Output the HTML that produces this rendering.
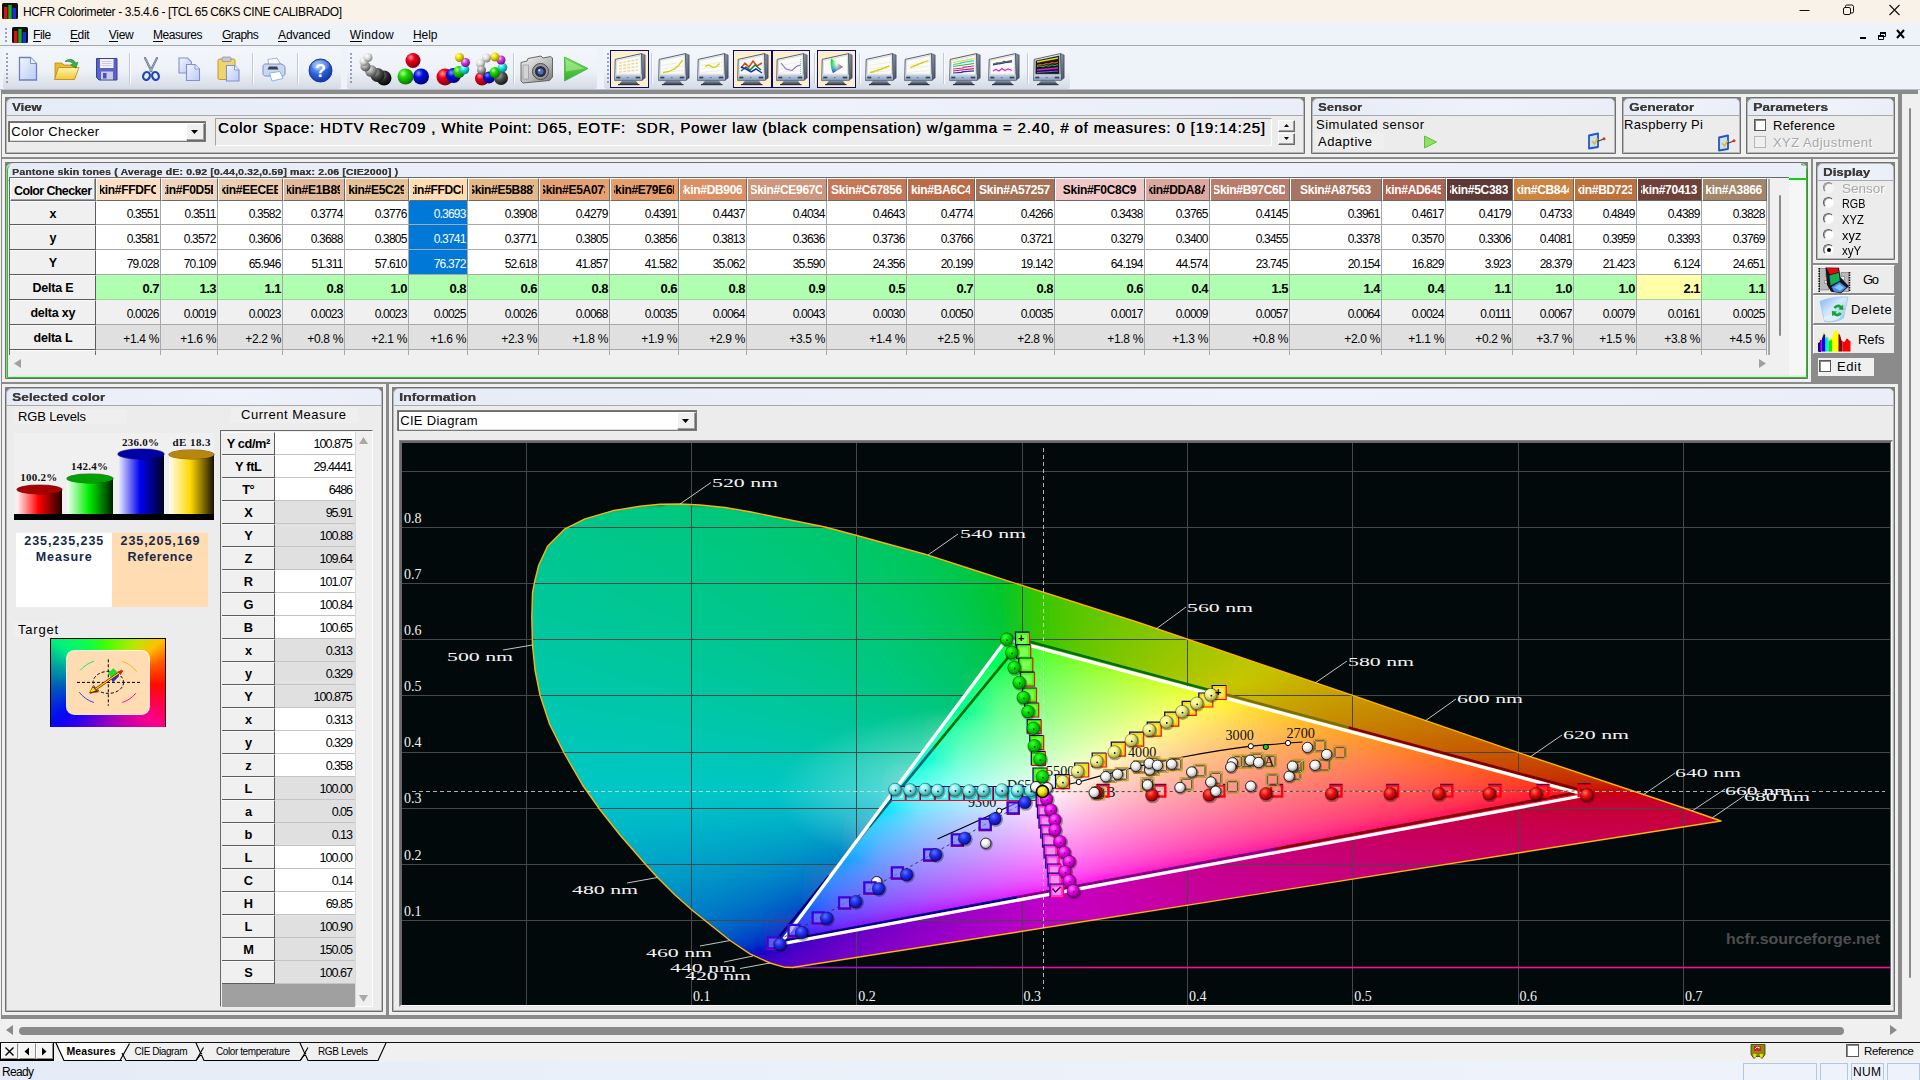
<!DOCTYPE html>
<html><head><meta charset="utf-8"><title>HCFR Colorimeter</title>
<style>
html,body{margin:0;padding:0;background:#f0f0f0;}
body{width:1920px;height:1080px;overflow:hidden;position:relative;font-family:"Liberation Sans",sans-serif;}
#app{position:absolute;left:0;top:0;width:1920px;height:1080px;overflow:hidden;}
#app div,#app span,#app svg{position:absolute}
</style></head><body><div id="app">
<div style="position:absolute;left:0px;top:0px;width:1920px;height:23px;background:#f9f2e8;"></div>
<svg style="position:absolute;left:2px;top:3px" width="16.0" height="16.0" viewBox="0 0 16 16"><rect x="0" y="0" width="16" height="16" rx="1.5" fill="#111"/><rect x="2" y="4" width="3.4" height="12" fill="#e01010"/><rect x="6.3" y="2" width="3.4" height="14" fill="#10b020"/><rect x="10.6" y="5" width="3.4" height="11" fill="#1030e0"/></svg>
<span style="position:absolute;left:23.00px;top:3.64px;font:400 12px/16px 'Liberation Sans',sans-serif;color:#000;white-space:pre;letter-spacing:-0.404px;">HCFR Colorimeter - 3.5.4.6 - [TCL 65 C6KS CINE CALIBRADO]</span>
<svg style="position:absolute;left:1780px;top:0" width="140" height="23" viewBox="0 0 140 23"><path d="M19.5 10.5h10" stroke="#111" stroke-width="1" fill="none"/><rect x="63.5" y="7.5" width="7" height="7" rx="1.5" fill="none" stroke="#111" stroke-width="1"/><path d="M65.5 7.5v-1.2a1.3 1.3 0 0 1 1.3-1.3h5a1.7 1.7 0 0 1 1.7 1.7v5a1.3 1.3 0 0 1-1.3 1.3h-1.2" fill="none" stroke="#111" stroke-width="1"/><path d="M109.5 5l10 10M119.5 5l-10 10" stroke="#111" stroke-width="1.1" fill="none"/></svg>
<div style="position:absolute;left:0px;top:23px;width:1920px;height:23px;background:#eef3fa;"></div>
<div style="position:absolute;left:5px;top:28px;width:2px;height:14px;background:repeating-linear-gradient(#7d8ea8 0 2px,transparent 2px 4px);opacity:.8"></div>
<svg style="position:absolute;left:12px;top:27px" width="16.0" height="16.0" viewBox="0 0 16 16"><rect x="0" y="0" width="16" height="16" rx="1.5" fill="#111"/><rect x="2" y="4" width="3.4" height="12" fill="#e01010"/><rect x="6.3" y="2" width="3.4" height="14" fill="#10b020"/><rect x="10.6" y="5" width="3.4" height="11" fill="#1030e0"/></svg>
<span style="position:absolute;left:33.00px;top:27.14px;font:400 12px/16px 'Liberation Sans',sans-serif;color:#000;white-space:pre;letter-spacing:-0.362px;">File</span>
<div style="position:absolute;left:33px;top:41px;width:8px;height:1px;background:#000;"></div>
<span style="position:absolute;left:70.00px;top:27.14px;font:400 12px/16px 'Liberation Sans',sans-serif;color:#000;white-space:pre;letter-spacing:-0.393px;">Edit</span>
<div style="position:absolute;left:70px;top:41px;width:9px;height:1px;background:#000;"></div>
<span style="position:absolute;left:108.75px;top:27.14px;font:400 12px/16px 'Liberation Sans',sans-serif;color:#000;white-space:pre;letter-spacing:-0.264px;">View</span>
<div style="position:absolute;left:109px;top:41px;width:9px;height:1px;background:#000;"></div>
<span style="position:absolute;left:153.00px;top:27.14px;font:400 12px/16px 'Liberation Sans',sans-serif;color:#000;white-space:pre;letter-spacing:-0.455px;">Measures</span>
<div style="position:absolute;left:153px;top:41px;width:10px;height:1px;background:#000;"></div>
<span style="position:absolute;left:222.00px;top:27.14px;font:400 12px/16px 'Liberation Sans',sans-serif;color:#000;white-space:pre;letter-spacing:-0.520px;">Graphs</span>
<div style="position:absolute;left:222px;top:41px;width:10px;height:1px;background:#000;"></div>
<span style="position:absolute;left:278.00px;top:27.14px;font:400 12px/16px 'Liberation Sans',sans-serif;color:#000;white-space:pre;letter-spacing:-0.125px;">Advanced</span>
<div style="position:absolute;left:278px;top:41px;width:9px;height:1px;background:#000;"></div>
<span style="position:absolute;left:349.75px;top:27.14px;font:400 12px/16px 'Liberation Sans',sans-serif;color:#000;white-space:pre;letter-spacing:0.264px;">Window</span>
<div style="position:absolute;left:350px;top:41px;width:12px;height:1px;background:#000;"></div>
<span style="position:absolute;left:413.00px;top:27.14px;font:400 12px/16px 'Liberation Sans',sans-serif;color:#000;white-space:pre;letter-spacing:-0.060px;">Help</span>
<div style="position:absolute;left:413px;top:41px;width:9px;height:1px;background:#000;"></div>
<svg style="position:absolute;left:1850px;top:26px" width="60" height="18" viewBox="0 0 60 18"><rect x="10" y="11" width="6" height="2" fill="#000"/><path d="M30.5 6.5h5v4h-5z M28.5 9.5h5v4h-5z" fill="#eef3fa" stroke="#000" stroke-width="1"/><path d="M30 6h6v2h-6z M28 9h6v2h-6z" fill="#000"/><path d="M47 4l7 8M54 4l-7 8" stroke="#000" stroke-width="2" fill="none"/></svg>
<div style="position:absolute;left:0px;top:46px;width:1920px;height:44px;background:#eef3fa;"></div>
<div style="position:absolute;left:0px;top:45px;width:1920px;height:1px;background:#a9a9a9;"></div>
<div style="position:absolute;left:3px;top:48px;width:338px;height:41px;background:linear-gradient(#f3f6fb 0%,#eef2f8 55%,#d5dbe6 100%);border-radius:3px;"></div>
<div style="position:absolute;left:6px;top:53px;width:2px;height:30px;background:repeating-linear-gradient(#7d8ea8 0 2px,transparent 2px 4px);opacity:.8"></div>
<div style="position:absolute;left:347px;top:48px;width:250px;height:41px;background:linear-gradient(#f3f6fb 0%,#eef2f8 55%,#d5dbe6 100%);border-radius:3px;"></div>
<div style="position:absolute;left:350px;top:53px;width:2px;height:30px;background:repeating-linear-gradient(#7d8ea8 0 2px,transparent 2px 4px);opacity:.8"></div>
<div style="position:absolute;left:604px;top:48px;width:466px;height:41px;background:linear-gradient(#f3f6fb 0%,#eef2f8 55%,#d5dbe6 100%);border-radius:3px;"></div>
<div style="position:absolute;left:607px;top:53px;width:2px;height:30px;background:repeating-linear-gradient(#7d8ea8 0 2px,transparent 2px 4px);opacity:.8"></div>
<div style="position:absolute;left:0px;top:89px;width:1920px;height:1px;background:#b9bec8;"></div>

<svg width="0" height="0" style="position:absolute">
<defs>
<linearGradient id="gBez" x1="0" y1="0" x2="1" y2="1"><stop offset="0" stop-color="#dfe6ee"/><stop offset=".5" stop-color="#a9b6c6"/><stop offset="1" stop-color="#5d6b80"/></linearGradient>
<linearGradient id="gStand" x1="0" y1="0" x2="0" y2="1"><stop offset="0" stop-color="#9aa8ba"/><stop offset="1" stop-color="#3a4352"/></linearGradient><linearGradient id="gSide" x1="0" y1="0" x2="1" y2="1"><stop offset="0" stop-color="#9aa5b6"/><stop offset="1" stop-color="#3a4454"/></linearGradient><linearGradient id="gStrip" x1="0" y1="0" x2="0" y2="1"><stop offset="0" stop-color="#c9d6e6"/><stop offset="1" stop-color="#7f95b6"/></linearGradient>
<radialGradient id="sR" cx=".35" cy=".3" r=".75"><stop offset="0" stop-color="#ff9a9a"/><stop offset=".35" stop-color="#e8001a"/><stop offset="1" stop-color="#7a0010"/></radialGradient>
<radialGradient id="sG" cx=".35" cy=".3" r=".75"><stop offset="0" stop-color="#b8ff9a"/><stop offset=".35" stop-color="#20d800"/><stop offset="1" stop-color="#0a6a00"/></radialGradient>
<radialGradient id="sB" cx=".35" cy=".3" r=".75"><stop offset="0" stop-color="#8a9aff"/><stop offset=".35" stop-color="#0010e0"/><stop offset="1" stop-color="#000070"/></radialGradient>
<radialGradient id="sY" cx=".35" cy=".3" r=".75"><stop offset="0" stop-color="#fffbc0"/><stop offset=".4" stop-color="#f0e000"/><stop offset="1" stop-color="#8a7a00"/></radialGradient>
<radialGradient id="sC" cx=".35" cy=".3" r=".75"><stop offset="0" stop-color="#d8ffff"/><stop offset=".4" stop-color="#20e0e0"/><stop offset="1" stop-color="#007a80"/></radialGradient>
<radialGradient id="sM" cx=".35" cy=".3" r=".75"><stop offset="0" stop-color="#ffd0ff"/><stop offset=".4" stop-color="#d040e0"/><stop offset="1" stop-color="#700080"/></radialGradient>
<radialGradient id="sW" cx=".35" cy=".3" r=".75"><stop offset="0" stop-color="#ffffff"/><stop offset=".5" stop-color="#d8d8d8"/><stop offset="1" stop-color="#777"/></radialGradient>
<radialGradient id="sL" cx=".35" cy=".3" r=".75"><stop offset="0" stop-color="#eeeeee"/><stop offset=".5" stop-color="#9a9a9a"/><stop offset="1" stop-color="#444"/></radialGradient>
<radialGradient id="sD" cx=".35" cy=".3" r=".75"><stop offset="0" stop-color="#aaaaaa"/><stop offset=".5" stop-color="#4a4a4a"/><stop offset="1" stop-color="#111"/></radialGradient>
<radialGradient id="sK" cx=".35" cy=".3" r=".75"><stop offset="0" stop-color="#888"/><stop offset=".5" stop-color="#2a2a2a"/><stop offset="1" stop-color="#000"/></radialGradient>
<radialGradient id="sHelp" cx=".4" cy=".3" r=".8"><stop offset="0" stop-color="#9dc0ff"/><stop offset=".5" stop-color="#2a5fd8"/><stop offset="1" stop-color="#0a2a90"/></radialGradient>
<g id="mon">
  <path d="M8.500 27.300 L21.500 27.300 L24.500 31.200 L5 31.200z" fill="url(#gStand)"/>
  <path d="M4 31h21.500v1.200H4z" fill="#2e3440"/>
  <path d="M27.500 .6 L31.200 2 L31.200 25 L28 27.300z" fill="url(#gSide)" stroke="#3d4656" stroke-width=".5"/>
  <path d="M1.200 6.400 L27.500 .6 L28 27.300 L.7 27.600z" fill="#f3f5f8" stroke="#465062" stroke-width=".9" stroke-linejoin="round"/>
  <path d="M1.300 21.800 L27.800 21.800 L28 27.300 L.7 27.600z" fill="url(#gStrip)"/>
  <rect x="2.300" y="23.700" width="4" height="1.700" fill="#39424f"/><rect x="21.700" y="23.700" width="4.500" height="1.700" fill="#39424f"/><rect x="12.800" y="24.100" width="1.800" height="1" fill="#65748a"/>
</g>
</defs></svg>

<svg style="position:absolute;left:17px;top:55px" width="24" height="28" viewBox="0 0 24 28"><defs><linearGradient id="gDoc" x1="0" y1="0" x2="1" y2="1"><stop offset="0" stop-color="#f6f8ff"/><stop offset=".5" stop-color="#d6dffa"/><stop offset="1" stop-color="#bccaf6"/></linearGradient></defs><path d="M2.5 2.5h11l6 6v16.5h-17z" fill="url(#gDoc)" stroke="#6f7fc4" stroke-width="1.3"/><path d="M13.5 2.5v6h6" fill="#e8eefc" stroke="#7f93c8" stroke-width="1"/></svg>
<svg style="position:absolute;left:53px;top:55px" width="28" height="28" viewBox="0 0 28 28"><defs><linearGradient id="gFo" x1="0" y1="0" x2="0" y2="1"><stop offset="0" stop-color="#fff6b0"/><stop offset="1" stop-color="#f6c634"/></linearGradient></defs><path d="M2 8h7l2 2h11v13H2z" fill="#eeb828" stroke="#b88a18" stroke-width=".8"/><path d="M5.5 12.5h20.5l-4.5 12H1.5z" fill="url(#gFo)" stroke="#b08818" stroke-width=".8"/><path d="M12 6.5c4-3.5 9-2.5 10.500 1.500l2.300-.8-1.800 6-5.200-3.300 2.400-.9c-1.500-2.500-4.800-2.800-8.200-2.500z" fill="#3cb043" stroke="#1f7a28" stroke-width=".6"/></svg>
<svg style="position:absolute;left:95px;top:57px" width="24" height="25" viewBox="0 0 24 25"><path d="M1.5 1.500h20.500v21.500h-18l-2.500-2.500z" fill="#5a63c8" stroke="#3a3f98" stroke-width="1"/><rect x="5" y="2" width="13.500" height="9" fill="#f2f2f8"/><path d="M6.500 4.500h10M6.500 6.500h10M6.500 8.500h10" stroke="#b9bdd0" stroke-width=".7"/><rect x="6" y="14.500" width="12" height="8" fill="#c8cbe8"/><rect x="8" y="16" width="3.500" height="5.500" fill="#4a51b0"/></svg>
<div style="position:absolute;left:129px;top:53px;width:1px;height:31px;background:#c3cad6;"></div>
<div style="position:absolute;left:130px;top:53px;width:1px;height:31px;background:#fafcff;"></div>
<svg style="position:absolute;left:141px;top:57px" width="20" height="25" viewBox="0 0 20 25"><path d="M4 1l6.500 13M16 1l-6.500 13" stroke="#69738a" stroke-width="2.200" stroke-linecap="round" fill="none"/><path d="M4 1l6.500 13M16 1l-6.500 13" stroke="#c9d0de" stroke-width=".6" stroke-linecap="round" fill="none"/><ellipse cx="5.500" cy="19" rx="3.300" ry="4" fill="none" stroke="#1f47b8" stroke-width="2.200" transform="rotate(20 5.500 19)"/><ellipse cx="14.500" cy="19" rx="3.300" ry="4" fill="none" stroke="#1f47b8" stroke-width="2.200" transform="rotate(-20 14.500 19)"/></svg>
<svg style="position:absolute;left:177px;top:56px" width="26" height="27" viewBox="0 0 26 27"><path d="M2 2h8.500l4 4v11H2z" fill="url(#gDoc)" stroke="#7f93c8" stroke-width="1.100"/><path d="M9.500 8.500h8.500l4.500 4.500v11.500h-13z" fill="url(#gDoc)" stroke="#7f93c8" stroke-width="1.100"/><path d="M18 8.500v4.500h4.500" fill="#e8eefc" stroke="#7f93c8" stroke-width=".9"/></svg>
<svg style="position:absolute;left:216px;top:55px" width="26" height="28" viewBox="0 0 26 28"><rect x="2" y="4" width="17" height="20.500" rx="1.500" fill="#f0d46c" stroke="#b89a38" stroke-width="1"/><rect x="6" y="2" width="9" height="4.500" rx="1" fill="#c4c8d0" stroke="#8a8f98" stroke-width=".7"/><path d="M10.500 10.500h8l4.500 4.500v11h-12.500z" fill="url(#gDoc)" stroke="#7f93c8" stroke-width="1.100"/><path d="M18.500 10.500v4.500h4.500" fill="#e8eefc" stroke="#7f93c8" stroke-width=".9"/></svg>
<div style="position:absolute;left:252px;top:53px;width:1px;height:31px;background:#c3cad6;"></div>
<div style="position:absolute;left:253px;top:53px;width:1px;height:31px;background:#fafcff;"></div>
<svg style="position:absolute;left:261px;top:57px" width="26" height="26" viewBox="0 0 26 26"><path d="M7 2.500l9-1.500 3.500 6-12 1.500z" fill="#fff" stroke="#8ea0c0" stroke-width=".8"/><path d="M2 9.500c0-1.500 1-2.500 2.500-2.500h15c2.500 0 4.500 1.500 4.500 4v5.500c0 1.500-1 2.500-2.500 2.500h-17c-1.500 0-2.500-1-2.500-2.500z" fill="#c8d8f0" stroke="#6f88b4" stroke-width=".9"/><path d="M8 9.500h8l1.500 3h-11z" fill="#3a3f50"/><path d="M8.500 16l10.500-1.500 3 7-11 2.500z" fill="#fff" stroke="#7fb0e8" stroke-width=".9"/></svg>
<div style="position:absolute;left:297px;top:53px;width:1px;height:31px;background:#c3cad6;"></div>
<div style="position:absolute;left:298px;top:53px;width:1px;height:31px;background:#fafcff;"></div>
<svg style="position:absolute;left:308px;top:58px" width="25" height="25" viewBox="0 0 25 25"><circle cx="12.500" cy="12.500" r="11.500" fill="url(#sHelp)" stroke="#1a3a9a" stroke-width="1"/><ellipse cx="12.500" cy="7.500" rx="8.500" ry="5" fill="#fff" opacity=".22"/><text x="12.500" y="19" text-anchor="middle" font-family="Liberation Sans,sans-serif" font-weight="700" font-size="18" fill="#fff">?</text></svg>
<svg style="position:absolute;left:356px;top:52px" width="36" height="36" viewBox="0 0 36 36"><circle cx="28" cy="26" r="7.5" fill="url(#sK)"/><circle cx="21.5" cy="23" r="7" fill="url(#sD)"/><circle cx="15" cy="19" r="6" fill="url(#sL)"/><circle cx="9.5" cy="14.5" r="5" fill="url(#sL)"/><circle cx="8" cy="9.5" r="4.5" fill="url(#sW)"/><circle cx="12" cy="5.5" r="4.5" fill="url(#sW)"/></svg>
<svg style="position:absolute;left:396px;top:52px" width="36" height="36" viewBox="0 0 36 36"><circle cx="17" cy="8.5" r="7.5" fill="url(#sR)"/><circle cx="9.5" cy="24.5" r="8" fill="url(#sG)"/><circle cx="25" cy="24.5" r="8" fill="url(#sB)"/></svg>
<svg style="position:absolute;left:435px;top:52px" width="36" height="36" viewBox="0 0 36 36"><circle cx="10" cy="25" r="8.5" fill="url(#sR)"/><circle cx="18.5" cy="23.5" r="7.5" fill="url(#sB)"/><circle cx="24" cy="20" r="6" fill="url(#sG)"/><circle cx="29.5" cy="17.5" r="4.8" fill="url(#sC)"/><circle cx="30.5" cy="10.5" r="4.5" fill="url(#sM)"/><circle cx="24.5" cy="5.5" r="4.5" fill="url(#sY)"/></svg>
<svg style="position:absolute;left:474px;top:52px" width="36" height="36" viewBox="0 0 36 36"><circle cx="8" cy="26.5" r="7" fill="url(#sR)"/><circle cx="15" cy="25.5" r="6" fill="url(#sB)"/><circle cx="27" cy="26" r="7" fill="url(#sD)"/><circle cx="21" cy="20.5" r="5.5" fill="url(#sG)"/><circle cx="28.5" cy="15.5" r="4.8" fill="url(#sC)"/><circle cx="27" cy="8" r="4.5" fill="url(#sM)"/><circle cx="21" cy="5" r="4.5" fill="url(#sY)"/><circle cx="12.5" cy="6" r="4.5" fill="url(#sW)"/><circle cx="6.5" cy="11.5" r="4.5" fill="url(#sW)"/><circle cx="7.5" cy="18" r="4.5" fill="url(#sL)"/></svg>
<div style="position:absolute;left:513px;top:53px;width:1px;height:31px;background:#c3cad6;"></div>
<div style="position:absolute;left:514px;top:53px;width:1px;height:31px;background:#fafcff;"></div>
<svg style="position:absolute;left:519px;top:54px" width="35" height="32" viewBox="0 0 35 32"><defs><linearGradient id="gCam" x1="0" y1="0" x2="1" y2="1"><stop offset="0" stop-color="#f4f4f4"/><stop offset=".6" stop-color="#b8b8b8"/><stop offset="1" stop-color="#6e6e6e"/></linearGradient></defs><path d="M2 8.500l6-1.500 1-2.500 13-2.500 2 2 7.500-1.500 2 1.500v19l-3 3.500-26.500 2.500-2-2z" fill="url(#gCam)" stroke="#5a5a5a" stroke-width=".9"/><rect x="4" y="11" width="5.500" height="14" fill="#d4d4d4" stroke="#8a8a8a" stroke-width=".6"/><circle cx="21.500" cy="17.500" r="8" fill="#9a9a9a" stroke="#4a4a4a" stroke-width="1"/><circle cx="21.500" cy="17.500" r="5.500" fill="#2a2d3c"/><circle cx="21.500" cy="17.500" r="3" fill="#4a6fc0"/><circle cx="20.300" cy="16.300" r="1.100" fill="#cfe0ff"/></svg>
<svg style="position:absolute;left:562px;top:55px" width="28" height="28" viewBox="0 0 28 28"><defs><linearGradient id="gPl" x1="0" y1="0" x2="0" y2="1"><stop offset="0" stop-color="#7ee060"/><stop offset="1" stop-color="#2fae2a"/></linearGradient></defs><path d="M2.500 2l23.500 11.500L2.500 26z" fill="url(#gPl)" stroke="#4cc048" stroke-width="1" stroke-linejoin="round"/><path d="M4 4.500l18 9-18 3z" fill="#b8f0a0" opacity=".55"/></svg>
<svg width="0" height="0" style="position:absolute"><defs><clipPath id="cs"><path d="M2.6 7.6 L26.3 2.4 L26.5 21.2 L2.3 21.2z"/></clipPath></defs></svg>
<div style="position:absolute;left:609.8px;top:49.800000000000004px;width:38.8px;height:38.6px;background:#fdefca;border:1.6px solid #0a0a80;box-sizing:border-box;"></div><svg style="position:absolute;left:613.8px;top:52.6px" width="33" height="34" viewBox="0 0 33 34"><use href="#mon"/><path d="M2.6 7.6 L26.3 2.4 L26.5 21.2 L2.3 21.2z" fill="#fbfbf8" stroke="#aeb6c2" stroke-width=".4"/><g clip-path="url(#cs)"><path d="M5 10l19-3.500M5 13l19-3M5 16l19-2.500M5 19l19-2" stroke="#f2d9a0" stroke-width="1.600" stroke-dasharray="3 1.200" fill="none"/></g></svg>
<svg style="position:absolute;left:658px;top:52.6px" width="33" height="34" viewBox="0 0 33 34"><use href="#mon"/><path d="M2.6 7.6 L26.3 2.4 L26.5 21.2 L2.3 21.2z" fill="#fbfbf8" stroke="#aeb6c2" stroke-width=".4"/><path d="M4 12.500l21-3.500M4 16l21-3M4 19.500l21-2" stroke="#e4e4dc" stroke-width=".6" fill="none"/><path d="M5 19.500c8-.5 15-4 19.500-12.500" stroke="#d8c800" stroke-width="1.300" fill="none"/></svg>
<svg style="position:absolute;left:697.2px;top:52.6px" width="33" height="34" viewBox="0 0 33 34"><use href="#mon"/><path d="M2.6 7.6 L26.3 2.4 L26.5 21.2 L2.3 21.2z" fill="#fbfbf8" stroke="#aeb6c2" stroke-width=".4"/><path d="M4 12.500l21-3.500M4 16l21-3M4 19.500l21-2" stroke="#e4e4dc" stroke-width=".6" fill="none"/><path d="M8 13.500l4-1.500 4 2.500 3.500-1 3-3" stroke="#d8c800" stroke-width="1.300" fill="none"/></svg>
<div style="position:absolute;left:732.9px;top:49.800000000000004px;width:38.8px;height:38.6px;background:#fdefca;border:1.6px solid #0a0a80;box-sizing:border-box;"></div><svg style="position:absolute;left:736.9px;top:52.6px" width="33" height="34" viewBox="0 0 33 34"><use href="#mon"/><path d="M2.6 7.6 L26.3 2.4 L26.5 21.2 L2.3 21.2z" fill="#fbfbf8" stroke="#aeb6c2" stroke-width=".4"/><path d="M4 15l4-5 4 4 4-6 4 5 5-3" stroke="#e04010" stroke-width="1.500" fill="none"/><path d="M4 18l5-4 4 3 5-5 6 5" stroke="#108030" stroke-width="1.500" fill="none"/><path d="M4 14l5 2 5 3 5-3 6 4" stroke="#1030c0" stroke-width="1.500" fill="none"/></svg>
<div style="position:absolute;left:771.6px;top:49.800000000000004px;width:38.8px;height:38.6px;background:#fdefca;border:1.6px solid #0a0a80;box-sizing:border-box;"></div><svg style="position:absolute;left:775.6px;top:52.6px" width="33" height="34" viewBox="0 0 33 34"><use href="#mon"/><path d="M2.6 7.6 L26.3 2.4 L26.5 21.2 L2.3 21.2z" fill="#fbfbf8" stroke="#aeb6c2" stroke-width=".4"/><path d="M4 12.500l21-3.500M4 16l21-3M4 19.500l21-2" stroke="#e4e4dc" stroke-width=".6" fill="none"/><path d="M5 10l5 6 6 1.500 5-4.500 4-1" stroke="#7a70d8" stroke-width="1.100" fill="none"/><path d="M24.500 6v15" stroke="#80c080" stroke-width=".8" stroke-dasharray="1 1"/></svg>
<div style="position:absolute;left:817px;top:49.800000000000004px;width:38.8px;height:38.6px;background:#fdefca;border:1.6px solid #0a0a80;box-sizing:border-box;"></div><svg style="position:absolute;left:821px;top:52.6px" width="33" height="34" viewBox="0 0 33 34"><use href="#mon"/><path d="M2.6 7.6 L26.3 2.4 L26.5 21.2 L2.3 21.2z" fill="#fbfbf8" stroke="#aeb6c2" stroke-width=".4"/><defs><linearGradient id="gc1" x1="0" y1="0" x2="1" y2="0"><stop offset="0" stop-color="#10d030"/><stop offset=".5" stop-color="#f4fff0"/><stop offset="1" stop-color="#f02020"/></linearGradient><linearGradient id="gc2" x1="0" y1="0" x2="0" y2="1"><stop offset=".35" stop-color="#20e0c0" stop-opacity="0"/><stop offset="1" stop-color="#3020ff"/></linearGradient></defs><path d="M10.500 5.500c-1.500 2-1 9 1.500 14.500l10-6z" fill="url(#gc1)"/><path d="M10.500 5.500c-1.500 2-1 9 1.500 14.500l10-6z" fill="url(#gc2)"/><path d="M10.500 5.500l1 3-1.500 1z" fill="#20d020"/></svg>
<svg style="position:absolute;left:865px;top:52.6px" width="33" height="34" viewBox="0 0 33 34"><use href="#mon"/><path d="M2.6 7.6 L26.3 2.4 L26.5 21.2 L2.3 21.2z" fill="#fbfbf8" stroke="#aeb6c2" stroke-width=".4"/><path d="M4 12.500l21-3.500M4 16l21-3M4 19.500l21-2" stroke="#e4e4dc" stroke-width=".6" fill="none"/><path d="M5 19.500l4-.8 0-.5 4-.7 0-.6 4-.8 0-.6 4-.8 0-.6 3.500-.9" stroke="#d8c800" stroke-width="1.300" fill="none"/></svg>
<svg style="position:absolute;left:903.8px;top:52.6px" width="33" height="34" viewBox="0 0 33 34"><use href="#mon"/><path d="M2.6 7.6 L26.3 2.4 L26.5 21.2 L2.3 21.2z" fill="#fbfbf8" stroke="#aeb6c2" stroke-width=".4"/><path d="M4 12.500l21-3.500M4 16l21-3M4 19.500l21-2" stroke="#e4e4dc" stroke-width=".6" fill="none"/><path d="M6 14.500l3.500-1 0-.5 4-1 0-.5 4-1.200 0-.5 4-1.300 3-1" stroke="#d8c800" stroke-width="1.300" fill="none"/></svg>
<svg style="position:absolute;left:948.8px;top:52.6px" width="33" height="34" viewBox="0 0 33 34"><use href="#mon"/><path d="M2.6 7.6 L26.3 2.4 L26.5 21.2 L2.3 21.2z" fill="#fbfbf8" stroke="#aeb6c2" stroke-width=".4"/><g clip-path="url(#cs)"><path d="M4 9.500l21-4" stroke="#e8d800" stroke-width="1.200"/><path d="M4 11.500l8-1.200 0-.6 13-2" stroke="#20d0d0" stroke-width="1.200" fill="none"/><path d="M4 13.500l21-3" stroke="#20c020" stroke-width="1.200"/><path d="M4 16l10-1 0-.6 11-1.400" stroke="#e020d0" stroke-width="1.200" fill="none"/><path d="M4 18l21-2.300" stroke="#e02020" stroke-width="1.200"/><path d="M4 20l9-.6 0-.5 12-1" stroke="#2030e0" stroke-width="1.200" fill="none"/></g></svg>
<svg style="position:absolute;left:987.5px;top:52.6px" width="33" height="34" viewBox="0 0 33 34"><use href="#mon"/><path d="M2.6 7.6 L26.3 2.4 L26.5 21.2 L2.3 21.2z" fill="#fbfbf8" stroke="#aeb6c2" stroke-width=".4"/><g clip-path="url(#cs)"><path d="M5 11.500l4-1.500 3 .5 4-2 4 .5 4-1.500" stroke="#e02020" stroke-width="1.400" fill="none"/><path d="M5 11l4-.5 3-.8 4-.2 4-1.500 4 .3" stroke="#20b020" stroke-width="1" fill="none"/><path d="M5 12l5-1 4-.5 5-1.200 5-.3" stroke="#2030e0" stroke-width="1" fill="none"/><path d="M5 18l3-1.500 3 1.500 3-2.500 3 2 3-1.500 4 1.500" stroke="#e020d0" stroke-width="1.200" fill="none"/></g></svg>
<svg style="position:absolute;left:1032.5px;top:52.6px" width="33" height="34" viewBox="0 0 33 34"><use href="#mon"/><path d="M2.6 7.6 L26.3 2.4 L26.5 21.2 L2.3 21.2z" fill="#16161c" stroke="#aeb6c2" stroke-width=".4"/><g clip-path="url(#cs)"><path d="M4 9l21-4" stroke="#e8d800" stroke-width="1.300"/><path d="M4 12.500l3-1 3 .5 3-1.500 3 .5 3-1.500 3 .5 3-1" stroke="#e06020" stroke-width="1.200" fill="none"/><path d="M4 13.500l3-.5 3 .8 3-1.300 3 .8 3-1.300 3 .6 3-1" stroke="#20c040" stroke-width="1" fill="none"/><path d="M4 17l21-2" stroke="#e020d0" stroke-width="1.300"/><path d="M4 19.500l21-1.500" stroke="#6060ff" stroke-width="1.100"/></g></svg>
<div style="position:absolute;left:651px;top:53px;width:1px;height:31px;background:#c3cad6;"></div>
<div style="position:absolute;left:652px;top:53px;width:1px;height:31px;background:#fafcff;"></div>
<div style="position:absolute;left:813.5px;top:53px;width:1px;height:31px;background:#c3cad6;"></div>
<div style="position:absolute;left:814.5px;top:53px;width:1px;height:31px;background:#fafcff;"></div>
<div style="position:absolute;left:858.5px;top:53px;width:1px;height:31px;background:#c3cad6;"></div>
<div style="position:absolute;left:859.5px;top:53px;width:1px;height:31px;background:#fafcff;"></div>
<div style="position:absolute;left:942.5px;top:53px;width:1px;height:31px;background:#c3cad6;"></div>
<div style="position:absolute;left:943.5px;top:53px;width:1px;height:31px;background:#fafcff;"></div>
<div style="position:absolute;left:1026.5px;top:53px;width:1px;height:31px;background:#c3cad6;"></div>
<div style="position:absolute;left:1027.5px;top:53px;width:1px;height:31px;background:#fafcff;"></div>
<div style="position:absolute;left:0px;top:90px;width:1920px;height:952px;background:#f0f0f0;"></div>
<div style="position:absolute;left:2px;top:90px;width:1900px;height:929px;background:#8b8b8b;"></div>
<div style="position:absolute;left:0px;top:90px;width:1918px;height:4px;background:#8b8b8b;"></div>
<div style="position:absolute;left:1902px;top:94px;width:18px;height:926px;background:#f0f0f0;"></div>
<div style="position:absolute;left:1909px;top:108px;width:2px;height:870px;background:#8a8a8a;border-radius:1px"></div>
<div style="position:absolute;left:0px;top:90px;width:1px;height:930px;background:#f0f0f0;"></div>
<div style="position:absolute;left:1px;top:90px;width:1px;height:930px;background:#8a8a8a;"></div>
<div style="position:absolute;left:2px;top:94px;width:1306px;height:63px;background:#f0f0f0;"></div><div style="position:absolute;left:5px;top:97px;width:7px;height:7px;background:#808080;"></div><div style="position:absolute;left:1298px;top:97px;width:7px;height:7px;background:#808080;"></div><div style="position:absolute;left:5px;top:97px;width:1300px;height:57px;background:#ececec;border:1px solid #6f6f6f;box-sizing:border-box;border-radius:7px 7px 0 0;box-shadow:inset 1px 1px 0 #b8b8b8, inset -1px -1px 0 #b8b8b8;"></div><div style="position:absolute;left:7px;top:99px;width:1296px;height:16px;background:linear-gradient(90deg,#e6ecf7 0%,#eef2fa 60%,#e9eef8 100%);border-radius:5px 5px 0 0;"></div><div style="position:absolute;left:7px;top:115px;width:1296px;height:1px;background:#a9a9a9;"></div><span style="position:absolute;left:12.00px;top:100.49px;font:700 11px/14px 'Liberation Sans',sans-serif;color:#3f3a3a;white-space:pre;transform:scaleX(1.186);transform-origin:0 0;text-shadow:.3px 0 0 #3f3a3a;">View</span>
<div style="position:absolute;left:8px;top:121px;width:198px;height:21px;background:#fff;box-sizing:border-box;border:1px solid #7a7a7a;box-shadow:inset 1px 1px 0 #6a6a6a, inset -1px -1px 0 #dcdcdc;"></div><div style="position:absolute;left:186px;top:123px;width:18px;height:17px;background:#f0f0f0;box-sizing:border-box;border:1px solid #a0a0a0;border-top-color:#fff;border-left-color:#fff;box-shadow:1px 1px 0 #696969;"></div><svg style="position:absolute;left:191px;top:129.5px" width="8" height="5"><path d="M0 0h7l-3.500 4z" fill="#000"/></svg><span style="position:absolute;left:11.20px;top:123.30px;font:400 13px/17px 'Liberation Sans',sans-serif;color:#000;white-space:pre;letter-spacing:0.409px;">Color Checker</span>
<div style="position:absolute;left:215px;top:118px;width:1057px;height:28px;background:#ececec;box-sizing:border-box;border:1px solid #fff;border-top-color:#a2a2a2;border-left-color:#a2a2a2;"></div>
<span style="position:absolute;left:218.00px;top:118.30px;font:400 15px/20px 'Liberation Sans',sans-serif;color:#000;white-space:pre;letter-spacing:0.855px;text-shadow:.3px 0 0 #000;">Color Space: HDTV Rec709 , White Point: D65, EOTF:  SDR, Power law (black compensation) w/gamma = 2.40, # of measures: 0 [19:14:25]</span>
<div style="position:absolute;left:1278px;top:120px;width:17px;height:12px;background:#f0f0f0;box-sizing:border-box;border:1px solid #fff;border-right-color:#696969;border-bottom-color:#696969;box-shadow:inset -1px -1px 0 #a0a0a0;"></div>
<svg style="position:absolute;left:1284px;top:124px" width="6" height="4"><path d="M0 3l2.500-3 2.500 3z" fill="#000"/></svg>
<div style="position:absolute;left:1278px;top:133px;width:17px;height:12px;background:#f0f0f0;box-sizing:border-box;border:1px solid #fff;border-right-color:#696969;border-bottom-color:#696969;box-shadow:inset -1px -1px 0 #a0a0a0;"></div>
<svg style="position:absolute;left:1284px;top:137px" width="6" height="4"><path d="M0 0h5l-2.500 3z" fill="#000"/></svg>
<div style="position:absolute;left:1308px;top:94px;width:311px;height:63px;background:#f0f0f0;"></div><div style="position:absolute;left:1311px;top:97px;width:7px;height:7px;background:#808080;"></div><div style="position:absolute;left:1609px;top:97px;width:7px;height:7px;background:#808080;"></div><div style="position:absolute;left:1311px;top:97px;width:305px;height:57px;background:#ececec;border:1px solid #6f6f6f;box-sizing:border-box;border-radius:7px 7px 0 0;box-shadow:inset 1px 1px 0 #b8b8b8, inset -1px -1px 0 #b8b8b8;"></div><div style="position:absolute;left:1313px;top:99px;width:301px;height:16px;background:linear-gradient(90deg,#e6ecf7 0%,#eef2fa 60%,#e9eef8 100%);border-radius:5px 5px 0 0;"></div><div style="position:absolute;left:1313px;top:115px;width:301px;height:1px;background:#a9a9a9;"></div><span style="position:absolute;left:1318.00px;top:100.49px;font:700 11px/14px 'Liberation Sans',sans-serif;color:#3f3a3a;white-space:pre;transform:scaleX(1.18);transform-origin:0 0;text-shadow:.3px 0 0 #3f3a3a;">Sensor</span>
<span style="position:absolute;left:1316.00px;top:116.20px;font:400 13px/17px 'Liberation Sans',sans-serif;color:#000;white-space:pre;letter-spacing:0.504px;">Simulated sensor</span>
<div style="position:absolute;left:1316px;top:133px;width:68px;height:16px;background:#efefef;"></div>
<span style="position:absolute;left:1318.00px;top:133.20px;font:400 13px/17px 'Liberation Sans',sans-serif;color:#000;white-space:pre;letter-spacing:0.487px;">Adaptive</span>
<svg style="position:absolute;left:1424px;top:135px" width="14" height="14"><path d="M.5 1l12 6-12 6z" fill="#8fe060" stroke="#5cc040" stroke-width="1"/></svg>
<svg style="position:absolute;left:1587px;top:132px" width="20" height="18" viewBox="0 0 20 18"><path d="M2 3.500l9-2v13.500l-9 1.500z" fill="#cfe0ff" stroke="#1f57c8" stroke-width="1.800" stroke-linejoin="round"/><path d="M5 9l2.500 3 3-5.500" stroke="#e8b820" stroke-width="1.600" fill="none"/><path d="M10.500 9.500l6-2.500" stroke="#444" stroke-width="1.300"/><circle cx="17" cy="6.800" r="1.500" fill="#e03020"/></svg>
<div style="position:absolute;left:1619px;top:94px;width:125px;height:63px;background:#f0f0f0;"></div><div style="position:absolute;left:1622px;top:97px;width:7px;height:7px;background:#808080;"></div><div style="position:absolute;left:1734px;top:97px;width:7px;height:7px;background:#808080;"></div><div style="position:absolute;left:1622px;top:97px;width:119px;height:57px;background:#ececec;border:1px solid #6f6f6f;box-sizing:border-box;border-radius:7px 7px 0 0;box-shadow:inset 1px 1px 0 #b8b8b8, inset -1px -1px 0 #b8b8b8;"></div><div style="position:absolute;left:1624px;top:99px;width:115px;height:16px;background:linear-gradient(90deg,#e6ecf7 0%,#eef2fa 60%,#e9eef8 100%);border-radius:5px 5px 0 0;"></div><div style="position:absolute;left:1624px;top:115px;width:115px;height:1px;background:#a9a9a9;"></div><span style="position:absolute;left:1629.00px;top:100.49px;font:700 11px/14px 'Liberation Sans',sans-serif;color:#3f3a3a;white-space:pre;transform:scaleX(1.236);transform-origin:0 0;text-shadow:.3px 0 0 #3f3a3a;">Generator</span>
<span style="position:absolute;left:1624.00px;top:116.20px;font:400 13px/17px 'Liberation Sans',sans-serif;color:#000;white-space:pre;letter-spacing:0.351px;">Raspberry Pi</span>
<svg style="position:absolute;left:1717px;top:134px" width="20" height="18" viewBox="0 0 20 18"><path d="M2 3.500l9-2v13.500l-9 1.500z" fill="#cfe0ff" stroke="#1f57c8" stroke-width="1.800" stroke-linejoin="round"/><path d="M5 9l2.500 3 3-5.500" stroke="#e8b820" stroke-width="1.600" fill="none"/><path d="M10.500 9.500l6-2.500" stroke="#444" stroke-width="1.300"/><circle cx="17" cy="6.800" r="1.500" fill="#e03020"/></svg>
<div style="position:absolute;left:1743px;top:94px;width:155px;height:63px;background:#f0f0f0;"></div><div style="position:absolute;left:1746px;top:97px;width:7px;height:7px;background:#808080;"></div><div style="position:absolute;left:1888px;top:97px;width:7px;height:7px;background:#808080;"></div><div style="position:absolute;left:1746px;top:97px;width:149px;height:57px;background:#ececec;border:1px solid #6f6f6f;box-sizing:border-box;border-radius:7px 7px 0 0;box-shadow:inset 1px 1px 0 #b8b8b8, inset -1px -1px 0 #b8b8b8;"></div><div style="position:absolute;left:1748px;top:99px;width:145px;height:16px;background:linear-gradient(90deg,#e6ecf7 0%,#eef2fa 60%,#e9eef8 100%);border-radius:5px 5px 0 0;"></div><div style="position:absolute;left:1748px;top:115px;width:145px;height:1px;background:#a9a9a9;"></div><span style="position:absolute;left:1753.00px;top:100.49px;font:700 11px/14px 'Liberation Sans',sans-serif;color:#3f3a3a;white-space:pre;transform:scaleX(1.251);transform-origin:0 0;text-shadow:.3px 0 0 #3f3a3a;">Parameters</span>
<div style="position:absolute;left:1754px;top:119px;width:12px;height:12px;background:#fff;box-sizing:border-box;border:1px solid #5a5a5a;box-shadow:inset 1px 1px 0 #8a8a8a;"></div>
<span style="position:absolute;left:1773.00px;top:117.00px;font:400 13px/17px 'Liberation Sans',sans-serif;color:#000;white-space:pre;letter-spacing:0.252px;">Reference</span>
<div style="position:absolute;left:1754px;top:136px;width:12px;height:12px;background:#f0f0f0;box-sizing:border-box;border:1px solid #b5b5b5;"></div>
<span style="position:absolute;left:1773.00px;top:134.00px;font:400 13px/17px 'Liberation Sans',sans-serif;color:#a8a8a8;white-space:pre;letter-spacing:0.445px;text-shadow:1px 1px 0 #fff;">XYZ Adjustment</span>
<div style="position:absolute;left:1813px;top:159px;width:85px;height:104px;background:#f0f0f0;"></div><div style="position:absolute;left:1816px;top:162px;width:7px;height:7px;background:#808080;"></div><div style="position:absolute;left:1888px;top:162px;width:7px;height:7px;background:#808080;"></div><div style="position:absolute;left:1816px;top:162px;width:79px;height:98px;background:#ececec;border:1px solid #6f6f6f;box-sizing:border-box;border-radius:7px 7px 0 0;box-shadow:inset 1px 1px 0 #b8b8b8, inset -1px -1px 0 #b8b8b8;"></div><div style="position:absolute;left:1818px;top:164px;width:75px;height:16px;background:linear-gradient(90deg,#e6ecf7 0%,#eef2fa 60%,#e9eef8 100%);border-radius:5px 5px 0 0;"></div><div style="position:absolute;left:1818px;top:180px;width:75px;height:1px;background:#a9a9a9;"></div><span style="position:absolute;left:1823.00px;top:165.49px;font:700 11px/14px 'Liberation Sans',sans-serif;color:#3f3a3a;white-space:pre;transform:scaleX(1.201);transform-origin:0 0;text-shadow:.3px 0 0 #3f3a3a;">Display</span>
<div style="position:absolute;left:1823px;top:181.5px;width:11px;height:11px;background:#f4f4f4;box-sizing:border-box;border-radius:50%;border:1.3px solid #8a8a8a;border-right-color:#f6f6f6;border-bottom-color:#f6f6f6;box-shadow:inset .8px .8px 0 #9a9a9a;"></div>
<span style="position:absolute;left:1841.50px;top:180.50px;font:400 12.4px/16px 'Liberation Sans',sans-serif;color:#a8a8a8;white-space:pre;transform:scaleX(1.092);transform-origin:0 0;text-shadow:1px 1px 0 #fff;">Sensor</span>
<div style="position:absolute;left:1823px;top:197.2px;width:11px;height:11px;background:#fff;box-sizing:border-box;border-radius:50%;border:1.3px solid #5a5a5a;border-right-color:#f6f6f6;border-bottom-color:#f6f6f6;box-shadow:inset .8px .8px 0 #9a9a9a;"></div>
<span style="position:absolute;left:1841.50px;top:196.20px;font:400 12.4px/16px 'Liberation Sans',sans-serif;color:#000;white-space:pre;transform:scaleX(0.873);transform-origin:0 0;">RGB</span>
<div style="position:absolute;left:1823px;top:212.9px;width:11px;height:11px;background:#fff;box-sizing:border-box;border-radius:50%;border:1.3px solid #5a5a5a;border-right-color:#f6f6f6;border-bottom-color:#f6f6f6;box-shadow:inset .8px .8px 0 #9a9a9a;"></div>
<span style="position:absolute;left:1841.50px;top:211.90px;font:400 12.4px/16px 'Liberation Sans',sans-serif;color:#000;white-space:pre;transform:scaleX(0.91);transform-origin:0 0;">XYZ</span>
<div style="position:absolute;left:1823px;top:228.6px;width:11px;height:11px;background:#fff;box-sizing:border-box;border-radius:50%;border:1.3px solid #5a5a5a;border-right-color:#f6f6f6;border-bottom-color:#f6f6f6;box-shadow:inset .8px .8px 0 #9a9a9a;"></div>
<span style="position:absolute;left:1841.50px;top:227.60px;font:400 12.4px/16px 'Liberation Sans',sans-serif;color:#000;white-space:pre;transform:scaleX(1.04);transform-origin:0 0;">xyz</span>
<div style="position:absolute;left:1823px;top:244.3px;width:11px;height:11px;background:#fff;box-sizing:border-box;border-radius:50%;border:1.3px solid #5a5a5a;border-right-color:#f6f6f6;border-bottom-color:#f6f6f6;box-shadow:inset .8px .8px 0 #9a9a9a;"><div style="position:absolute;left:2.5px;top:2.5px;width:4px;height:4px;border-radius:50%;background:#000"></div></div>
<span style="position:absolute;left:1841.50px;top:243.30px;font:400 12.4px/16px 'Liberation Sans',sans-serif;color:#000;white-space:pre;transform:scaleX(0.936);transform-origin:0 0;">xyY</span>
<div style="position:absolute;left:1812.5px;top:264.5px;width:82px;height:29px;background:#ececec;box-sizing:border-box;border:1px solid #fff;border-right-color:#8a8a8a;border-bottom-color:#8a8a8a;"></div>
<span style="position:absolute;left:1863.00px;top:271.10px;font:400 13px/17px 'Liberation Sans',sans-serif;color:#000;white-space:pre;letter-spacing:-1.343px;">Go</span>
<div style="position:absolute;left:1812.5px;top:294.5px;width:82px;height:29px;background:#ececec;box-sizing:border-box;border:1px solid #fff;border-right-color:#8a8a8a;border-bottom-color:#8a8a8a;"></div>
<span style="position:absolute;left:1851.00px;top:301.10px;font:400 13px/17px 'Liberation Sans',sans-serif;color:#000;white-space:pre;letter-spacing:0.624px;">Delete</span>
<div style="position:absolute;left:1812.5px;top:324.5px;width:82px;height:29px;background:#ececec;box-sizing:border-box;border:1px solid #fff;border-right-color:#8a8a8a;border-bottom-color:#8a8a8a;"></div>
<span style="position:absolute;left:1858.00px;top:331.10px;font:400 13px/17px 'Liberation Sans',sans-serif;color:#000;white-space:pre;letter-spacing:-0.110px;">Refs</span>
<svg style="position:absolute;left:1818px;top:266.500px" width="33" height="27" viewBox="0 0 33 27"><path d="M1.500 1.500h9v5h-3v3h3v4h-4v3h4v6.500h-9z" fill="#b9b9b9" stroke="#6e6e6e" stroke-width=".6"/><path d="M23 5.500h8v19h-8v-5h3v-3.500h-3v-3h3.500v-3.500h-3.500z" fill="#b9b9b9" stroke="#6e6e6e" stroke-width=".6"/><path d="M1.200 1v24M31.500 5v20" stroke="#111" stroke-width="1.600" stroke-dasharray="1.500 1"/><path d="M7.500 .5l13.500 .3 1.500 9.500 8.500 9-8 7-10-1.500-4-7z" fill="#1a1020"/><path d="M8.500 1l11.500.2 .8 3.800-8.800 2.500z" fill="#e60a0a"/><path d="M11.500 8.500l9.300-2.800 1 8-9.300 4.700z" fill="#12b050"/><path d="M13.500 20l8-5 7 5.500-6 5-6.500-1z" fill="#3f8cf4"/><path d="M16 20.500l5.500-3.200 4.300 3.500-3.800 3z" fill="#8cc4ff"/></svg>
<svg style="position:absolute;left:1818.500px;top:295.500px" width="30" height="27" viewBox="0 0 30 27"><defs><linearGradient id="gBin" x1="0" y1="0" x2="1" y2="1"><stop offset="0" stop-color="#7ab4ee"/><stop offset=".45" stop-color="#d4e9fd"/><stop offset="1" stop-color="#8ec4f6"/></linearGradient></defs><path d="M1 5.500c8-3.500 19-5 28-4.500l-4.500 21c-5 3.500-14 4.500-19 3.500z" fill="url(#gBin)" stroke="#8cbcec" stroke-width=".6"/><ellipse cx="13" cy="21.500" rx="8.500" ry="3.300" fill="#eaf5ff" opacity=".75" transform="rotate(-8 13 21.500)"/><path d="M14.500 11.500a5 5 0 0 1 8-1.500l1.600-1.300 .3 5.300-5-.6 1.500-1.400a2.800 2.800 0 0 0-4 .7zM22.800 17.500a5 5 0 0 1-8 1.500l-1.600 1.300-.3-5.300 5 .6-1.500 1.400a2.800 2.800 0 0 0 4-.7z" fill="#12a52c"/></svg>
<svg style="position:absolute;left:1817.500px;top:328.500px" width="33" height="23" viewBox="0 0 33 23"><path d="M0 22.500v-9l1.500-.5v-2l1.500-.5v13z" fill="#000080"/><path d="M2.500 22.500v-11l1.500-1v12z" fill="#e000e0"/><path d="M4 22.500v-14l1-2.500 1-2.500 1.500 3v16z" fill="#0000ff"/><path d="M7.500 22.500v-14l1.500-1.500 1.500 2.500v13z" fill="#00f0f0"/><path d="M10.500 22.500v-12l1.500.5 2-1.500v13z" fill="#00f000"/><path d="M14 22.500v-13l1.500-5 2-3.500 2 1.500 1 2.500v17.500z" fill="#ffff00"/><path d="M20.500 22.500v-18l1.500 1.500 1.500 5.500 1 1v10z" fill="#800000"/><path d="M24.500 22.500v-10.500l1 1 1.500-.5 1.500-3 1.500.5 1 1.500 1.500.5v10.500z" fill="#ff0000"/><path d="M0 13.500l1.500-.5v-2l1.500-.5 1-2 1-2.500 1-2.500 1.500 3v2l1.500-1.500 1.500 2.500v1.500l1.500.5 2-1.500 1.500-5 2-3.500 2 1.500" stroke="#ffff00" stroke-width=".8" fill="none"/></svg>
<div style="position:absolute;left:1818px;top:358px;width:56px;height:18px;background:#f0f0f0;"></div>
<div style="position:absolute;left:1819px;top:360px;width:12px;height:12px;background:#fff;box-sizing:border-box;border:1px solid #5a5a5a;box-shadow:inset 1px 1px 0 #8a8a8a;"></div>
<span style="position:absolute;left:1837.00px;top:357.60px;font:400 13px/17px 'Liberation Sans',sans-serif;color:#000;white-space:pre;letter-spacing:0.533px;">Edit</span>
<div style="position:absolute;left:2px;top:159px;width:1809px;height:223px;background:#f0f0f0;"></div><div style="position:absolute;left:5px;top:162px;width:7px;height:7px;background:#808080;"></div><div style="position:absolute;left:1801px;top:162px;width:7px;height:7px;background:#808080;"></div><div style="position:absolute;left:5px;top:162px;width:1803px;height:217px;background:#ececec;border:1px solid #6f6f6f;box-sizing:border-box;border-radius:7px 7px 0 0;box-shadow:inset 1px 1px 0 #b8b8b8, inset -1px -1px 0 #b8b8b8;"></div><div style="position:absolute;left:7px;top:164px;width:1799px;height:16px;background:linear-gradient(90deg,#e6ecf7 0%,#eef2fa 60%,#e9eef8 100%);border-radius:5px 5px 0 0;"></div><div style="position:absolute;left:7px;top:180px;width:1799px;height:1px;background:#a9a9a9;"></div>
<div style="position:absolute;left:7px;top:163.5px;width:1800px;height:214px;box-sizing:border-box;border:1.4px solid #0cd40c;border-radius:6px 6px 0 0;"></div>
<div style="position:absolute;left:9px;top:163px;width:1781px;height:16px;background:linear-gradient(90deg,#e6ecf7 0%,#eef2fa 60%,#e9eef8 100%);border-radius:5px 0 0 0;"></div>
<div style="position:absolute;left:1790px;top:163px;width:11px;height:16px;background:#eaeff9;"></div>
<div style="position:absolute;left:1790px;top:165.5px;width:16px;height:12.5px;background:#eaeff9;"></div>
<div style="position:absolute;left:1789px;top:178px;width:18px;height:1.6px;background:#0cd40c;"></div>
<div style="position:absolute;left:1789px;top:179.6px;width:17px;height:195.5px;background:#f6f6f6;"></div>
<div style="position:absolute;left:9px;top:178.5px;width:8px;height:197px;background:#f0f0f0;"></div>
<span style="position:absolute;left:11.50px;top:165.91px;font:700 9.5px/12px 'Liberation Sans',sans-serif;color:#3f3a3a;white-space:pre;letter-spacing:0.161px;transform:scaleX(1.1);transform-origin:0 0;text-shadow:.3px 0 0 #3f3a3a;">Pantone skin tones ( Average dE: 0.92 [0.44,0.32,0.59] max: 2.06 [CIE2000] )</span>
<div style="position:absolute;left:10px;top:178px;width:1769px;height:177px;background:#f0f0f0;overflow:hidden;"></div>
<div style="position:absolute;left:1768px;top:179px;width:11px;height:176px;background:#f0f0f0;"></div>
<div style="position:absolute;left:10px;top:178px;width:86px;height:23px;background:#f0f0f0;box-sizing:border-box;border:1px solid #fff;border-right:1px solid #696969;border-bottom:1px solid #696969;box-shadow:inset -1px -1px 0 #a0a0a0;"></div>
<span style="position:absolute;left:14.00px;top:182.67px;font:700 12.5px/16px 'Liberation Sans',sans-serif;color:#000;white-space:pre;letter-spacing:-0.620px;">Color Checker</span>
<div style="position:absolute;left:96px;top:178px;width:65px;height:23px;background:#FFDFC4;box-sizing:border-box;border:1px solid #fff;border-right-color:#696969;border-bottom-color:#696969;overflow:hidden;"><div style="position:absolute;left:3px;top:0;width:56px;height:22px;overflow:hidden"><span style="position:absolute;left:50%;top:0;transform:translateX(-50%);font:700 12px/22px 'Liberation Sans',sans-serif;color:#000;white-space:pre;letter-spacing:-0.312px">Skin#FFDFC4</span></div></div>
<div style="position:absolute;left:161px;top:178px;width:57px;height:23px;background:#F0D5BE;box-sizing:border-box;border:1px solid #fff;border-right-color:#696969;border-bottom-color:#696969;overflow:hidden;"><div style="position:absolute;left:3px;top:0;width:48px;height:22px;overflow:hidden"><span style="position:absolute;left:50%;top:0;transform:translateX(-50%);font:700 12px/22px 'Liberation Sans',sans-serif;color:#000;white-space:pre;letter-spacing:-0.312px">Skin#F0D5BE</span></div></div>
<div style="position:absolute;left:218px;top:178px;width:65px;height:23px;background:#EECEB3;box-sizing:border-box;border:1px solid #fff;border-right-color:#696969;border-bottom-color:#696969;overflow:hidden;"><div style="position:absolute;left:3px;top:0;width:56px;height:22px;overflow:hidden"><span style="position:absolute;left:50%;top:0;transform:translateX(-50%);font:700 12px/22px 'Liberation Sans',sans-serif;color:#000;white-space:pre;letter-spacing:-0.320px">Skin#EECEB3</span></div></div>
<div style="position:absolute;left:283px;top:178px;width:62px;height:23px;background:#E1B899;box-sizing:border-box;border:1px solid #fff;border-right-color:#696969;border-bottom-color:#696969;overflow:hidden;"><div style="position:absolute;left:3px;top:0;width:53px;height:22px;overflow:hidden"><span style="position:absolute;left:50%;top:0;transform:translateX(-50%);font:700 12px/22px 'Liberation Sans',sans-serif;color:#000;white-space:pre;letter-spacing:-0.302px">Skin#E1B899</span></div></div>
<div style="position:absolute;left:345px;top:178px;width:64px;height:23px;background:#E5C298;box-sizing:border-box;border:1px solid #fff;border-right-color:#696969;border-bottom-color:#696969;overflow:hidden;"><div style="position:absolute;left:3px;top:0;width:55px;height:22px;overflow:hidden"><span style="position:absolute;left:50%;top:0;transform:translateX(-50%);font:700 12px/22px 'Liberation Sans',sans-serif;color:#000;white-space:pre;letter-spacing:-0.302px">Skin#E5C298</span></div></div>
<div style="position:absolute;left:409px;top:178px;width:59px;height:23px;background:#FFDCB2;box-sizing:border-box;border:1px solid #fff;border-right-color:#696969;border-bottom-color:#696969;overflow:hidden;"><div style="position:absolute;left:3px;top:0;width:50px;height:22px;overflow:hidden"><span style="position:absolute;left:50%;top:0;transform:translateX(-50%);font:700 12px/22px 'Liberation Sans',sans-serif;color:#000;white-space:pre;letter-spacing:-0.317px">Skin#FFDCB2</span></div></div>
<div style="position:absolute;left:468px;top:178px;width:71px;height:23px;background:#E5B887;box-sizing:border-box;border:1px solid #fff;border-right-color:#696969;border-bottom-color:#696969;overflow:hidden;"><div style="position:absolute;left:3px;top:0;width:62px;height:22px;overflow:hidden"><span style="position:absolute;left:50%;top:0;transform:translateX(-50%);font:700 12px/22px 'Liberation Sans',sans-serif;color:#000;white-space:pre;letter-spacing:-0.302px">Skin#E5B887</span></div></div>
<div style="position:absolute;left:539px;top:178px;width:71px;height:23px;background:#E5A073;box-sizing:border-box;border:1px solid #fff;border-right-color:#696969;border-bottom-color:#696969;overflow:hidden;"><div style="position:absolute;left:3px;top:0;width:62px;height:22px;overflow:hidden"><span style="position:absolute;left:50%;top:0;transform:translateX(-50%);font:700 12px/22px 'Liberation Sans',sans-serif;color:#000;white-space:pre;letter-spacing:-0.302px">Skin#E5A073</span></div></div>
<div style="position:absolute;left:610px;top:178px;width:69px;height:23px;background:#E79E6D;box-sizing:border-box;border:1px solid #fff;border-right-color:#696969;border-bottom-color:#696969;overflow:hidden;"><div style="position:absolute;left:3px;top:0;width:60px;height:22px;overflow:hidden"><span style="position:absolute;left:50%;top:0;transform:translateX(-50%);font:700 12px/22px 'Liberation Sans',sans-serif;color:#000;white-space:pre;letter-spacing:-0.307px">Skin#E79E6D</span></div></div>
<div style="position:absolute;left:679px;top:178px;width:68px;height:23px;background:#DB9065;box-sizing:border-box;border:1px solid #fff;border-right-color:#696969;border-bottom-color:#696969;overflow:hidden;"><div style="position:absolute;left:3px;top:0;width:59px;height:22px;overflow:hidden"><span style="position:absolute;left:50%;top:0;transform:translateX(-50%);font:700 12px/22px 'Liberation Sans',sans-serif;color:#fff;white-space:pre;letter-spacing:-0.304px">Skin#DB9065</span></div></div>
<div style="position:absolute;left:747px;top:178px;width:80px;height:23px;background:#CE967C;box-sizing:border-box;border:1px solid #fff;border-right-color:#696969;border-bottom-color:#696969;overflow:hidden;"><div style="position:absolute;left:3px;top:0;width:71px;height:22px;overflow:hidden"><span style="position:absolute;left:50%;top:0;transform:translateX(-50%);font:700 12px/22px 'Liberation Sans',sans-serif;color:#fff;white-space:pre;letter-spacing:-0.309px">Skin#CE967C</span></div></div>
<div style="position:absolute;left:827px;top:178px;width:80px;height:23px;background:#C67856;box-sizing:border-box;border:1px solid #fff;border-right-color:#696969;border-bottom-color:#696969;overflow:hidden;"><div style="position:absolute;left:3px;top:0;width:71px;height:22px;overflow:hidden"><span style="position:absolute;left:50%;top:0;transform:translateX(-50%);font:700 12px/22px 'Liberation Sans',sans-serif;color:#fff;white-space:pre;letter-spacing:-0.296px">Skin#C67856</span></div></div>
<div style="position:absolute;left:907px;top:178px;width:68px;height:23px;background:#BA6C49;box-sizing:border-box;border:1px solid #fff;border-right-color:#696969;border-bottom-color:#696969;overflow:hidden;"><div style="position:absolute;left:3px;top:0;width:59px;height:22px;overflow:hidden"><span style="position:absolute;left:50%;top:0;transform:translateX(-50%);font:700 12px/22px 'Liberation Sans',sans-serif;color:#fff;white-space:pre;letter-spacing:-0.312px">Skin#BA6C49</span></div></div>
<div style="position:absolute;left:975px;top:178px;width:80px;height:23px;background:#A57257;box-sizing:border-box;border:1px solid #fff;border-right-color:#696969;border-bottom-color:#696969;overflow:hidden;"><div style="position:absolute;left:3px;top:0;width:71px;height:22px;overflow:hidden"><span style="position:absolute;left:50%;top:0;transform:translateX(-50%);font:700 12px/22px 'Liberation Sans',sans-serif;color:#fff;white-space:pre;letter-spacing:-0.296px">Skin#A57257</span></div></div>
<div style="position:absolute;left:1055px;top:178px;width:90px;height:23px;background:#F0C8C9;box-sizing:border-box;border:1px solid #fff;border-right-color:#696969;border-bottom-color:#696969;overflow:hidden;"><div style="position:absolute;left:3px;top:0;width:81px;height:22px;overflow:hidden"><span style="position:absolute;left:50%;top:0;transform:translateX(-50%);font:700 12px/22px 'Liberation Sans',sans-serif;color:#000;white-space:pre;letter-spacing:-0.307px">Skin#F0C8C9</span></div></div>
<div style="position:absolute;left:1145px;top:178px;width:65px;height:23px;background:#DDA8A0;box-sizing:border-box;border:1px solid #fff;border-right-color:#696969;border-bottom-color:#696969;overflow:hidden;"><div style="position:absolute;left:3px;top:0;width:56px;height:22px;overflow:hidden"><span style="position:absolute;left:50%;top:0;transform:translateX(-50%);font:700 12px/22px 'Liberation Sans',sans-serif;color:#000;white-space:pre;letter-spacing:-0.320px">Skin#DDA8A0</span></div></div>
<div style="position:absolute;left:1210px;top:178px;width:80px;height:23px;background:#B97C6D;box-sizing:border-box;border:1px solid #fff;border-right-color:#696969;border-bottom-color:#696969;overflow:hidden;"><div style="position:absolute;left:3px;top:0;width:71px;height:22px;overflow:hidden"><span style="position:absolute;left:50%;top:0;transform:translateX(-50%);font:700 12px/22px 'Liberation Sans',sans-serif;color:#fff;white-space:pre;letter-spacing:-0.312px">Skin#B97C6D</span></div></div>
<div style="position:absolute;left:1290px;top:178px;width:92px;height:23px;background:#A87563;box-sizing:border-box;border:1px solid #fff;border-right-color:#696969;border-bottom-color:#696969;overflow:hidden;"><div style="position:absolute;left:3px;top:0;width:83px;height:22px;overflow:hidden"><span style="position:absolute;left:50%;top:0;transform:translateX(-50%);font:700 12px/22px 'Liberation Sans',sans-serif;color:#fff;white-space:pre;letter-spacing:-0.296px">Skin#A87563</span></div></div>
<div style="position:absolute;left:1382px;top:178px;width:64px;height:23px;background:#AD6452;box-sizing:border-box;border:1px solid #fff;border-right-color:#696969;border-bottom-color:#696969;overflow:hidden;"><div style="position:absolute;left:3px;top:0;width:55px;height:22px;overflow:hidden"><span style="position:absolute;left:50%;top:0;transform:translateX(-50%);font:700 12px/22px 'Liberation Sans',sans-serif;color:#fff;white-space:pre;letter-spacing:-0.304px">Skin#AD6452</span></div></div>
<div style="position:absolute;left:1446px;top:178px;width:67px;height:23px;background:#5C3836;box-sizing:border-box;border:1px solid #fff;border-right-color:#696969;border-bottom-color:#696969;overflow:hidden;"><div style="position:absolute;left:3px;top:0;width:58px;height:22px;overflow:hidden"><span style="position:absolute;left:50%;top:0;transform:translateX(-50%);font:700 12px/22px 'Liberation Sans',sans-serif;color:#fff;white-space:pre;letter-spacing:-0.296px">Skin#5C3836</span></div></div>
<div style="position:absolute;left:1513px;top:178px;width:61px;height:23px;background:#CB8442;box-sizing:border-box;border:1px solid #fff;border-right-color:#696969;border-bottom-color:#696969;overflow:hidden;"><div style="position:absolute;left:3px;top:0;width:52px;height:22px;overflow:hidden"><span style="position:absolute;left:50%;top:0;transform:translateX(-50%);font:700 12px/22px 'Liberation Sans',sans-serif;color:#fff;white-space:pre;letter-spacing:-0.304px">Skin#CB8442</span></div></div>
<div style="position:absolute;left:1574px;top:178px;width:63px;height:23px;background:#BD723C;box-sizing:border-box;border:1px solid #fff;border-right-color:#696969;border-bottom-color:#696969;overflow:hidden;"><div style="position:absolute;left:3px;top:0;width:54px;height:22px;overflow:hidden"><span style="position:absolute;left:50%;top:0;transform:translateX(-50%);font:700 12px/22px 'Liberation Sans',sans-serif;color:#fff;white-space:pre;letter-spacing:-0.312px">Skin#BD723C</span></div></div>
<div style="position:absolute;left:1637px;top:178px;width:65px;height:23px;background:#704139;box-sizing:border-box;border:1px solid #fff;border-right-color:#696969;border-bottom-color:#696969;overflow:hidden;"><div style="position:absolute;left:3px;top:0;width:56px;height:22px;overflow:hidden"><span style="position:absolute;left:50%;top:0;transform:translateX(-50%);font:700 12px/22px 'Liberation Sans',sans-serif;color:#fff;white-space:pre;letter-spacing:-0.288px">Skin#704139</span></div></div>
<div style="position:absolute;left:1702px;top:178px;width:65px;height:23px;background:#A3866A;box-sizing:border-box;border:1px solid #fff;border-right-color:#696969;border-bottom-color:#696969;overflow:hidden;"><div style="position:absolute;left:3px;top:0;width:56px;height:22px;overflow:hidden"><span style="position:absolute;left:50%;top:0;transform:translateX(-50%);font:700 12px/22px 'Liberation Sans',sans-serif;color:#fff;white-space:pre;letter-spacing:-0.304px">Skin#A3866A</span></div></div>
<div style="position:absolute;left:10px;top:201px;width:86px;height:24px;background:#f0f0f0;box-sizing:border-box;border-top:1px solid #fafafa;border-right:1px solid #5c5c5c;border-bottom:1.5px solid #5c5c5c;"></div>
<span style="position:absolute;left:49.52px;top:205.87px;font:700 12.5px/16px 'Liberation Sans',sans-serif;color:#000;white-space:pre;">x</span>
<div style="position:absolute;left:96px;top:201px;width:1671px;height:24px;background:#fff;"></div>
<span style="position:absolute;left:126.73px;top:206.14px;font:400 12px/16px 'Liberation Sans',sans-serif;color:#000;white-space:pre;letter-spacing:-0.807px;">0.3551</span>
<span style="position:absolute;left:184.53px;top:206.14px;font:400 12px/16px 'Liberation Sans',sans-serif;color:#000;white-space:pre;letter-spacing:-0.788px;">0.3511</span>
<span style="position:absolute;left:248.73px;top:206.14px;font:400 12px/16px 'Liberation Sans',sans-serif;color:#000;white-space:pre;letter-spacing:-0.807px;">0.3582</span>
<span style="position:absolute;left:310.73px;top:206.14px;font:400 12px/16px 'Liberation Sans',sans-serif;color:#000;white-space:pre;letter-spacing:-0.807px;">0.3774</span>
<span style="position:absolute;left:374.73px;top:206.14px;font:400 12px/16px 'Liberation Sans',sans-serif;color:#000;white-space:pre;letter-spacing:-0.807px;">0.3776</span>
<div style="position:absolute;left:409px;top:201px;width:58px;height:23px;background:#0078d7;"></div>
<span style="position:absolute;left:433.73px;top:206.14px;font:400 12px/16px 'Liberation Sans',sans-serif;color:#fff;white-space:pre;letter-spacing:-0.807px;">0.3693</span>
<span style="position:absolute;left:504.73px;top:206.14px;font:400 12px/16px 'Liberation Sans',sans-serif;color:#000;white-space:pre;letter-spacing:-0.807px;">0.3908</span>
<span style="position:absolute;left:575.73px;top:206.14px;font:400 12px/16px 'Liberation Sans',sans-serif;color:#000;white-space:pre;letter-spacing:-0.807px;">0.4279</span>
<span style="position:absolute;left:644.73px;top:206.14px;font:400 12px/16px 'Liberation Sans',sans-serif;color:#000;white-space:pre;letter-spacing:-0.807px;">0.4391</span>
<span style="position:absolute;left:712.73px;top:206.14px;font:400 12px/16px 'Liberation Sans',sans-serif;color:#000;white-space:pre;letter-spacing:-0.807px;">0.4437</span>
<span style="position:absolute;left:792.73px;top:206.14px;font:400 12px/16px 'Liberation Sans',sans-serif;color:#000;white-space:pre;letter-spacing:-0.807px;">0.4034</span>
<span style="position:absolute;left:872.73px;top:206.14px;font:400 12px/16px 'Liberation Sans',sans-serif;color:#000;white-space:pre;letter-spacing:-0.807px;">0.4643</span>
<span style="position:absolute;left:940.73px;top:206.14px;font:400 12px/16px 'Liberation Sans',sans-serif;color:#000;white-space:pre;letter-spacing:-0.807px;">0.4774</span>
<span style="position:absolute;left:1020.73px;top:206.14px;font:400 12px/16px 'Liberation Sans',sans-serif;color:#000;white-space:pre;letter-spacing:-0.807px;">0.4266</span>
<span style="position:absolute;left:1110.73px;top:206.14px;font:400 12px/16px 'Liberation Sans',sans-serif;color:#000;white-space:pre;letter-spacing:-0.807px;">0.3438</span>
<span style="position:absolute;left:1175.73px;top:206.14px;font:400 12px/16px 'Liberation Sans',sans-serif;color:#000;white-space:pre;letter-spacing:-0.807px;">0.3765</span>
<span style="position:absolute;left:1255.73px;top:206.14px;font:400 12px/16px 'Liberation Sans',sans-serif;color:#000;white-space:pre;letter-spacing:-0.807px;">0.4145</span>
<span style="position:absolute;left:1347.73px;top:206.14px;font:400 12px/16px 'Liberation Sans',sans-serif;color:#000;white-space:pre;letter-spacing:-0.807px;">0.3961</span>
<span style="position:absolute;left:1411.73px;top:206.14px;font:400 12px/16px 'Liberation Sans',sans-serif;color:#000;white-space:pre;letter-spacing:-0.807px;">0.4617</span>
<span style="position:absolute;left:1478.73px;top:206.14px;font:400 12px/16px 'Liberation Sans',sans-serif;color:#000;white-space:pre;letter-spacing:-0.807px;">0.4179</span>
<span style="position:absolute;left:1539.73px;top:206.14px;font:400 12px/16px 'Liberation Sans',sans-serif;color:#000;white-space:pre;letter-spacing:-0.807px;">0.4733</span>
<span style="position:absolute;left:1602.73px;top:206.14px;font:400 12px/16px 'Liberation Sans',sans-serif;color:#000;white-space:pre;letter-spacing:-0.807px;">0.4849</span>
<span style="position:absolute;left:1667.73px;top:206.14px;font:400 12px/16px 'Liberation Sans',sans-serif;color:#000;white-space:pre;letter-spacing:-0.807px;">0.4389</span>
<span style="position:absolute;left:1732.73px;top:206.14px;font:400 12px/16px 'Liberation Sans',sans-serif;color:#000;white-space:pre;letter-spacing:-0.807px;">0.3828</span>
<div style="position:absolute;left:96px;top:224px;width:1671px;height:1px;background:#a8a8a8;"></div>
<div style="position:absolute;left:10px;top:225px;width:86px;height:25px;background:#f0f0f0;box-sizing:border-box;border-top:1px solid #fafafa;border-right:1px solid #5c5c5c;border-bottom:1.5px solid #5c5c5c;"></div>
<span style="position:absolute;left:49.52px;top:230.37px;font:700 12.5px/16px 'Liberation Sans',sans-serif;color:#000;white-space:pre;">y</span>
<div style="position:absolute;left:96px;top:225px;width:1671px;height:25px;background:#fff;"></div>
<span style="position:absolute;left:126.73px;top:230.64px;font:400 12px/16px 'Liberation Sans',sans-serif;color:#000;white-space:pre;letter-spacing:-0.807px;">0.3581</span>
<span style="position:absolute;left:183.73px;top:230.64px;font:400 12px/16px 'Liberation Sans',sans-serif;color:#000;white-space:pre;letter-spacing:-0.807px;">0.3572</span>
<span style="position:absolute;left:248.73px;top:230.64px;font:400 12px/16px 'Liberation Sans',sans-serif;color:#000;white-space:pre;letter-spacing:-0.807px;">0.3606</span>
<span style="position:absolute;left:310.73px;top:230.64px;font:400 12px/16px 'Liberation Sans',sans-serif;color:#000;white-space:pre;letter-spacing:-0.807px;">0.3688</span>
<span style="position:absolute;left:374.73px;top:230.64px;font:400 12px/16px 'Liberation Sans',sans-serif;color:#000;white-space:pre;letter-spacing:-0.807px;">0.3805</span>
<div style="position:absolute;left:409px;top:225px;width:58px;height:24px;background:#0078d7;"></div>
<span style="position:absolute;left:433.73px;top:230.64px;font:400 12px/16px 'Liberation Sans',sans-serif;color:#fff;white-space:pre;letter-spacing:-0.807px;">0.3741</span>
<span style="position:absolute;left:504.73px;top:230.64px;font:400 12px/16px 'Liberation Sans',sans-serif;color:#000;white-space:pre;letter-spacing:-0.807px;">0.3771</span>
<span style="position:absolute;left:575.73px;top:230.64px;font:400 12px/16px 'Liberation Sans',sans-serif;color:#000;white-space:pre;letter-spacing:-0.807px;">0.3805</span>
<span style="position:absolute;left:644.73px;top:230.64px;font:400 12px/16px 'Liberation Sans',sans-serif;color:#000;white-space:pre;letter-spacing:-0.807px;">0.3856</span>
<span style="position:absolute;left:712.73px;top:230.64px;font:400 12px/16px 'Liberation Sans',sans-serif;color:#000;white-space:pre;letter-spacing:-0.807px;">0.3813</span>
<span style="position:absolute;left:792.73px;top:230.64px;font:400 12px/16px 'Liberation Sans',sans-serif;color:#000;white-space:pre;letter-spacing:-0.807px;">0.3636</span>
<span style="position:absolute;left:872.73px;top:230.64px;font:400 12px/16px 'Liberation Sans',sans-serif;color:#000;white-space:pre;letter-spacing:-0.807px;">0.3736</span>
<span style="position:absolute;left:940.73px;top:230.64px;font:400 12px/16px 'Liberation Sans',sans-serif;color:#000;white-space:pre;letter-spacing:-0.807px;">0.3766</span>
<span style="position:absolute;left:1020.73px;top:230.64px;font:400 12px/16px 'Liberation Sans',sans-serif;color:#000;white-space:pre;letter-spacing:-0.807px;">0.3721</span>
<span style="position:absolute;left:1110.73px;top:230.64px;font:400 12px/16px 'Liberation Sans',sans-serif;color:#000;white-space:pre;letter-spacing:-0.807px;">0.3279</span>
<span style="position:absolute;left:1175.73px;top:230.64px;font:400 12px/16px 'Liberation Sans',sans-serif;color:#000;white-space:pre;letter-spacing:-0.807px;">0.3400</span>
<span style="position:absolute;left:1255.73px;top:230.64px;font:400 12px/16px 'Liberation Sans',sans-serif;color:#000;white-space:pre;letter-spacing:-0.807px;">0.3455</span>
<span style="position:absolute;left:1347.73px;top:230.64px;font:400 12px/16px 'Liberation Sans',sans-serif;color:#000;white-space:pre;letter-spacing:-0.807px;">0.3378</span>
<span style="position:absolute;left:1411.73px;top:230.64px;font:400 12px/16px 'Liberation Sans',sans-serif;color:#000;white-space:pre;letter-spacing:-0.807px;">0.3570</span>
<span style="position:absolute;left:1478.73px;top:230.64px;font:400 12px/16px 'Liberation Sans',sans-serif;color:#000;white-space:pre;letter-spacing:-0.807px;">0.3306</span>
<span style="position:absolute;left:1539.73px;top:230.64px;font:400 12px/16px 'Liberation Sans',sans-serif;color:#000;white-space:pre;letter-spacing:-0.807px;">0.4081</span>
<span style="position:absolute;left:1602.73px;top:230.64px;font:400 12px/16px 'Liberation Sans',sans-serif;color:#000;white-space:pre;letter-spacing:-0.807px;">0.3959</span>
<span style="position:absolute;left:1667.73px;top:230.64px;font:400 12px/16px 'Liberation Sans',sans-serif;color:#000;white-space:pre;letter-spacing:-0.807px;">0.3393</span>
<span style="position:absolute;left:1732.73px;top:230.64px;font:400 12px/16px 'Liberation Sans',sans-serif;color:#000;white-space:pre;letter-spacing:-0.807px;">0.3769</span>
<div style="position:absolute;left:96px;top:249px;width:1671px;height:1px;background:#a8a8a8;"></div>
<div style="position:absolute;left:10px;top:250px;width:86px;height:25px;background:#f0f0f0;box-sizing:border-box;border-top:1px solid #fafafa;border-right:1px solid #5c5c5c;border-bottom:1.5px solid #5c5c5c;"></div>
<span style="position:absolute;left:48.83px;top:255.37px;font:700 12.5px/16px 'Liberation Sans',sans-serif;color:#000;white-space:pre;">Y</span>
<div style="position:absolute;left:96px;top:250px;width:1671px;height:25px;background:#fff;"></div>
<span style="position:absolute;left:126.73px;top:255.64px;font:400 12px/16px 'Liberation Sans',sans-serif;color:#000;white-space:pre;letter-spacing:-0.807px;">79.028</span>
<span style="position:absolute;left:183.73px;top:255.64px;font:400 12px/16px 'Liberation Sans',sans-serif;color:#000;white-space:pre;letter-spacing:-0.807px;">70.109</span>
<span style="position:absolute;left:248.73px;top:255.64px;font:400 12px/16px 'Liberation Sans',sans-serif;color:#000;white-space:pre;letter-spacing:-0.807px;">65.946</span>
<span style="position:absolute;left:311.53px;top:255.64px;font:400 12px/16px 'Liberation Sans',sans-serif;color:#000;white-space:pre;letter-spacing:-0.788px;">51.311</span>
<span style="position:absolute;left:374.73px;top:255.64px;font:400 12px/16px 'Liberation Sans',sans-serif;color:#000;white-space:pre;letter-spacing:-0.807px;">57.610</span>
<div style="position:absolute;left:409px;top:250px;width:58px;height:24px;background:#0078d7;"></div>
<span style="position:absolute;left:433.73px;top:255.64px;font:400 12px/16px 'Liberation Sans',sans-serif;color:#fff;white-space:pre;letter-spacing:-0.807px;">76.372</span>
<span style="position:absolute;left:504.73px;top:255.64px;font:400 12px/16px 'Liberation Sans',sans-serif;color:#000;white-space:pre;letter-spacing:-0.807px;">52.618</span>
<span style="position:absolute;left:575.73px;top:255.64px;font:400 12px/16px 'Liberation Sans',sans-serif;color:#000;white-space:pre;letter-spacing:-0.807px;">41.857</span>
<span style="position:absolute;left:644.73px;top:255.64px;font:400 12px/16px 'Liberation Sans',sans-serif;color:#000;white-space:pre;letter-spacing:-0.807px;">41.582</span>
<span style="position:absolute;left:712.73px;top:255.64px;font:400 12px/16px 'Liberation Sans',sans-serif;color:#000;white-space:pre;letter-spacing:-0.807px;">35.062</span>
<span style="position:absolute;left:792.73px;top:255.64px;font:400 12px/16px 'Liberation Sans',sans-serif;color:#000;white-space:pre;letter-spacing:-0.807px;">35.590</span>
<span style="position:absolute;left:872.73px;top:255.64px;font:400 12px/16px 'Liberation Sans',sans-serif;color:#000;white-space:pre;letter-spacing:-0.807px;">24.356</span>
<span style="position:absolute;left:940.73px;top:255.64px;font:400 12px/16px 'Liberation Sans',sans-serif;color:#000;white-space:pre;letter-spacing:-0.807px;">20.199</span>
<span style="position:absolute;left:1020.73px;top:255.64px;font:400 12px/16px 'Liberation Sans',sans-serif;color:#000;white-space:pre;letter-spacing:-0.807px;">19.142</span>
<span style="position:absolute;left:1110.73px;top:255.64px;font:400 12px/16px 'Liberation Sans',sans-serif;color:#000;white-space:pre;letter-spacing:-0.807px;">64.194</span>
<span style="position:absolute;left:1175.73px;top:255.64px;font:400 12px/16px 'Liberation Sans',sans-serif;color:#000;white-space:pre;letter-spacing:-0.807px;">44.574</span>
<span style="position:absolute;left:1255.73px;top:255.64px;font:400 12px/16px 'Liberation Sans',sans-serif;color:#000;white-space:pre;letter-spacing:-0.807px;">23.745</span>
<span style="position:absolute;left:1347.73px;top:255.64px;font:400 12px/16px 'Liberation Sans',sans-serif;color:#000;white-space:pre;letter-spacing:-0.807px;">20.154</span>
<span style="position:absolute;left:1411.73px;top:255.64px;font:400 12px/16px 'Liberation Sans',sans-serif;color:#000;white-space:pre;letter-spacing:-0.807px;">16.829</span>
<span style="position:absolute;left:1484.67px;top:255.64px;font:400 12px/16px 'Liberation Sans',sans-serif;color:#000;white-space:pre;letter-spacing:-0.826px;">3.923</span>
<span style="position:absolute;left:1539.73px;top:255.64px;font:400 12px/16px 'Liberation Sans',sans-serif;color:#000;white-space:pre;letter-spacing:-0.807px;">28.379</span>
<span style="position:absolute;left:1602.73px;top:255.64px;font:400 12px/16px 'Liberation Sans',sans-serif;color:#000;white-space:pre;letter-spacing:-0.807px;">21.423</span>
<span style="position:absolute;left:1673.67px;top:255.64px;font:400 12px/16px 'Liberation Sans',sans-serif;color:#000;white-space:pre;letter-spacing:-0.826px;">6.124</span>
<span style="position:absolute;left:1732.73px;top:255.64px;font:400 12px/16px 'Liberation Sans',sans-serif;color:#000;white-space:pre;letter-spacing:-0.807px;">24.651</span>
<div style="position:absolute;left:96px;top:274px;width:1671px;height:1px;background:#a8a8a8;"></div>
<div style="position:absolute;left:10px;top:275px;width:86px;height:25px;background:#f0f0f0;box-sizing:border-box;border-top:1px solid #fafafa;border-right:1px solid #5c5c5c;border-bottom:1.5px solid #5c5c5c;"></div>
<span style="position:absolute;left:32.45px;top:280.37px;font:700 12.5px/16px 'Liberation Sans',sans-serif;color:#000;white-space:pre;letter-spacing:-0.212px;">Delta E</span>
<div style="position:absolute;left:96px;top:275px;width:1671px;height:25px;background:#b0ffb0;"></div>
<span style="position:absolute;left:142.59px;top:279.80px;font:700 13px/17px 'Liberation Sans',sans-serif;color:#000;white-space:pre;letter-spacing:-0.633px;">0.7</span>
<span style="position:absolute;left:199.59px;top:279.80px;font:700 13px/17px 'Liberation Sans',sans-serif;color:#000;white-space:pre;letter-spacing:-0.633px;">1.3</span>
<span style="position:absolute;left:264.59px;top:279.80px;font:700 13px/17px 'Liberation Sans',sans-serif;color:#000;white-space:pre;letter-spacing:-0.633px;">1.1</span>
<span style="position:absolute;left:326.59px;top:279.80px;font:700 13px/17px 'Liberation Sans',sans-serif;color:#000;white-space:pre;letter-spacing:-0.633px;">0.8</span>
<span style="position:absolute;left:390.59px;top:279.80px;font:700 13px/17px 'Liberation Sans',sans-serif;color:#000;white-space:pre;letter-spacing:-0.633px;">1.0</span>
<span style="position:absolute;left:449.59px;top:279.80px;font:700 13px/17px 'Liberation Sans',sans-serif;color:#000;white-space:pre;letter-spacing:-0.633px;">0.8</span>
<span style="position:absolute;left:520.59px;top:279.80px;font:700 13px/17px 'Liberation Sans',sans-serif;color:#000;white-space:pre;letter-spacing:-0.633px;">0.6</span>
<span style="position:absolute;left:591.59px;top:279.80px;font:700 13px/17px 'Liberation Sans',sans-serif;color:#000;white-space:pre;letter-spacing:-0.633px;">0.8</span>
<span style="position:absolute;left:660.59px;top:279.80px;font:700 13px/17px 'Liberation Sans',sans-serif;color:#000;white-space:pre;letter-spacing:-0.633px;">0.6</span>
<span style="position:absolute;left:728.59px;top:279.80px;font:700 13px/17px 'Liberation Sans',sans-serif;color:#000;white-space:pre;letter-spacing:-0.633px;">0.8</span>
<span style="position:absolute;left:808.59px;top:279.80px;font:700 13px/17px 'Liberation Sans',sans-serif;color:#000;white-space:pre;letter-spacing:-0.633px;">0.9</span>
<span style="position:absolute;left:888.59px;top:279.80px;font:700 13px/17px 'Liberation Sans',sans-serif;color:#000;white-space:pre;letter-spacing:-0.633px;">0.5</span>
<span style="position:absolute;left:956.59px;top:279.80px;font:700 13px/17px 'Liberation Sans',sans-serif;color:#000;white-space:pre;letter-spacing:-0.633px;">0.7</span>
<span style="position:absolute;left:1036.59px;top:279.80px;font:700 13px/17px 'Liberation Sans',sans-serif;color:#000;white-space:pre;letter-spacing:-0.633px;">0.8</span>
<span style="position:absolute;left:1126.59px;top:279.80px;font:700 13px/17px 'Liberation Sans',sans-serif;color:#000;white-space:pre;letter-spacing:-0.633px;">0.6</span>
<span style="position:absolute;left:1191.59px;top:279.80px;font:700 13px/17px 'Liberation Sans',sans-serif;color:#000;white-space:pre;letter-spacing:-0.633px;">0.4</span>
<span style="position:absolute;left:1271.59px;top:279.80px;font:700 13px/17px 'Liberation Sans',sans-serif;color:#000;white-space:pre;letter-spacing:-0.633px;">1.5</span>
<span style="position:absolute;left:1363.59px;top:279.80px;font:700 13px/17px 'Liberation Sans',sans-serif;color:#000;white-space:pre;letter-spacing:-0.633px;">1.4</span>
<span style="position:absolute;left:1427.59px;top:279.80px;font:700 13px/17px 'Liberation Sans',sans-serif;color:#000;white-space:pre;letter-spacing:-0.633px;">0.4</span>
<span style="position:absolute;left:1494.59px;top:279.80px;font:700 13px/17px 'Liberation Sans',sans-serif;color:#000;white-space:pre;letter-spacing:-0.633px;">1.1</span>
<span style="position:absolute;left:1555.59px;top:279.80px;font:700 13px/17px 'Liberation Sans',sans-serif;color:#000;white-space:pre;letter-spacing:-0.633px;">1.0</span>
<span style="position:absolute;left:1618.59px;top:279.80px;font:700 13px/17px 'Liberation Sans',sans-serif;color:#000;white-space:pre;letter-spacing:-0.633px;">1.0</span>
<div style="position:absolute;left:1637px;top:275px;width:64px;height:24px;background:#ffffaa;"></div>
<span style="position:absolute;left:1683.59px;top:279.80px;font:700 13px/17px 'Liberation Sans',sans-serif;color:#000;white-space:pre;letter-spacing:-0.633px;">2.1</span>
<span style="position:absolute;left:1748.59px;top:279.80px;font:700 13px/17px 'Liberation Sans',sans-serif;color:#000;white-space:pre;letter-spacing:-0.633px;">1.1</span>
<div style="position:absolute;left:96px;top:299px;width:1671px;height:1px;background:#9ad89a;"></div>
<div style="position:absolute;left:10px;top:300px;width:86px;height:25px;background:#f0f0f0;box-sizing:border-box;border-top:1px solid #fafafa;border-right:1px solid #5c5c5c;border-bottom:1.5px solid #5c5c5c;"></div>
<span style="position:absolute;left:30.42px;top:305.37px;font:700 12.5px/16px 'Liberation Sans',sans-serif;color:#000;white-space:pre;letter-spacing:-0.200px;">delta xy</span>
<div style="position:absolute;left:96px;top:300px;width:1671px;height:25px;background:#f0f0f0;"></div>
<span style="position:absolute;left:126.73px;top:305.64px;font:400 12px/16px 'Liberation Sans',sans-serif;color:#000;white-space:pre;letter-spacing:-0.807px;">0.0026</span>
<span style="position:absolute;left:183.73px;top:305.64px;font:400 12px/16px 'Liberation Sans',sans-serif;color:#000;white-space:pre;letter-spacing:-0.807px;">0.0019</span>
<span style="position:absolute;left:248.73px;top:305.64px;font:400 12px/16px 'Liberation Sans',sans-serif;color:#000;white-space:pre;letter-spacing:-0.807px;">0.0023</span>
<span style="position:absolute;left:310.73px;top:305.64px;font:400 12px/16px 'Liberation Sans',sans-serif;color:#000;white-space:pre;letter-spacing:-0.807px;">0.0023</span>
<span style="position:absolute;left:374.73px;top:305.64px;font:400 12px/16px 'Liberation Sans',sans-serif;color:#000;white-space:pre;letter-spacing:-0.807px;">0.0023</span>
<span style="position:absolute;left:433.73px;top:305.64px;font:400 12px/16px 'Liberation Sans',sans-serif;color:#000;white-space:pre;letter-spacing:-0.807px;">0.0025</span>
<span style="position:absolute;left:504.73px;top:305.64px;font:400 12px/16px 'Liberation Sans',sans-serif;color:#000;white-space:pre;letter-spacing:-0.807px;">0.0026</span>
<span style="position:absolute;left:575.73px;top:305.64px;font:400 12px/16px 'Liberation Sans',sans-serif;color:#000;white-space:pre;letter-spacing:-0.807px;">0.0068</span>
<span style="position:absolute;left:644.73px;top:305.64px;font:400 12px/16px 'Liberation Sans',sans-serif;color:#000;white-space:pre;letter-spacing:-0.807px;">0.0035</span>
<span style="position:absolute;left:712.73px;top:305.64px;font:400 12px/16px 'Liberation Sans',sans-serif;color:#000;white-space:pre;letter-spacing:-0.807px;">0.0064</span>
<span style="position:absolute;left:792.73px;top:305.64px;font:400 12px/16px 'Liberation Sans',sans-serif;color:#000;white-space:pre;letter-spacing:-0.807px;">0.0043</span>
<span style="position:absolute;left:872.73px;top:305.64px;font:400 12px/16px 'Liberation Sans',sans-serif;color:#000;white-space:pre;letter-spacing:-0.807px;">0.0030</span>
<span style="position:absolute;left:940.73px;top:305.64px;font:400 12px/16px 'Liberation Sans',sans-serif;color:#000;white-space:pre;letter-spacing:-0.807px;">0.0050</span>
<span style="position:absolute;left:1020.73px;top:305.64px;font:400 12px/16px 'Liberation Sans',sans-serif;color:#000;white-space:pre;letter-spacing:-0.807px;">0.0035</span>
<span style="position:absolute;left:1110.73px;top:305.64px;font:400 12px/16px 'Liberation Sans',sans-serif;color:#000;white-space:pre;letter-spacing:-0.807px;">0.0017</span>
<span style="position:absolute;left:1175.73px;top:305.64px;font:400 12px/16px 'Liberation Sans',sans-serif;color:#000;white-space:pre;letter-spacing:-0.807px;">0.0009</span>
<span style="position:absolute;left:1255.73px;top:305.64px;font:400 12px/16px 'Liberation Sans',sans-serif;color:#000;white-space:pre;letter-spacing:-0.807px;">0.0057</span>
<span style="position:absolute;left:1347.73px;top:305.64px;font:400 12px/16px 'Liberation Sans',sans-serif;color:#000;white-space:pre;letter-spacing:-0.807px;">0.0064</span>
<span style="position:absolute;left:1411.73px;top:305.64px;font:400 12px/16px 'Liberation Sans',sans-serif;color:#000;white-space:pre;letter-spacing:-0.807px;">0.0024</span>
<span style="position:absolute;left:1480.32px;top:305.64px;font:400 12px/16px 'Liberation Sans',sans-serif;color:#000;white-space:pre;letter-spacing:-0.768px;">0.0111</span>
<span style="position:absolute;left:1539.73px;top:305.64px;font:400 12px/16px 'Liberation Sans',sans-serif;color:#000;white-space:pre;letter-spacing:-0.807px;">0.0067</span>
<span style="position:absolute;left:1602.73px;top:305.64px;font:400 12px/16px 'Liberation Sans',sans-serif;color:#000;white-space:pre;letter-spacing:-0.807px;">0.0079</span>
<span style="position:absolute;left:1667.73px;top:305.64px;font:400 12px/16px 'Liberation Sans',sans-serif;color:#000;white-space:pre;letter-spacing:-0.807px;">0.0161</span>
<span style="position:absolute;left:1732.73px;top:305.64px;font:400 12px/16px 'Liberation Sans',sans-serif;color:#000;white-space:pre;letter-spacing:-0.807px;">0.0025</span>
<div style="position:absolute;left:96px;top:324px;width:1671px;height:1px;background:#a8a8a8;"></div>
<div style="position:absolute;left:10px;top:325px;width:86px;height:25px;background:#f0f0f0;box-sizing:border-box;border-top:1px solid #fafafa;border-right:1px solid #5c5c5c;border-bottom:1.5px solid #5c5c5c;"></div>
<span style="position:absolute;left:33.46px;top:330.37px;font:700 12.5px/16px 'Liberation Sans',sans-serif;color:#000;white-space:pre;letter-spacing:-0.201px;">delta L</span>
<div style="position:absolute;left:96px;top:325px;width:1671px;height:25px;background:#e0e0e0;"></div>
<span style="position:absolute;left:123.21px;top:330.64px;font:400 12px/16px 'Liberation Sans',sans-serif;color:#000;white-space:pre;letter-spacing:-0.302px;">+1.4 %</span>
<span style="position:absolute;left:180.21px;top:330.64px;font:400 12px/16px 'Liberation Sans',sans-serif;color:#000;white-space:pre;letter-spacing:-0.302px;">+1.6 %</span>
<span style="position:absolute;left:245.21px;top:330.64px;font:400 12px/16px 'Liberation Sans',sans-serif;color:#000;white-space:pre;letter-spacing:-0.302px;">+2.2 %</span>
<span style="position:absolute;left:307.21px;top:330.64px;font:400 12px/16px 'Liberation Sans',sans-serif;color:#000;white-space:pre;letter-spacing:-0.302px;">+0.8 %</span>
<span style="position:absolute;left:371.21px;top:330.64px;font:400 12px/16px 'Liberation Sans',sans-serif;color:#000;white-space:pre;letter-spacing:-0.302px;">+2.1 %</span>
<span style="position:absolute;left:430.21px;top:330.64px;font:400 12px/16px 'Liberation Sans',sans-serif;color:#000;white-space:pre;letter-spacing:-0.302px;">+1.6 %</span>
<span style="position:absolute;left:501.21px;top:330.64px;font:400 12px/16px 'Liberation Sans',sans-serif;color:#000;white-space:pre;letter-spacing:-0.302px;">+2.3 %</span>
<span style="position:absolute;left:572.21px;top:330.64px;font:400 12px/16px 'Liberation Sans',sans-serif;color:#000;white-space:pre;letter-spacing:-0.302px;">+1.8 %</span>
<span style="position:absolute;left:641.21px;top:330.64px;font:400 12px/16px 'Liberation Sans',sans-serif;color:#000;white-space:pre;letter-spacing:-0.302px;">+1.9 %</span>
<span style="position:absolute;left:709.21px;top:330.64px;font:400 12px/16px 'Liberation Sans',sans-serif;color:#000;white-space:pre;letter-spacing:-0.302px;">+2.9 %</span>
<span style="position:absolute;left:789.21px;top:330.64px;font:400 12px/16px 'Liberation Sans',sans-serif;color:#000;white-space:pre;letter-spacing:-0.302px;">+3.5 %</span>
<span style="position:absolute;left:869.21px;top:330.64px;font:400 12px/16px 'Liberation Sans',sans-serif;color:#000;white-space:pre;letter-spacing:-0.302px;">+1.4 %</span>
<span style="position:absolute;left:937.21px;top:330.64px;font:400 12px/16px 'Liberation Sans',sans-serif;color:#000;white-space:pre;letter-spacing:-0.302px;">+2.5 %</span>
<span style="position:absolute;left:1017.21px;top:330.64px;font:400 12px/16px 'Liberation Sans',sans-serif;color:#000;white-space:pre;letter-spacing:-0.302px;">+2.8 %</span>
<span style="position:absolute;left:1107.21px;top:330.64px;font:400 12px/16px 'Liberation Sans',sans-serif;color:#000;white-space:pre;letter-spacing:-0.302px;">+1.8 %</span>
<span style="position:absolute;left:1172.21px;top:330.64px;font:400 12px/16px 'Liberation Sans',sans-serif;color:#000;white-space:pre;letter-spacing:-0.302px;">+1.3 %</span>
<span style="position:absolute;left:1252.21px;top:330.64px;font:400 12px/16px 'Liberation Sans',sans-serif;color:#000;white-space:pre;letter-spacing:-0.302px;">+0.8 %</span>
<span style="position:absolute;left:1344.21px;top:330.64px;font:400 12px/16px 'Liberation Sans',sans-serif;color:#000;white-space:pre;letter-spacing:-0.302px;">+2.0 %</span>
<span style="position:absolute;left:1408.21px;top:330.64px;font:400 12px/16px 'Liberation Sans',sans-serif;color:#000;white-space:pre;letter-spacing:-0.302px;">+1.1 %</span>
<span style="position:absolute;left:1475.21px;top:330.64px;font:400 12px/16px 'Liberation Sans',sans-serif;color:#000;white-space:pre;letter-spacing:-0.302px;">+0.2 %</span>
<span style="position:absolute;left:1536.21px;top:330.64px;font:400 12px/16px 'Liberation Sans',sans-serif;color:#000;white-space:pre;letter-spacing:-0.302px;">+3.7 %</span>
<span style="position:absolute;left:1599.21px;top:330.64px;font:400 12px/16px 'Liberation Sans',sans-serif;color:#000;white-space:pre;letter-spacing:-0.302px;">+1.5 %</span>
<span style="position:absolute;left:1664.21px;top:330.64px;font:400 12px/16px 'Liberation Sans',sans-serif;color:#000;white-space:pre;letter-spacing:-0.302px;">+3.8 %</span>
<span style="position:absolute;left:1729.21px;top:330.64px;font:400 12px/16px 'Liberation Sans',sans-serif;color:#000;white-space:pre;letter-spacing:-0.302px;">+4.5 %</span>
<div style="position:absolute;left:96px;top:349px;width:1671px;height:1px;background:#a8a8a8;"></div>
<div style="position:absolute;left:10px;top:350px;width:86px;height:5px;background:#f0f0f0;box-sizing:border-box;border-top:1px solid #fff;border-right:1px solid #696969;"></div>
<div style="position:absolute;left:96px;top:350px;width:1671px;height:5px;background:#f0f0f0;"></div>
<div style="position:absolute;left:160px;top:201px;width:1px;height:154px;background:#a8a8a8;"></div>
<div style="position:absolute;left:217px;top:201px;width:1px;height:154px;background:#a8a8a8;"></div>
<div style="position:absolute;left:282px;top:201px;width:1px;height:154px;background:#a8a8a8;"></div>
<div style="position:absolute;left:344px;top:201px;width:1px;height:154px;background:#a8a8a8;"></div>
<div style="position:absolute;left:408px;top:201px;width:1px;height:154px;background:#a8a8a8;"></div>
<div style="position:absolute;left:467px;top:201px;width:1px;height:154px;background:#a8a8a8;"></div>
<div style="position:absolute;left:538px;top:201px;width:1px;height:154px;background:#a8a8a8;"></div>
<div style="position:absolute;left:609px;top:201px;width:1px;height:154px;background:#a8a8a8;"></div>
<div style="position:absolute;left:678px;top:201px;width:1px;height:154px;background:#a8a8a8;"></div>
<div style="position:absolute;left:746px;top:201px;width:1px;height:154px;background:#a8a8a8;"></div>
<div style="position:absolute;left:826px;top:201px;width:1px;height:154px;background:#a8a8a8;"></div>
<div style="position:absolute;left:906px;top:201px;width:1px;height:154px;background:#a8a8a8;"></div>
<div style="position:absolute;left:974px;top:201px;width:1px;height:154px;background:#a8a8a8;"></div>
<div style="position:absolute;left:1054px;top:201px;width:1px;height:154px;background:#a8a8a8;"></div>
<div style="position:absolute;left:1144px;top:201px;width:1px;height:154px;background:#a8a8a8;"></div>
<div style="position:absolute;left:1209px;top:201px;width:1px;height:154px;background:#a8a8a8;"></div>
<div style="position:absolute;left:1289px;top:201px;width:1px;height:154px;background:#a8a8a8;"></div>
<div style="position:absolute;left:1381px;top:201px;width:1px;height:154px;background:#a8a8a8;"></div>
<div style="position:absolute;left:1445px;top:201px;width:1px;height:154px;background:#a8a8a8;"></div>
<div style="position:absolute;left:1512px;top:201px;width:1px;height:154px;background:#a8a8a8;"></div>
<div style="position:absolute;left:1573px;top:201px;width:1px;height:154px;background:#a8a8a8;"></div>
<div style="position:absolute;left:1636px;top:201px;width:1px;height:154px;background:#a8a8a8;"></div>
<div style="position:absolute;left:1701px;top:201px;width:1px;height:154px;background:#a8a8a8;"></div>
<div style="position:absolute;left:1766px;top:201px;width:1px;height:154px;background:#a8a8a8;"></div>
<div style="position:absolute;left:9px;top:177px;width:1780px;height:1px;background:#696969;"></div>
<div style="position:absolute;left:9px;top:177px;width:1px;height:178px;background:#696969;"></div>
<div style="position:absolute;left:10px;top:355px;width:1769px;height:19px;background:#f0f0f0;"></div>
<svg style="position:absolute;left:14px;top:359px" width="8" height="10"><path d="M7 0v9L0 4.500z" fill="#a0a0a0"/></svg>
<svg style="position:absolute;left:1759px;top:359px" width="8" height="10"><path d="M0 0v9l7-4.500z" fill="#a0a0a0"/></svg>
<div style="position:absolute;left:1768px;top:179px;width:2px;height:176px;background:#a8a8a8;"></div>
<div style="position:absolute;left:1770px;top:179px;width:19px;height:195px;background:#f0f0f0;"></div>
<div style="position:absolute;left:1779px;top:195px;width:2px;height:141px;background:#8a8a8a;border-radius:1px"></div>
<div style="position:absolute;left:2px;top:384px;width:384px;height:631px;background:#f0f0f0;"></div><div style="position:absolute;left:5px;top:387px;width:7px;height:7px;background:#808080;"></div><div style="position:absolute;left:376px;top:387px;width:7px;height:7px;background:#808080;"></div><div style="position:absolute;left:5px;top:387px;width:378px;height:625px;background:#ececec;border:1px solid #6f6f6f;box-sizing:border-box;border-radius:7px 7px 0 0;box-shadow:inset 1px 1px 0 #b8b8b8, inset -1px -1px 0 #b8b8b8;"></div><div style="position:absolute;left:7px;top:389px;width:374px;height:16px;background:linear-gradient(90deg,#e6ecf7 0%,#eef2fa 60%,#e9eef8 100%);border-radius:5px 5px 0 0;"></div><div style="position:absolute;left:7px;top:405px;width:374px;height:1px;background:#a9a9a9;"></div><span style="position:absolute;left:12.00px;top:390.49px;font:700 11px/14px 'Liberation Sans',sans-serif;color:#3f3a3a;white-space:pre;transform:scaleX(1.237);transform-origin:0 0;text-shadow:.3px 0 0 #3f3a3a;">Selected color</span>
<div style="position:absolute;left:14px;top:409px;width:113px;height:15px;background:#efefef;"></div>
<span style="position:absolute;left:18.00px;top:408.00px;font:400 13px/17px 'Liberation Sans',sans-serif;color:#000;white-space:pre;letter-spacing:-0.152px;">RGB Levels</span>
<div style="position:absolute;left:231px;top:407px;width:127px;height:16px;background:#efefef;"></div>
<span style="position:absolute;left:241.00px;top:406.40px;font:400 13px/17px 'Liberation Sans',sans-serif;color:#000;white-space:pre;letter-spacing:0.533px;">Current Measure</span>
<div style="position:absolute;left:14px;top:433px;width:200px;height:86px;background:#f0f0f0;"></div>
<div style="position:absolute;left:16.5px;top:489.25px;width:45.5px;height:24.75px;background:linear-gradient(90deg,#fff2f2 0%,#ff0000 48%,#200000 100%);"></div><div style="position:absolute;left:16.5px;top:484.5px;width:45.5px;height:9.5px;background:#a80000;border-radius:50%;box-shadow:0 0 0 .6px rgba(0,0,0,.55);"></div>
<div style="position:absolute;left:67.3px;top:478.45px;width:45.5px;height:35.55000000000001px;background:linear-gradient(90deg,#f2fff2 0%,#00ee00 48%,#002000 100%);"></div><div style="position:absolute;left:67.3px;top:473.7px;width:45.5px;height:9.5px;background:#00a000;border-radius:50%;box-shadow:0 0 0 .6px rgba(0,0,0,.55);"></div>
<div style="position:absolute;left:118.2px;top:454.05px;width:45.5px;height:59.94999999999999px;background:linear-gradient(90deg,#f2f2ff 0%,#0000f0 48%,#000020 100%);"></div><div style="position:absolute;left:118.2px;top:449.3px;width:45.5px;height:9.5px;background:#0000a8;border-radius:50%;box-shadow:0 0 0 .6px rgba(0,0,0,.55);"></div>
<div style="position:absolute;left:169px;top:454.55px;width:45px;height:59.44999999999999px;background:linear-gradient(90deg,#fffdf0 0%,#ffd800 48%,#181000 100%);"></div><div style="position:absolute;left:169px;top:449.8px;width:45px;height:9.5px;background:#b8860b;border-radius:50%;box-shadow:0 0 0 .6px rgba(0,0,0,.55);"></div>
<div style="position:absolute;left:14px;top:514px;width:200px;height:5.5px;background:#000;"></div>
<span style="position:absolute;left:20.20px;top:470.29px;font:700 11px/14px 'Liberation Serif',serif;color:#111;white-space:pre;letter-spacing:0.250px;">100.2%</span>
<span style="position:absolute;left:71.10px;top:459.29px;font:700 11px/14px 'Liberation Serif',serif;color:#111;white-space:pre;letter-spacing:0.250px;">142.4%</span>
<span style="position:absolute;left:122.10px;top:435.09px;font:700 11px/14px 'Liberation Serif',serif;color:#111;white-space:pre;letter-spacing:0.250px;">236.0%</span>
<span style="position:absolute;left:172.50px;top:435.09px;font:700 11px/14px 'Liberation Serif',serif;color:#111;white-space:pre;letter-spacing:0.424px;">dE 18.3</span>
<div style="position:absolute;left:16px;top:533px;width:96px;height:74px;background:#fff;"></div>
<div style="position:absolute;left:112px;top:533px;width:96px;height:74px;background:#ffdcb2;"></div>
<span style="position:absolute;left:24.30px;top:533.47px;font:700 12.5px/16px 'Liberation Sans',sans-serif;color:#15294a;white-space:pre;letter-spacing:0.949px;">235,235,235</span>
<span style="position:absolute;left:35.80px;top:549.47px;font:700 12.5px/16px 'Liberation Sans',sans-serif;color:#15294a;white-space:pre;letter-spacing:0.880px;">Measure</span>
<span style="position:absolute;left:120.50px;top:533.47px;font:700 12.5px/16px 'Liberation Sans',sans-serif;color:#15294a;white-space:pre;letter-spacing:0.949px;">235,205,169</span>
<span style="position:absolute;left:127.50px;top:549.47px;font:700 12.5px/16px 'Liberation Sans',sans-serif;color:#15294a;white-space:pre;letter-spacing:0.569px;">Reference</span>
<div style="position:absolute;left:14px;top:622px;width:46px;height:15px;background:#efefef;"></div>
<span style="position:absolute;left:18.00px;top:620.60px;font:400 13px/17px 'Liberation Sans',sans-serif;color:#000;white-space:pre;letter-spacing:0.773px;">Target</span>
<div style="position:absolute;left:50px;top:638px;width:116px;height:89px;background:conic-gradient(from 0deg at 50% 50%,#48ff00 0deg,#b8e800 35deg,#ffc000 52deg,#ff5a00 68deg,#ff0a00 92deg,#ff0060 118deg,#f8008c 130deg,#b000b4 165deg,#7000d0 195deg,#1400f4 228deg,#0010f0 238deg,#0060b8 268deg,#00a89c 290deg,#00f080 308deg,#10ff40 335deg,#48ff00 360deg);box-sizing:border-box;border-left:1px solid #000;border-top:1px solid #000;border-right:1px solid #200;"></div>
<div style="position:absolute;left:67px;top:651px;width:81.5px;height:63px;background:#ffdcb2;border-radius:7.5px;box-shadow:0 0 0 1px rgba(255,255,255,.9);"></div>
<svg style="position:absolute;left:67px;top:651px" width="82" height="63" viewBox="0 0 82 63"><path d="M10 31.400h63.500M41.300 8.300v46.500" stroke="#000" stroke-width="1" stroke-dasharray="3 2" fill="none"/><ellipse cx="41.300" cy="31.400" rx="15.200" ry="11" fill="none" stroke="#000" stroke-width="1" stroke-dasharray="3 2"/><path d="M13 19.500c4-4.500 8.500-7.500 14-9.300" stroke="#10e878" stroke-width="1" fill="none"/><path d="M55.200 10.300c5.500 1.500 10.500 5 14.500 10.400" stroke="#ffb818" stroke-width="1" fill="none"/><path d="M12.200 41.200c4 5 9 8.500 14.700 10.300" stroke="#2050ff" stroke-width="1" fill="none"/><path d="M55.200 51.500c5.500-1.800 10-4.700 13.600-9.300" stroke="#ff1090" stroke-width="1" fill="none"/><path d="M41 22l5.500-4.800 4.300 4.400-7 4.700z" fill="#20e020"/><path d="M44 27.500l7.300-5 .8 2.700-6.300 6.300z" fill="#1838e8"/><path d="M55.500 19.500L23 42" stroke="#7a1000" stroke-width="2.400"/><path d="M55.500 19.500L24 41.300" stroke="#f8e000" stroke-width="1.100"/><path d="M50.500 20.500l5-1-1.500 4.800z" fill="#e02010"/><path d="M22.300 42.300l3.300-7.300 6 6.300z" fill="#7a1000"/><path d="M23 41.500l2.800-5.300 3 3.200z" fill="#f8f000"/></svg>
<div style="position:absolute;left:220px;top:430px;width:153px;height:577px;background:#f0f0f0;box-sizing:border-box;border:1.5px solid #696969;border-right:1px solid #fff;border-bottom:1px solid #fff;"></div>
<div style="position:absolute;left:222px;top:432px;width:53px;height:23px;background:#f0f0f0;box-sizing:border-box;border-right:1px solid #5c5c5c;border-bottom:1.5px solid #5c5c5c;border-top:1px solid #fafafa;"></div>
<span style="position:absolute;left:226.63px;top:435.36px;font:700 12.8px/17px 'Liberation Sans',sans-serif;color:#000;white-space:pre;letter-spacing:-0.384px;">Y cd/m²</span>
<div style="position:absolute;left:275px;top:432px;width:80px;height:23px;background:#fff;box-sizing:border-box;border-bottom:1px solid #c4c4c4;"></div>
<span style="position:absolute;left:313.52px;top:435.93px;font:400 12.6px/16px 'Liberation Sans',sans-serif;color:#000;white-space:pre;letter-spacing:-1.027px;">100.875</span>
<div style="position:absolute;left:222px;top:455px;width:53px;height:23px;background:#f0f0f0;box-sizing:border-box;border-right:1px solid #5c5c5c;border-bottom:1.5px solid #5c5c5c;border-top:1px solid #fafafa;"></div>
<span style="position:absolute;left:235.09px;top:458.36px;font:700 12.8px/17px 'Liberation Sans',sans-serif;color:#000;white-space:pre;letter-spacing:-0.353px;">Y ftL</span>
<div style="position:absolute;left:275px;top:455px;width:80px;height:23px;background:#fff;box-sizing:border-box;border-bottom:1px solid #c4c4c4;"></div>
<span style="position:absolute;left:313.52px;top:458.93px;font:400 12.6px/16px 'Liberation Sans',sans-serif;color:#000;white-space:pre;letter-spacing:-1.027px;">29.4441</span>
<div style="position:absolute;left:222px;top:478px;width:53px;height:23px;background:#f0f0f0;box-sizing:border-box;border-right:1px solid #5c5c5c;border-bottom:1.5px solid #5c5c5c;border-top:1px solid #fafafa;"></div>
<span style="position:absolute;left:242.35px;top:481.36px;font:700 12.8px/17px 'Liberation Sans',sans-serif;color:#000;white-space:pre;letter-spacing:-0.648px;">T°</span>
<div style="position:absolute;left:275px;top:478px;width:80px;height:23px;background:#fff;box-sizing:border-box;border-bottom:1px solid #c4c4c4;"></div>
<span style="position:absolute;left:328.71px;top:481.93px;font:400 12.6px/16px 'Liberation Sans',sans-serif;color:#000;white-space:pre;letter-spacing:-1.264px;">6486</span>
<div style="position:absolute;left:222px;top:501px;width:53px;height:23px;background:#f0f0f0;box-sizing:border-box;border-right:1px solid #5c5c5c;border-bottom:1.5px solid #5c5c5c;border-top:1px solid #fafafa;"></div>
<span style="position:absolute;left:244.23px;top:504.36px;font:700 12.8px/17px 'Liberation Sans',sans-serif;color:#000;white-space:pre;">X</span>
<div style="position:absolute;left:275px;top:501px;width:80px;height:23px;background:#e0e0e0;box-sizing:border-box;border-bottom:1px solid #c4c4c4;"></div>
<span style="position:absolute;left:325.67px;top:504.93px;font:400 12.6px/16px 'Liberation Sans',sans-serif;color:#000;white-space:pre;letter-spacing:-1.066px;">95.91</span>
<div style="position:absolute;left:222px;top:524px;width:53px;height:23px;background:#f0f0f0;box-sizing:border-box;border-right:1px solid #5c5c5c;border-bottom:1.5px solid #5c5c5c;border-top:1px solid #fafafa;"></div>
<span style="position:absolute;left:244.23px;top:527.36px;font:700 12.8px/17px 'Liberation Sans',sans-serif;color:#000;white-space:pre;">Y</span>
<div style="position:absolute;left:275px;top:524px;width:80px;height:23px;background:#e0e0e0;box-sizing:border-box;border-bottom:1px solid #c4c4c4;"></div>
<span style="position:absolute;left:319.60px;top:527.93px;font:400 12.6px/16px 'Liberation Sans',sans-serif;color:#000;white-space:pre;letter-spacing:-1.043px;">100.88</span>
<div style="position:absolute;left:222px;top:547px;width:53px;height:23px;background:#f0f0f0;box-sizing:border-box;border-right:1px solid #5c5c5c;border-bottom:1.5px solid #5c5c5c;border-top:1px solid #fafafa;"></div>
<span style="position:absolute;left:244.59px;top:550.36px;font:700 12.8px/17px 'Liberation Sans',sans-serif;color:#000;white-space:pre;">Z</span>
<div style="position:absolute;left:275px;top:547px;width:80px;height:23px;background:#e0e0e0;box-sizing:border-box;border-bottom:1px solid #c4c4c4;"></div>
<span style="position:absolute;left:319.60px;top:550.93px;font:400 12.6px/16px 'Liberation Sans',sans-serif;color:#000;white-space:pre;letter-spacing:-1.043px;">109.64</span>
<div style="position:absolute;left:222px;top:570px;width:53px;height:23px;background:#f0f0f0;box-sizing:border-box;border-right:1px solid #5c5c5c;border-bottom:1.5px solid #5c5c5c;border-top:1px solid #fafafa;"></div>
<span style="position:absolute;left:243.87px;top:573.36px;font:700 12.8px/17px 'Liberation Sans',sans-serif;color:#000;white-space:pre;">R</span>
<div style="position:absolute;left:275px;top:570px;width:80px;height:23px;background:#fff;box-sizing:border-box;border-bottom:1px solid #c4c4c4;"></div>
<span style="position:absolute;left:319.60px;top:573.93px;font:400 12.6px/16px 'Liberation Sans',sans-serif;color:#000;white-space:pre;letter-spacing:-1.043px;">101.07</span>
<div style="position:absolute;left:222px;top:593px;width:53px;height:23px;background:#f0f0f0;box-sizing:border-box;border-right:1px solid #5c5c5c;border-bottom:1.5px solid #5c5c5c;border-top:1px solid #fafafa;"></div>
<span style="position:absolute;left:243.52px;top:596.36px;font:700 12.8px/17px 'Liberation Sans',sans-serif;color:#000;white-space:pre;">G</span>
<div style="position:absolute;left:275px;top:593px;width:80px;height:23px;background:#fff;box-sizing:border-box;border-bottom:1px solid #c4c4c4;"></div>
<span style="position:absolute;left:319.60px;top:596.93px;font:400 12.6px/16px 'Liberation Sans',sans-serif;color:#000;white-space:pre;letter-spacing:-1.043px;">100.84</span>
<div style="position:absolute;left:222px;top:616px;width:53px;height:23px;background:#f0f0f0;box-sizing:border-box;border-right:1px solid #5c5c5c;border-bottom:1.5px solid #5c5c5c;border-top:1px solid #fafafa;"></div>
<span style="position:absolute;left:243.87px;top:619.36px;font:700 12.8px/17px 'Liberation Sans',sans-serif;color:#000;white-space:pre;">B</span>
<div style="position:absolute;left:275px;top:616px;width:80px;height:23px;background:#fff;box-sizing:border-box;border-bottom:1px solid #c4c4c4;"></div>
<span style="position:absolute;left:319.60px;top:619.93px;font:400 12.6px/16px 'Liberation Sans',sans-serif;color:#000;white-space:pre;letter-spacing:-1.043px;">100.65</span>
<div style="position:absolute;left:222px;top:639px;width:53px;height:23px;background:#f0f0f0;box-sizing:border-box;border-right:1px solid #5c5c5c;border-bottom:1.5px solid #5c5c5c;border-top:1px solid #fafafa;"></div>
<span style="position:absolute;left:244.94px;top:642.36px;font:700 12.8px/17px 'Liberation Sans',sans-serif;color:#000;white-space:pre;">x</span>
<div style="position:absolute;left:275px;top:639px;width:80px;height:23px;background:#e0e0e0;box-sizing:border-box;border-bottom:1px solid #c4c4c4;"></div>
<span style="position:absolute;left:325.67px;top:642.93px;font:400 12.6px/16px 'Liberation Sans',sans-serif;color:#000;white-space:pre;letter-spacing:-1.066px;">0.313</span>
<div style="position:absolute;left:222px;top:662px;width:53px;height:23px;background:#f0f0f0;box-sizing:border-box;border-right:1px solid #5c5c5c;border-bottom:1.5px solid #5c5c5c;border-top:1px solid #fafafa;"></div>
<span style="position:absolute;left:244.94px;top:665.36px;font:700 12.8px/17px 'Liberation Sans',sans-serif;color:#000;white-space:pre;">y</span>
<div style="position:absolute;left:275px;top:662px;width:80px;height:23px;background:#e0e0e0;box-sizing:border-box;border-bottom:1px solid #c4c4c4;"></div>
<span style="position:absolute;left:325.67px;top:665.93px;font:400 12.6px/16px 'Liberation Sans',sans-serif;color:#000;white-space:pre;letter-spacing:-1.066px;">0.329</span>
<div style="position:absolute;left:222px;top:685px;width:53px;height:23px;background:#f0f0f0;box-sizing:border-box;border-right:1px solid #5c5c5c;border-bottom:1.5px solid #5c5c5c;border-top:1px solid #fafafa;"></div>
<span style="position:absolute;left:244.23px;top:688.36px;font:700 12.8px/17px 'Liberation Sans',sans-serif;color:#000;white-space:pre;">Y</span>
<div style="position:absolute;left:275px;top:685px;width:80px;height:23px;background:#e0e0e0;box-sizing:border-box;border-bottom:1px solid #c4c4c4;"></div>
<span style="position:absolute;left:313.52px;top:688.93px;font:400 12.6px/16px 'Liberation Sans',sans-serif;color:#000;white-space:pre;letter-spacing:-1.027px;">100.875</span>
<div style="position:absolute;left:222px;top:708px;width:53px;height:23px;background:#f0f0f0;box-sizing:border-box;border-right:1px solid #5c5c5c;border-bottom:1.5px solid #5c5c5c;border-top:1px solid #fafafa;"></div>
<span style="position:absolute;left:244.94px;top:711.36px;font:700 12.8px/17px 'Liberation Sans',sans-serif;color:#000;white-space:pre;">x</span>
<div style="position:absolute;left:275px;top:708px;width:80px;height:23px;background:#fff;box-sizing:border-box;border-bottom:1px solid #c4c4c4;"></div>
<span style="position:absolute;left:325.67px;top:711.93px;font:400 12.6px/16px 'Liberation Sans',sans-serif;color:#000;white-space:pre;letter-spacing:-1.066px;">0.313</span>
<div style="position:absolute;left:222px;top:731px;width:53px;height:23px;background:#f0f0f0;box-sizing:border-box;border-right:1px solid #5c5c5c;border-bottom:1.5px solid #5c5c5c;border-top:1px solid #fafafa;"></div>
<span style="position:absolute;left:244.94px;top:734.36px;font:700 12.8px/17px 'Liberation Sans',sans-serif;color:#000;white-space:pre;">y</span>
<div style="position:absolute;left:275px;top:731px;width:80px;height:23px;background:#fff;box-sizing:border-box;border-bottom:1px solid #c4c4c4;"></div>
<span style="position:absolute;left:325.67px;top:734.93px;font:400 12.6px/16px 'Liberation Sans',sans-serif;color:#000;white-space:pre;letter-spacing:-1.066px;">0.329</span>
<div style="position:absolute;left:222px;top:754px;width:53px;height:23px;background:#f0f0f0;box-sizing:border-box;border-right:1px solid #5c5c5c;border-bottom:1.5px solid #5c5c5c;border-top:1px solid #fafafa;"></div>
<span style="position:absolute;left:245.30px;top:757.36px;font:700 12.8px/17px 'Liberation Sans',sans-serif;color:#000;white-space:pre;">z</span>
<div style="position:absolute;left:275px;top:754px;width:80px;height:23px;background:#fff;box-sizing:border-box;border-bottom:1px solid #c4c4c4;"></div>
<span style="position:absolute;left:325.67px;top:757.93px;font:400 12.6px/16px 'Liberation Sans',sans-serif;color:#000;white-space:pre;letter-spacing:-1.066px;">0.358</span>
<div style="position:absolute;left:222px;top:777px;width:53px;height:23px;background:#f0f0f0;box-sizing:border-box;border-right:1px solid #5c5c5c;border-bottom:1.5px solid #5c5c5c;border-top:1px solid #fafafa;"></div>
<span style="position:absolute;left:244.59px;top:780.36px;font:700 12.8px/17px 'Liberation Sans',sans-serif;color:#000;white-space:pre;">L</span>
<div style="position:absolute;left:275px;top:777px;width:80px;height:23px;background:#e0e0e0;box-sizing:border-box;border-bottom:1px solid #c4c4c4;"></div>
<span style="position:absolute;left:319.60px;top:780.93px;font:400 12.6px/16px 'Liberation Sans',sans-serif;color:#000;white-space:pre;letter-spacing:-1.043px;">100.00</span>
<div style="position:absolute;left:222px;top:800px;width:53px;height:23px;background:#f0f0f0;box-sizing:border-box;border-right:1px solid #5c5c5c;border-bottom:1.5px solid #5c5c5c;border-top:1px solid #fafafa;"></div>
<span style="position:absolute;left:244.94px;top:803.36px;font:700 12.8px/17px 'Liberation Sans',sans-serif;color:#000;white-space:pre;">a</span>
<div style="position:absolute;left:275px;top:800px;width:80px;height:23px;background:#e0e0e0;box-sizing:border-box;border-bottom:1px solid #c4c4c4;"></div>
<span style="position:absolute;left:331.74px;top:803.93px;font:400 12.6px/16px 'Liberation Sans',sans-serif;color:#000;white-space:pre;letter-spacing:-1.106px;">0.05</span>
<div style="position:absolute;left:222px;top:823px;width:53px;height:23px;background:#f0f0f0;box-sizing:border-box;border-right:1px solid #5c5c5c;border-bottom:1.5px solid #5c5c5c;border-top:1px solid #fafafa;"></div>
<span style="position:absolute;left:244.59px;top:826.36px;font:700 12.8px/17px 'Liberation Sans',sans-serif;color:#000;white-space:pre;">b</span>
<div style="position:absolute;left:275px;top:823px;width:80px;height:23px;background:#e0e0e0;box-sizing:border-box;border-bottom:1px solid #c4c4c4;"></div>
<span style="position:absolute;left:331.74px;top:826.93px;font:400 12.6px/16px 'Liberation Sans',sans-serif;color:#000;white-space:pre;letter-spacing:-1.106px;">0.13</span>
<div style="position:absolute;left:222px;top:846px;width:53px;height:23px;background:#f0f0f0;box-sizing:border-box;border-right:1px solid #5c5c5c;border-bottom:1.5px solid #5c5c5c;border-top:1px solid #fafafa;"></div>
<span style="position:absolute;left:244.59px;top:849.36px;font:700 12.8px/17px 'Liberation Sans',sans-serif;color:#000;white-space:pre;">L</span>
<div style="position:absolute;left:275px;top:846px;width:80px;height:23px;background:#fff;box-sizing:border-box;border-bottom:1px solid #c4c4c4;"></div>
<span style="position:absolute;left:319.60px;top:849.93px;font:400 12.6px/16px 'Liberation Sans',sans-serif;color:#000;white-space:pre;letter-spacing:-1.043px;">100.00</span>
<div style="position:absolute;left:222px;top:869px;width:53px;height:23px;background:#f0f0f0;box-sizing:border-box;border-right:1px solid #5c5c5c;border-bottom:1.5px solid #5c5c5c;border-top:1px solid #fafafa;"></div>
<span style="position:absolute;left:243.87px;top:872.36px;font:700 12.8px/17px 'Liberation Sans',sans-serif;color:#000;white-space:pre;">C</span>
<div style="position:absolute;left:275px;top:869px;width:80px;height:23px;background:#fff;box-sizing:border-box;border-bottom:1px solid #c4c4c4;"></div>
<span style="position:absolute;left:331.74px;top:872.93px;font:400 12.6px/16px 'Liberation Sans',sans-serif;color:#000;white-space:pre;letter-spacing:-1.106px;">0.14</span>
<div style="position:absolute;left:222px;top:892px;width:53px;height:23px;background:#f0f0f0;box-sizing:border-box;border-right:1px solid #5c5c5c;border-bottom:1.5px solid #5c5c5c;border-top:1px solid #fafafa;"></div>
<span style="position:absolute;left:243.87px;top:895.36px;font:700 12.8px/17px 'Liberation Sans',sans-serif;color:#000;white-space:pre;">H</span>
<div style="position:absolute;left:275px;top:892px;width:80px;height:23px;background:#fff;box-sizing:border-box;border-bottom:1px solid #c4c4c4;"></div>
<span style="position:absolute;left:325.67px;top:895.93px;font:400 12.6px/16px 'Liberation Sans',sans-serif;color:#000;white-space:pre;letter-spacing:-1.066px;">69.85</span>
<div style="position:absolute;left:222px;top:915px;width:53px;height:23px;background:#f0f0f0;box-sizing:border-box;border-right:1px solid #5c5c5c;border-bottom:1.5px solid #5c5c5c;border-top:1px solid #fafafa;"></div>
<span style="position:absolute;left:244.59px;top:918.36px;font:700 12.8px/17px 'Liberation Sans',sans-serif;color:#000;white-space:pre;">L</span>
<div style="position:absolute;left:275px;top:915px;width:80px;height:23px;background:#e0e0e0;box-sizing:border-box;border-bottom:1px solid #c4c4c4;"></div>
<span style="position:absolute;left:319.60px;top:918.93px;font:400 12.6px/16px 'Liberation Sans',sans-serif;color:#000;white-space:pre;letter-spacing:-1.043px;">100.90</span>
<div style="position:absolute;left:222px;top:938px;width:53px;height:23px;background:#f0f0f0;box-sizing:border-box;border-right:1px solid #5c5c5c;border-bottom:1.5px solid #5c5c5c;border-top:1px solid #fafafa;"></div>
<span style="position:absolute;left:243.16px;top:941.36px;font:700 12.8px/17px 'Liberation Sans',sans-serif;color:#000;white-space:pre;">M</span>
<div style="position:absolute;left:275px;top:938px;width:80px;height:23px;background:#e0e0e0;box-sizing:border-box;border-bottom:1px solid #c4c4c4;"></div>
<span style="position:absolute;left:319.60px;top:941.93px;font:400 12.6px/16px 'Liberation Sans',sans-serif;color:#000;white-space:pre;letter-spacing:-1.043px;">150.05</span>
<div style="position:absolute;left:222px;top:961px;width:53px;height:23px;background:#f0f0f0;box-sizing:border-box;border-right:1px solid #5c5c5c;border-bottom:1.5px solid #5c5c5c;border-top:1px solid #fafafa;"></div>
<span style="position:absolute;left:244.23px;top:964.36px;font:700 12.8px/17px 'Liberation Sans',sans-serif;color:#000;white-space:pre;">S</span>
<div style="position:absolute;left:275px;top:961px;width:80px;height:23px;background:#e0e0e0;box-sizing:border-box;border-bottom:1px solid #c4c4c4;"></div>
<span style="position:absolute;left:319.60px;top:964.93px;font:400 12.6px/16px 'Liberation Sans',sans-serif;color:#000;white-space:pre;letter-spacing:-1.043px;">100.67</span>
<div style="position:absolute;left:222px;top:984px;width:133px;height:23px;background:#a0a0a0;"></div>
<div style="position:absolute;left:355px;top:432px;width:17px;height:574px;background:#f0f0f0;box-sizing:border-box;border-left:1px solid #d8d8d8;"></div>
<svg style="position:absolute;left:359px;top:437px" width="10" height="8"><path d="M0 7h9L4.500 0z" fill="#a8a8a8"/></svg>
<svg style="position:absolute;left:359px;top:995px" width="10" height="8"><path d="M0 0h9L4.500 7z" fill="#a8a8a8"/></svg>
<div style="position:absolute;left:389px;top:384px;width:1509px;height:631px;background:#f0f0f0;"></div><div style="position:absolute;left:392px;top:387px;width:7px;height:7px;background:#808080;"></div><div style="position:absolute;left:1888px;top:387px;width:7px;height:7px;background:#808080;"></div><div style="position:absolute;left:392px;top:387px;width:1503px;height:625px;background:#ececec;border:1px solid #6f6f6f;box-sizing:border-box;border-radius:7px 7px 0 0;box-shadow:inset 1px 1px 0 #b8b8b8, inset -1px -1px 0 #b8b8b8;"></div><div style="position:absolute;left:394px;top:389px;width:1499px;height:16px;background:linear-gradient(90deg,#e6ecf7 0%,#eef2fa 60%,#e9eef8 100%);border-radius:5px 5px 0 0;"></div><div style="position:absolute;left:394px;top:405px;width:1499px;height:1px;background:#a9a9a9;"></div><span style="position:absolute;left:399.00px;top:390.49px;font:700 11px/14px 'Liberation Sans',sans-serif;color:#3f3a3a;white-space:pre;transform:scaleX(1.273);transform-origin:0 0;text-shadow:.3px 0 0 #3f3a3a;">Information</span>
<div style="position:absolute;left:397px;top:410px;width:300px;height:21px;background:#fff;box-sizing:border-box;border:1px solid #7a7a7a;box-shadow:inset 1px 1px 0 #6a6a6a, inset -1px -1px 0 #dcdcdc;"></div><div style="position:absolute;left:677px;top:412px;width:18px;height:17px;background:#f0f0f0;box-sizing:border-box;border:1px solid #a0a0a0;border-top-color:#fff;border-left-color:#fff;box-shadow:1px 1px 0 #696969;"></div><svg style="position:absolute;left:682px;top:418.5px" width="8" height="5"><path d="M0 0h7l-3.500 4z" fill="#000"/></svg><span style="position:absolute;left:400.20px;top:412.30px;font:400 13px/17px 'Liberation Sans',sans-serif;color:#000;white-space:pre;letter-spacing:0.309px;">CIE Diagram</span>
<div style="position:absolute;left:399px;top:440px;width:1494px;height:567px;background:#fff;box-sizing:border-box;border:1px solid #828282;border-right-color:#e3e3e3;border-bottom-color:#e3e3e3;"></div>
<div style="position:absolute;left:400px;top:441px;width:1492px;height:565px;background:#696969;box-sizing:border-box;border:1px solid #696969;border-right-color:#fff;border-bottom-color:#fff;"></div>
<svg style="position:absolute;left:402px;top:443px" width="1488" height="562" viewBox="402 443 1488 562"><rect x="402" y="443" width="1488" height="562" fill="#02090b"/><defs><clipPath id="locus"><polygon points="792.5,967.5 785.0,967.3 770.0,963.0 750.0,953.8 730.0,940.5 707.5,922.5 692.5,910.5 675.0,895.0 657.5,877.5 645.0,863.8 620.0,835.0 598.8,808.2 582.5,785.0 563.8,752.5 549.5,724.0 540.0,695.0 535.0,670.0 532.5,645.0 531.8,617.5 532.5,592.5 535.0,580.0 538.8,565.0 547.5,546.2 565.0,528.8 585.0,518.8 612.5,510.8 640.0,506.2 660.0,504.2 680.0,504.0 700.0,505.0 725.0,507.5 750.0,511.8 825.0,527.0 856.8,535.5 925.0,554.2 980.0,572.0 1140.0,623.0 1352.6,695.3 1518.5,752.6 1683.8,808.0 1721.0,821.0"/></clipPath><filter id="bl" x="-2%" y="-2%" width="104%" height="104%"><feGaussianBlur stdDeviation="2.2"/></filter><linearGradient id="s0" gradientUnits="userSpaceOnUse" x1="664" x2="690" y1="0" y2="0"><stop offset="0.000" stop-color="#00ffa4"/><stop offset="0.615" stop-color="#00ffa2"/><stop offset="1.000" stop-color="#00ffa0"/></linearGradient><linearGradient id="s1" gradientUnits="userSpaceOnUse" x1="621" x2="736" y1="0" y2="0"><stop offset="0.000" stop-color="#00ffaa"/><stop offset="0.163" stop-color="#00ffa8"/><stop offset="0.512" stop-color="#00ffa2"/><stop offset="0.861" stop-color="#00ff9c"/><stop offset="1.000" stop-color="#00ff9a"/></linearGradient><linearGradient id="s2" gradientUnits="userSpaceOnUse" x1="600" x2="759" y1="0" y2="0"><stop offset="0.000" stop-color="#00ffad"/><stop offset="0.250" stop-color="#00ffa8"/><stop offset="0.502" stop-color="#00ffa3"/><stop offset="0.753" stop-color="#00ff9d"/><stop offset="1.000" stop-color="#00ff96"/></linearGradient><linearGradient id="s3" gradientUnits="userSpaceOnUse" x1="586" x2="779" y1="0" y2="0"><stop offset="0.000" stop-color="#00ffaf"/><stop offset="0.070" stop-color="#00ffae"/><stop offset="0.278" stop-color="#00ffa9"/><stop offset="0.486" stop-color="#00ffa4"/><stop offset="0.694" stop-color="#00ff9e"/><stop offset="0.902" stop-color="#00ff97"/><stop offset="1.000" stop-color="#00ff93"/></linearGradient><linearGradient id="s4" gradientUnits="userSpaceOnUse" x1="574" x2="799" y1="0" y2="0"><stop offset="0.000" stop-color="#00ffb1"/><stop offset="0.114" stop-color="#00ffaf"/><stop offset="0.292" stop-color="#00ffaa"/><stop offset="0.471" stop-color="#00ffa5"/><stop offset="0.649" stop-color="#00ff9f"/><stop offset="0.828" stop-color="#00ff97"/><stop offset="1.000" stop-color="#00ff8f"/></linearGradient><linearGradient id="s5" gradientUnits="userSpaceOnUse" x1="566" x2="818" y1="0" y2="0"><stop offset="0.000" stop-color="#00ffb3"/><stop offset="0.133" stop-color="#00ffaf"/><stop offset="0.292" stop-color="#00ffab"/><stop offset="0.451" stop-color="#00ffa5"/><stop offset="0.610" stop-color="#00ff9f"/><stop offset="0.769" stop-color="#00ff98"/><stop offset="0.928" stop-color="#00ff90"/><stop offset="1.000" stop-color="#00ff8c"/></linearGradient><linearGradient id="s6" gradientUnits="userSpaceOnUse" x1="558" x2="837" y1="0" y2="0"><stop offset="0.000" stop-color="#00ffb4"/><stop offset="0.149" stop-color="#00ffb0"/><stop offset="0.293" stop-color="#00ffab"/><stop offset="0.437" stop-color="#00ffa6"/><stop offset="0.580" stop-color="#00ffa0"/><stop offset="0.724" stop-color="#00ff99"/><stop offset="0.868" stop-color="#00ff91"/><stop offset="1.000" stop-color="#00ff88"/></linearGradient><linearGradient id="s7" gradientUnits="userSpaceOnUse" x1="554" x2="852" y1="0" y2="0"><stop offset="0.000" stop-color="#00ffb6"/><stop offset="0.021" stop-color="#00ffb5"/><stop offset="0.155" stop-color="#00ffb1"/><stop offset="0.290" stop-color="#00ffac"/><stop offset="0.424" stop-color="#00ffa7"/><stop offset="0.558" stop-color="#00ffa1"/><stop offset="0.692" stop-color="#00ff9a"/><stop offset="0.827" stop-color="#00ff92"/><stop offset="0.961" stop-color="#00ff88"/><stop offset="1.000" stop-color="#00ff84"/></linearGradient><linearGradient id="s8" gradientUnits="userSpaceOnUse" x1="550" x2="867" y1="0" y2="0"><stop offset="0.000" stop-color="#00ffb7"/><stop offset="0.032" stop-color="#00ffb6"/><stop offset="0.159" stop-color="#00ffb2"/><stop offset="0.285" stop-color="#00ffad"/><stop offset="0.411" stop-color="#00ffa8"/><stop offset="0.537" stop-color="#00ffa2"/><stop offset="0.664" stop-color="#00ff9b"/><stop offset="0.790" stop-color="#00ff92"/><stop offset="0.916" stop-color="#00ff89"/><stop offset="1.000" stop-color="#00ff81"/></linearGradient><linearGradient id="s9" gradientUnits="userSpaceOnUse" x1="546" x2="881" y1="0" y2="0"><stop offset="0.000" stop-color="#00ffb8"/><stop offset="0.042" stop-color="#00ffb6"/><stop offset="0.162" stop-color="#00ffb2"/><stop offset="0.281" stop-color="#00ffae"/><stop offset="0.400" stop-color="#00ffa8"/><stop offset="0.520" stop-color="#00ffa3"/><stop offset="0.639" stop-color="#00ff9c"/><stop offset="0.758" stop-color="#00ff93"/><stop offset="0.877" stop-color="#00ff89"/><stop offset="1.000" stop-color="#00ff7d"/></linearGradient><linearGradient id="s10" gradientUnits="userSpaceOnUse" x1="542" x2="896" y1="0" y2="0"><stop offset="0.000" stop-color="#00ffb9"/><stop offset="0.052" stop-color="#00ffb7"/><stop offset="0.165" stop-color="#00ffb3"/><stop offset="0.278" stop-color="#00ffae"/><stop offset="0.391" stop-color="#00ffa9"/><stop offset="0.504" stop-color="#00ffa3"/><stop offset="0.617" stop-color="#00ff9c"/><stop offset="0.730" stop-color="#00ff94"/><stop offset="0.843" stop-color="#00ff8a"/><stop offset="0.956" stop-color="#00ff7e"/><stop offset="1.000" stop-color="#00ff78"/></linearGradient><linearGradient id="s11" gradientUnits="userSpaceOnUse" x1="539" x2="910" y1="0" y2="0"><stop offset="0.000" stop-color="#00ffba"/><stop offset="0.057" stop-color="#00ffb8"/><stop offset="0.165" stop-color="#00ffb4"/><stop offset="0.273" stop-color="#00ffaf"/><stop offset="0.380" stop-color="#00ffaa"/><stop offset="0.488" stop-color="#00ffa4"/><stop offset="0.596" stop-color="#00ff9d"/><stop offset="0.703" stop-color="#00ff95"/><stop offset="0.811" stop-color="#00ff8b"/><stop offset="0.919" stop-color="#00ff7f"/><stop offset="1.000" stop-color="#00ff73"/></linearGradient><linearGradient id="s12" gradientUnits="userSpaceOnUse" x1="537" x2="925" y1="0" y2="0"><stop offset="0.000" stop-color="#00ffbb"/><stop offset="0.060" stop-color="#00ffb9"/><stop offset="0.163" stop-color="#00ffb5"/><stop offset="0.266" stop-color="#00ffb0"/><stop offset="0.369" stop-color="#00ffab"/><stop offset="0.472" stop-color="#00ffa5"/><stop offset="0.575" stop-color="#00ff9e"/><stop offset="0.678" stop-color="#00ff96"/><stop offset="0.781" stop-color="#00ff8c"/><stop offset="0.885" stop-color="#00ff80"/><stop offset="1.000" stop-color="#00ff6e"/></linearGradient><linearGradient id="s13" gradientUnits="userSpaceOnUse" x1="535" x2="938" y1="0" y2="0"><stop offset="0.000" stop-color="#00ffbc"/><stop offset="0.062" stop-color="#00ffb9"/><stop offset="0.161" stop-color="#00ffb5"/><stop offset="0.260" stop-color="#00ffb1"/><stop offset="0.360" stop-color="#00ffac"/><stop offset="0.459" stop-color="#00ffa6"/><stop offset="0.558" stop-color="#00ff9f"/><stop offset="0.657" stop-color="#00ff97"/><stop offset="0.756" stop-color="#00ff8d"/><stop offset="0.855" stop-color="#00ff81"/><stop offset="0.954" stop-color="#00ff71"/><stop offset="1.000" stop-color="#00ff68"/></linearGradient><linearGradient id="s14" gradientUnits="userSpaceOnUse" x1="533" x2="951" y1="0" y2="0"><stop offset="0.000" stop-color="#00ffbd"/><stop offset="0.064" stop-color="#00ffba"/><stop offset="0.160" stop-color="#00ffb6"/><stop offset="0.256" stop-color="#00ffb2"/><stop offset="0.352" stop-color="#00ffad"/><stop offset="0.447" stop-color="#00ffa7"/><stop offset="0.543" stop-color="#00ffa0"/><stop offset="0.639" stop-color="#00ff98"/><stop offset="0.735" stop-color="#00ff8e"/><stop offset="0.830" stop-color="#00ff82"/><stop offset="0.926" stop-color="#00ff72"/><stop offset="1.000" stop-color="#00ff62"/></linearGradient><linearGradient id="s15" gradientUnits="userSpaceOnUse" x1="531" x2="963" y1="0" y2="0"><stop offset="0.000" stop-color="#00ffbd"/><stop offset="0.067" stop-color="#00ffbb"/><stop offset="0.159" stop-color="#00ffb7"/><stop offset="0.252" stop-color="#00ffb3"/><stop offset="0.344" stop-color="#00ffad"/><stop offset="0.437" stop-color="#00ffa8"/><stop offset="0.530" stop-color="#00ffa1"/><stop offset="0.622" stop-color="#00ff99"/><stop offset="0.715" stop-color="#00ff8f"/><stop offset="0.807" stop-color="#00ff83"/><stop offset="0.900" stop-color="#00ff73"/><stop offset="1.000" stop-color="#00ff5b"/></linearGradient><linearGradient id="s16" gradientUnits="userSpaceOnUse" x1="530" x2="976" y1="0" y2="0"><stop offset="0.000" stop-color="#00ffbe"/><stop offset="0.067" stop-color="#00ffbc"/><stop offset="0.157" stop-color="#00ffb8"/><stop offset="0.247" stop-color="#00ffb3"/><stop offset="0.337" stop-color="#00ffae"/><stop offset="0.426" stop-color="#00ffa9"/><stop offset="0.516" stop-color="#00ffa2"/><stop offset="0.606" stop-color="#00ff9a"/><stop offset="0.696" stop-color="#00ff90"/><stop offset="0.785" stop-color="#00ff84"/><stop offset="0.875" stop-color="#00ff74"/><stop offset="0.965" stop-color="#00ff5d"/><stop offset="1.000" stop-color="#00ff52"/></linearGradient><linearGradient id="s17" gradientUnits="userSpaceOnUse" x1="529" x2="988" y1="0" y2="0"><stop offset="0.000" stop-color="#00ffbf"/><stop offset="0.068" stop-color="#00ffbd"/><stop offset="0.155" stop-color="#00ffb9"/><stop offset="0.242" stop-color="#00ffb4"/><stop offset="0.329" stop-color="#00ffaf"/><stop offset="0.416" stop-color="#00ffa9"/><stop offset="0.503" stop-color="#00ffa3"/><stop offset="0.590" stop-color="#00ff9b"/><stop offset="0.678" stop-color="#00ff91"/><stop offset="0.765" stop-color="#00ff85"/><stop offset="0.852" stop-color="#00ff75"/><stop offset="0.939" stop-color="#00ff5e"/><stop offset="1.000" stop-color="#00ff47"/></linearGradient><linearGradient id="s18" gradientUnits="userSpaceOnUse" x1="528" x2="1001" y1="0" y2="0"><stop offset="0.000" stop-color="#00ffc0"/><stop offset="0.068" stop-color="#00ffbd"/><stop offset="0.152" stop-color="#00ffb9"/><stop offset="0.237" stop-color="#00ffb5"/><stop offset="0.322" stop-color="#00ffb0"/><stop offset="0.406" stop-color="#00ffaa"/><stop offset="0.491" stop-color="#00ffa4"/><stop offset="0.576" stop-color="#00ff9c"/><stop offset="0.660" stop-color="#00ff92"/><stop offset="0.745" stop-color="#00ff86"/><stop offset="0.830" stop-color="#00ff76"/><stop offset="0.914" stop-color="#00ff5f"/><stop offset="1.000" stop-color="#00ff38"/></linearGradient><linearGradient id="s19" gradientUnits="userSpaceOnUse" x1="527" x2="1013" y1="0" y2="0"><stop offset="0.000" stop-color="#00ffc1"/><stop offset="0.068" stop-color="#00ffbe"/><stop offset="0.150" stop-color="#00ffba"/><stop offset="0.232" stop-color="#00ffb6"/><stop offset="0.315" stop-color="#00ffb1"/><stop offset="0.397" stop-color="#00ffab"/><stop offset="0.479" stop-color="#00ffa5"/><stop offset="0.562" stop-color="#00ff9d"/><stop offset="0.644" stop-color="#00ff93"/><stop offset="0.726" stop-color="#00ff87"/><stop offset="0.808" stop-color="#00ff77"/><stop offset="0.891" stop-color="#00ff60"/><stop offset="0.973" stop-color="#00ff36"/><stop offset="1.000" stop-color="#00ff1e"/></linearGradient><linearGradient id="s20" gradientUnits="userSpaceOnUse" x1="526" x2="1026" y1="0" y2="0"><stop offset="0.000" stop-color="#00ffc2"/><stop offset="0.068" stop-color="#00ffbf"/><stop offset="0.148" stop-color="#00ffbb"/><stop offset="0.228" stop-color="#00ffb7"/><stop offset="0.308" stop-color="#00ffb2"/><stop offset="0.388" stop-color="#00ffac"/><stop offset="0.468" stop-color="#00ffa6"/><stop offset="0.548" stop-color="#00ff9e"/><stop offset="0.628" stop-color="#00ff94"/><stop offset="0.708" stop-color="#00ff88"/><stop offset="0.788" stop-color="#00ff78"/><stop offset="0.869" stop-color="#00ff61"/><stop offset="0.949" stop-color="#00ff38"/><stop offset="1.000" stop-color="#2bff00"/></linearGradient><linearGradient id="s21" gradientUnits="userSpaceOnUse" x1="525" x2="1038" y1="0" y2="0"><stop offset="0.000" stop-color="#00ffc3"/><stop offset="0.067" stop-color="#00ffc0"/><stop offset="0.145" stop-color="#00ffbc"/><stop offset="0.223" stop-color="#00ffb8"/><stop offset="0.301" stop-color="#00ffb3"/><stop offset="0.379" stop-color="#00ffad"/><stop offset="0.457" stop-color="#00ffa7"/><stop offset="0.535" stop-color="#00ff9f"/><stop offset="0.613" stop-color="#00ff95"/><stop offset="0.692" stop-color="#00ff89"/><stop offset="0.770" stop-color="#00ff79"/><stop offset="0.848" stop-color="#00ff62"/><stop offset="0.926" stop-color="#00ff39"/><stop offset="1.000" stop-color="#41ff00"/></linearGradient><linearGradient id="s22" gradientUnits="userSpaceOnUse" x1="525" x2="1051" y1="0" y2="0"><stop offset="0.000" stop-color="#00ffc3"/><stop offset="0.067" stop-color="#00ffc1"/><stop offset="0.143" stop-color="#00ffbd"/><stop offset="0.219" stop-color="#00ffb9"/><stop offset="0.295" stop-color="#00ffb4"/><stop offset="0.371" stop-color="#00ffae"/><stop offset="0.447" stop-color="#00ffa8"/><stop offset="0.523" stop-color="#00ffa0"/><stop offset="0.599" stop-color="#00ff96"/><stop offset="0.675" stop-color="#00ff8a"/><stop offset="0.752" stop-color="#00ff7a"/><stop offset="0.828" stop-color="#00ff63"/><stop offset="0.904" stop-color="#00ff3a"/><stop offset="0.980" stop-color="#48ff00"/><stop offset="1.000" stop-color="#52ff00"/></linearGradient><linearGradient id="s23" gradientUnits="userSpaceOnUse" x1="524" x2="1063" y1="0" y2="0"><stop offset="0.000" stop-color="#00ffc4"/><stop offset="0.066" stop-color="#00ffc1"/><stop offset="0.140" stop-color="#00ffbe"/><stop offset="0.215" stop-color="#00ffba"/><stop offset="0.289" stop-color="#00ffb5"/><stop offset="0.363" stop-color="#00ffaf"/><stop offset="0.437" stop-color="#00ffa9"/><stop offset="0.511" stop-color="#00ffa1"/><stop offset="0.586" stop-color="#00ff97"/><stop offset="0.660" stop-color="#00ff8b"/><stop offset="0.734" stop-color="#00ff7b"/><stop offset="0.808" stop-color="#00ff64"/><stop offset="0.883" stop-color="#00ff3c"/><stop offset="0.957" stop-color="#48ff00"/><stop offset="1.000" stop-color="#5fff00"/></linearGradient><linearGradient id="s24" gradientUnits="userSpaceOnUse" x1="524" x2="1076" y1="0" y2="0"><stop offset="0.000" stop-color="#00ffc5"/><stop offset="0.065" stop-color="#00ffc2"/><stop offset="0.137" stop-color="#00ffbf"/><stop offset="0.210" stop-color="#00ffba"/><stop offset="0.282" stop-color="#00ffb6"/><stop offset="0.355" stop-color="#00ffb0"/><stop offset="0.427" stop-color="#00ffaa"/><stop offset="0.500" stop-color="#00ffa2"/><stop offset="0.572" stop-color="#00ff98"/><stop offset="0.645" stop-color="#00ff8c"/><stop offset="0.717" stop-color="#00ff7c"/><stop offset="0.790" stop-color="#00ff66"/><stop offset="0.862" stop-color="#00ff3d"/><stop offset="0.935" stop-color="#48ff00"/><stop offset="1.000" stop-color="#6bff00"/></linearGradient><linearGradient id="s25" gradientUnits="userSpaceOnUse" x1="524" x2="1088" y1="0" y2="0"><stop offset="0.000" stop-color="#00ffc6"/><stop offset="0.064" stop-color="#00ffc3"/><stop offset="0.134" stop-color="#00ffc0"/><stop offset="0.205" stop-color="#00ffbb"/><stop offset="0.276" stop-color="#00ffb7"/><stop offset="0.347" stop-color="#00ffb1"/><stop offset="0.418" stop-color="#00ffab"/><stop offset="0.489" stop-color="#00ffa3"/><stop offset="0.560" stop-color="#00ff99"/><stop offset="0.631" stop-color="#00ff8d"/><stop offset="0.702" stop-color="#00ff7e"/><stop offset="0.772" stop-color="#00ff67"/><stop offset="0.843" stop-color="#00ff3f"/><stop offset="0.914" stop-color="#48ff00"/><stop offset="0.985" stop-color="#71ff00"/><stop offset="1.000" stop-color="#76ff00"/></linearGradient><linearGradient id="s26" gradientUnits="userSpaceOnUse" x1="524" x2="1101" y1="0" y2="0"><stop offset="0.000" stop-color="#00ffc7"/><stop offset="0.062" stop-color="#00ffc4"/><stop offset="0.132" stop-color="#00ffc0"/><stop offset="0.201" stop-color="#00ffbc"/><stop offset="0.270" stop-color="#00ffb8"/><stop offset="0.340" stop-color="#00ffb2"/><stop offset="0.409" stop-color="#00ffac"/><stop offset="0.478" stop-color="#00ffa4"/><stop offset="0.548" stop-color="#00ff9b"/><stop offset="0.617" stop-color="#00ff8f"/><stop offset="0.686" stop-color="#00ff7f"/><stop offset="0.756" stop-color="#00ff68"/><stop offset="0.825" stop-color="#00ff40"/><stop offset="0.894" stop-color="#48ff00"/><stop offset="0.964" stop-color="#73ff00"/><stop offset="1.000" stop-color="#81ff00"/></linearGradient><linearGradient id="s27" gradientUnits="userSpaceOnUse" x1="524" x2="1113" y1="0" y2="0"><stop offset="0.000" stop-color="#00ffc8"/><stop offset="0.061" stop-color="#00ffc5"/><stop offset="0.129" stop-color="#00ffc1"/><stop offset="0.197" stop-color="#00ffbd"/><stop offset="0.265" stop-color="#00ffb9"/><stop offset="0.333" stop-color="#00ffb3"/><stop offset="0.400" stop-color="#00ffad"/><stop offset="0.468" stop-color="#00ffa5"/><stop offset="0.536" stop-color="#00ff9c"/><stop offset="0.604" stop-color="#00ff90"/><stop offset="0.672" stop-color="#00ff80"/><stop offset="0.740" stop-color="#00ff69"/><stop offset="0.808" stop-color="#00ff41"/><stop offset="0.875" stop-color="#48ff00"/><stop offset="0.943" stop-color="#74ff00"/><stop offset="1.000" stop-color="#8aff00"/></linearGradient><linearGradient id="s28" gradientUnits="userSpaceOnUse" x1="524" x2="1126" y1="0" y2="0"><stop offset="0.000" stop-color="#00ffc8"/><stop offset="0.060" stop-color="#00ffc6"/><stop offset="0.127" stop-color="#00ffc2"/><stop offset="0.193" stop-color="#00ffbe"/><stop offset="0.259" stop-color="#00ffba"/><stop offset="0.326" stop-color="#00ffb4"/><stop offset="0.392" stop-color="#00ffae"/><stop offset="0.459" stop-color="#00ffa6"/><stop offset="0.525" stop-color="#00ff9d"/><stop offset="0.591" stop-color="#00ff91"/><stop offset="0.658" stop-color="#00ff81"/><stop offset="0.724" stop-color="#00ff6b"/><stop offset="0.791" stop-color="#00ff43"/><stop offset="0.857" stop-color="#48ff00"/><stop offset="0.924" stop-color="#74ff00"/><stop offset="0.990" stop-color="#91ff00"/><stop offset="1.000" stop-color="#94ff00"/></linearGradient><linearGradient id="s29" gradientUnits="userSpaceOnUse" x1="524" x2="1139" y1="0" y2="0"><stop offset="0.000" stop-color="#00ffc9"/><stop offset="0.059" stop-color="#00ffc7"/><stop offset="0.124" stop-color="#00ffc3"/><stop offset="0.189" stop-color="#00ffbf"/><stop offset="0.254" stop-color="#00ffbb"/><stop offset="0.319" stop-color="#00ffb5"/><stop offset="0.384" stop-color="#00ffaf"/><stop offset="0.449" stop-color="#00ffa7"/><stop offset="0.514" stop-color="#00ff9e"/><stop offset="0.579" stop-color="#00ff92"/><stop offset="0.644" stop-color="#00ff83"/><stop offset="0.710" stop-color="#00ff6c"/><stop offset="0.775" stop-color="#00ff44"/><stop offset="0.840" stop-color="#48ff00"/><stop offset="0.905" stop-color="#75ff00"/><stop offset="0.970" stop-color="#94ff00"/><stop offset="1.000" stop-color="#9dff00"/></linearGradient><linearGradient id="s30" gradientUnits="userSpaceOnUse" x1="524" x2="1151" y1="0" y2="0"><stop offset="0.000" stop-color="#00ffca"/><stop offset="0.058" stop-color="#00ffc8"/><stop offset="0.121" stop-color="#00ffc4"/><stop offset="0.185" stop-color="#00ffc0"/><stop offset="0.249" stop-color="#00ffbc"/><stop offset="0.313" stop-color="#00ffb6"/><stop offset="0.377" stop-color="#00ffb0"/><stop offset="0.440" stop-color="#00ffa9"/><stop offset="0.504" stop-color="#00ff9f"/><stop offset="0.568" stop-color="#00ff94"/><stop offset="0.632" stop-color="#00ff84"/><stop offset="0.696" stop-color="#00ff6d"/><stop offset="0.759" stop-color="#00ff46"/><stop offset="0.823" stop-color="#47ff00"/><stop offset="0.887" stop-color="#76ff00"/><stop offset="0.951" stop-color="#95ff00"/><stop offset="1.000" stop-color="#a6ff00"/></linearGradient><linearGradient id="s31" gradientUnits="userSpaceOnUse" x1="524" x2="1163" y1="0" y2="0"><stop offset="0.000" stop-color="#00ffcb"/><stop offset="0.056" stop-color="#00ffc9"/><stop offset="0.119" stop-color="#00ffc5"/><stop offset="0.182" stop-color="#00ffc1"/><stop offset="0.244" stop-color="#00ffbd"/><stop offset="0.307" stop-color="#00ffb8"/><stop offset="0.370" stop-color="#00ffb1"/><stop offset="0.432" stop-color="#00ffaa"/><stop offset="0.495" stop-color="#00ffa1"/><stop offset="0.557" stop-color="#00ff95"/><stop offset="0.620" stop-color="#00ff85"/><stop offset="0.683" stop-color="#00ff6f"/><stop offset="0.745" stop-color="#00ff47"/><stop offset="0.808" stop-color="#47ff00"/><stop offset="0.871" stop-color="#77ff00"/><stop offset="0.933" stop-color="#96ff00"/><stop offset="1.000" stop-color="#aeff00"/></linearGradient><linearGradient id="s32" gradientUnits="userSpaceOnUse" x1="524" x2="1174" y1="0" y2="0"><stop offset="0.000" stop-color="#00ffcc"/><stop offset="0.055" stop-color="#00ffca"/><stop offset="0.117" stop-color="#00ffc6"/><stop offset="0.178" stop-color="#00ffc2"/><stop offset="0.240" stop-color="#00ffbe"/><stop offset="0.301" stop-color="#00ffb9"/><stop offset="0.363" stop-color="#00ffb2"/><stop offset="0.424" stop-color="#00ffab"/><stop offset="0.486" stop-color="#00ffa2"/><stop offset="0.547" stop-color="#00ff96"/><stop offset="0.609" stop-color="#00ff87"/><stop offset="0.670" stop-color="#00ff70"/><stop offset="0.732" stop-color="#00ff49"/><stop offset="0.793" stop-color="#47ff00"/><stop offset="0.855" stop-color="#78ff00"/><stop offset="0.916" stop-color="#97ff00"/><stop offset="0.978" stop-color="#b0ff00"/><stop offset="1.000" stop-color="#b7ff00"/></linearGradient><linearGradient id="s33" gradientUnits="userSpaceOnUse" x1="524" x2="1186" y1="0" y2="0"><stop offset="0.000" stop-color="#00ffcd"/><stop offset="0.054" stop-color="#00ffcb"/><stop offset="0.115" stop-color="#00ffc7"/><stop offset="0.175" stop-color="#00ffc3"/><stop offset="0.235" stop-color="#00ffbf"/><stop offset="0.296" stop-color="#00ffba"/><stop offset="0.356" stop-color="#00ffb4"/><stop offset="0.417" stop-color="#00ffac"/><stop offset="0.477" stop-color="#00ffa3"/><stop offset="0.537" stop-color="#00ff98"/><stop offset="0.598" stop-color="#00ff88"/><stop offset="0.658" stop-color="#00ff72"/><stop offset="0.719" stop-color="#00ff4b"/><stop offset="0.779" stop-color="#47ff00"/><stop offset="0.840" stop-color="#78ff00"/><stop offset="0.900" stop-color="#99ff00"/><stop offset="0.960" stop-color="#b2ff00"/><stop offset="1.000" stop-color="#bfff00"/></linearGradient><linearGradient id="s34" gradientUnits="userSpaceOnUse" x1="524" x2="1198" y1="0" y2="0"><stop offset="0.000" stop-color="#00ffce"/><stop offset="0.053" stop-color="#00ffcc"/><stop offset="0.112" stop-color="#00ffc8"/><stop offset="0.172" stop-color="#00ffc4"/><stop offset="0.231" stop-color="#00ffc0"/><stop offset="0.291" stop-color="#00ffbb"/><stop offset="0.350" stop-color="#00ffb5"/><stop offset="0.409" stop-color="#00ffae"/><stop offset="0.469" stop-color="#00ffa4"/><stop offset="0.528" stop-color="#00ff99"/><stop offset="0.587" stop-color="#00ff8a"/><stop offset="0.647" stop-color="#00ff73"/><stop offset="0.706" stop-color="#00ff4c"/><stop offset="0.766" stop-color="#47ff00"/><stop offset="0.825" stop-color="#79ff00"/><stop offset="0.884" stop-color="#9aff00"/><stop offset="0.944" stop-color="#b4ff00"/><stop offset="1.000" stop-color="#c8ff00"/></linearGradient><linearGradient id="s35" gradientUnits="userSpaceOnUse" x1="524" x2="1210" y1="0" y2="0"><stop offset="0.000" stop-color="#00ffcf"/><stop offset="0.052" stop-color="#00ffcd"/><stop offset="0.110" stop-color="#00ffc9"/><stop offset="0.169" stop-color="#00ffc6"/><stop offset="0.227" stop-color="#00ffc1"/><stop offset="0.285" stop-color="#00ffbc"/><stop offset="0.344" stop-color="#00ffb6"/><stop offset="0.402" stop-color="#00ffaf"/><stop offset="0.461" stop-color="#00ffa6"/><stop offset="0.519" stop-color="#00ff9a"/><stop offset="0.577" stop-color="#00ff8b"/><stop offset="0.636" stop-color="#00ff75"/><stop offset="0.694" stop-color="#00ff4e"/><stop offset="0.752" stop-color="#47ff00"/><stop offset="0.811" stop-color="#7aff00"/><stop offset="0.869" stop-color="#9cff00"/><stop offset="0.927" stop-color="#b6ff00"/><stop offset="0.986" stop-color="#ccff00"/><stop offset="1.000" stop-color="#d0ff00"/></linearGradient><linearGradient id="s36" gradientUnits="userSpaceOnUse" x1="524" x2="1222" y1="0" y2="0"><stop offset="0.000" stop-color="#00ffd0"/><stop offset="0.051" stop-color="#00ffce"/><stop offset="0.108" stop-color="#00ffca"/><stop offset="0.166" stop-color="#00ffc7"/><stop offset="0.223" stop-color="#00ffc2"/><stop offset="0.281" stop-color="#00ffbd"/><stop offset="0.338" stop-color="#00ffb7"/><stop offset="0.395" stop-color="#00ffb0"/><stop offset="0.453" stop-color="#00ffa7"/><stop offset="0.510" stop-color="#00ff9c"/><stop offset="0.567" stop-color="#00ff8c"/><stop offset="0.625" stop-color="#00ff76"/><stop offset="0.682" stop-color="#00ff50"/><stop offset="0.740" stop-color="#49ff16"/><stop offset="0.797" stop-color="#7bff00"/><stop offset="0.854" stop-color="#9dff00"/><stop offset="0.912" stop-color="#b8ff00"/><stop offset="0.969" stop-color="#cfff00"/><stop offset="1.000" stop-color="#d8ff00"/></linearGradient><linearGradient id="s37" gradientUnits="userSpaceOnUse" x1="525" x2="1233" y1="0" y2="0"><stop offset="0.000" stop-color="#00ffd1"/><stop offset="0.050" stop-color="#00ffcf"/><stop offset="0.106" stop-color="#00ffcb"/><stop offset="0.163" stop-color="#00ffc8"/><stop offset="0.219" stop-color="#00ffc3"/><stop offset="0.276" stop-color="#00ffbf"/><stop offset="0.332" stop-color="#00ffb9"/><stop offset="0.388" stop-color="#00ffb1"/><stop offset="0.445" stop-color="#00ffa9"/><stop offset="0.501" stop-color="#00ff9d"/><stop offset="0.558" stop-color="#00ff8e"/><stop offset="0.614" stop-color="#00ff78"/><stop offset="0.671" stop-color="#00ff51"/><stop offset="0.727" stop-color="#4eff27"/><stop offset="0.784" stop-color="#7cff00"/><stop offset="0.840" stop-color="#9fff00"/><stop offset="0.897" stop-color="#baff00"/><stop offset="0.953" stop-color="#d1ff00"/><stop offset="1.000" stop-color="#e1ff00"/></linearGradient><linearGradient id="s38" gradientUnits="userSpaceOnUse" x1="525" x2="1245" y1="0" y2="0"><stop offset="0.000" stop-color="#00ffd2"/><stop offset="0.048" stop-color="#00ffd0"/><stop offset="0.104" stop-color="#00ffcc"/><stop offset="0.159" stop-color="#00ffc9"/><stop offset="0.215" stop-color="#00ffc5"/><stop offset="0.271" stop-color="#00ffc0"/><stop offset="0.326" stop-color="#00ffba"/><stop offset="0.382" stop-color="#00ffb3"/><stop offset="0.437" stop-color="#00ffaa"/><stop offset="0.493" stop-color="#00ff9f"/><stop offset="0.548" stop-color="#00ff90"/><stop offset="0.604" stop-color="#00ff7a"/><stop offset="0.660" stop-color="#00ff53"/><stop offset="0.715" stop-color="#53ff32"/><stop offset="0.771" stop-color="#7dff00"/><stop offset="0.826" stop-color="#a0ff00"/><stop offset="0.882" stop-color="#bcff00"/><stop offset="0.937" stop-color="#d4ff00"/><stop offset="1.000" stop-color="#e9ff00"/></linearGradient><linearGradient id="s39" gradientUnits="userSpaceOnUse" x1="526" x2="1257" y1="0" y2="0"><stop offset="0.000" stop-color="#00ffd3"/><stop offset="0.047" stop-color="#00ffd1"/><stop offset="0.102" stop-color="#00ffce"/><stop offset="0.156" stop-color="#00ffca"/><stop offset="0.211" stop-color="#00ffc6"/><stop offset="0.266" stop-color="#00ffc1"/><stop offset="0.321" stop-color="#00ffbb"/><stop offset="0.375" stop-color="#00ffb4"/><stop offset="0.430" stop-color="#00ffac"/><stop offset="0.485" stop-color="#00ffa0"/><stop offset="0.539" stop-color="#00ff91"/><stop offset="0.594" stop-color="#00ff7b"/><stop offset="0.649" stop-color="#00ff55"/><stop offset="0.704" stop-color="#58ff3b"/><stop offset="0.758" stop-color="#80ff1e"/><stop offset="0.813" stop-color="#a2ff00"/><stop offset="0.868" stop-color="#beff00"/><stop offset="0.922" stop-color="#d6ff00"/><stop offset="0.977" stop-color="#ebff00"/><stop offset="1.000" stop-color="#f2ff00"/></linearGradient><linearGradient id="s40" gradientUnits="userSpaceOnUse" x1="526" x2="1269" y1="0" y2="0"><stop offset="0.000" stop-color="#00ffd4"/><stop offset="0.046" stop-color="#00ffd2"/><stop offset="0.100" stop-color="#00ffcf"/><stop offset="0.154" stop-color="#00ffcb"/><stop offset="0.207" stop-color="#00ffc7"/><stop offset="0.261" stop-color="#00ffc2"/><stop offset="0.315" stop-color="#00ffbd"/><stop offset="0.369" stop-color="#00ffb6"/><stop offset="0.423" stop-color="#00ffad"/><stop offset="0.477" stop-color="#00ffa2"/><stop offset="0.531" stop-color="#00ff93"/><stop offset="0.584" stop-color="#00ff7d"/><stop offset="0.638" stop-color="#00ff57"/><stop offset="0.692" stop-color="#5cff43"/><stop offset="0.746" stop-color="#84ff2c"/><stop offset="0.800" stop-color="#a4ff00"/><stop offset="0.854" stop-color="#c0ff00"/><stop offset="0.908" stop-color="#d9ff00"/><stop offset="0.962" stop-color="#eeff00"/><stop offset="1.000" stop-color="#fbff00"/></linearGradient><linearGradient id="s41" gradientUnits="userSpaceOnUse" x1="526" x2="1280" y1="0" y2="0"><stop offset="0.000" stop-color="#00ffd5"/><stop offset="0.045" stop-color="#00ffd3"/><stop offset="0.098" stop-color="#00ffd0"/><stop offset="0.151" stop-color="#00ffcc"/><stop offset="0.204" stop-color="#00ffc8"/><stop offset="0.257" stop-color="#00ffc4"/><stop offset="0.310" stop-color="#00ffbe"/><stop offset="0.363" stop-color="#00ffb7"/><stop offset="0.416" stop-color="#00ffaf"/><stop offset="0.469" stop-color="#00ffa4"/><stop offset="0.522" stop-color="#00ff95"/><stop offset="0.575" stop-color="#00ff7f"/><stop offset="0.628" stop-color="#00ff59"/><stop offset="0.681" stop-color="#61ff4a"/><stop offset="0.734" stop-color="#88ff37"/><stop offset="0.787" stop-color="#a6ff07"/><stop offset="0.840" stop-color="#c3ff00"/><stop offset="0.893" stop-color="#dcff00"/><stop offset="0.947" stop-color="#f1ff00"/><stop offset="1.000" stop-color="#fffa00"/></linearGradient><linearGradient id="s42" gradientUnits="userSpaceOnUse" x1="527" x2="1292" y1="0" y2="0"><stop offset="0.000" stop-color="#00ffd6"/><stop offset="0.043" stop-color="#00ffd4"/><stop offset="0.096" stop-color="#00ffd1"/><stop offset="0.148" stop-color="#00ffce"/><stop offset="0.200" stop-color="#00ffca"/><stop offset="0.252" stop-color="#00ffc5"/><stop offset="0.305" stop-color="#00ffbf"/><stop offset="0.357" stop-color="#00ffb9"/><stop offset="0.409" stop-color="#00ffb0"/><stop offset="0.462" stop-color="#00ffa5"/><stop offset="0.514" stop-color="#00ff96"/><stop offset="0.566" stop-color="#00ff81"/><stop offset="0.618" stop-color="#1aff5d"/><stop offset="0.671" stop-color="#65ff50"/><stop offset="0.723" stop-color="#8bff40"/><stop offset="0.775" stop-color="#a9ff24"/><stop offset="0.827" stop-color="#c5ff00"/><stop offset="0.880" stop-color="#deff00"/><stop offset="0.932" stop-color="#f5ff00"/><stop offset="0.984" stop-color="#fff600"/><stop offset="1.000" stop-color="#fff100"/></linearGradient><linearGradient id="s43" gradientUnits="userSpaceOnUse" x1="527" x2="1304" y1="0" y2="0"><stop offset="0.000" stop-color="#00ffd7"/><stop offset="0.042" stop-color="#00ffd5"/><stop offset="0.094" stop-color="#00ffd2"/><stop offset="0.145" stop-color="#00ffcf"/><stop offset="0.197" stop-color="#00ffcb"/><stop offset="0.248" stop-color="#00ffc6"/><stop offset="0.300" stop-color="#00ffc1"/><stop offset="0.351" stop-color="#00ffba"/><stop offset="0.403" stop-color="#00ffb2"/><stop offset="0.454" stop-color="#00ffa7"/><stop offset="0.506" stop-color="#00ff98"/><stop offset="0.557" stop-color="#00ff83"/><stop offset="0.609" stop-color="#28ff62"/><stop offset="0.660" stop-color="#6aff57"/><stop offset="0.712" stop-color="#8fff48"/><stop offset="0.763" stop-color="#adff32"/><stop offset="0.815" stop-color="#c8ff00"/><stop offset="0.866" stop-color="#e2ff00"/><stop offset="0.918" stop-color="#f8ff00"/><stop offset="0.969" stop-color="#fff200"/><stop offset="1.000" stop-color="#ffe900"/></linearGradient><linearGradient id="s44" gradientUnits="userSpaceOnUse" x1="528" x2="1316" y1="0" y2="0"><stop offset="0.000" stop-color="#00ffd8"/><stop offset="0.040" stop-color="#00ffd6"/><stop offset="0.091" stop-color="#00ffd3"/><stop offset="0.142" stop-color="#00ffd0"/><stop offset="0.193" stop-color="#00ffcc"/><stop offset="0.244" stop-color="#00ffc8"/><stop offset="0.294" stop-color="#00ffc2"/><stop offset="0.345" stop-color="#00ffbc"/><stop offset="0.396" stop-color="#00ffb3"/><stop offset="0.447" stop-color="#00ffa9"/><stop offset="0.498" stop-color="#00ff9a"/><stop offset="0.548" stop-color="#00ff84"/><stop offset="0.599" stop-color="#32ff67"/><stop offset="0.650" stop-color="#6eff5d"/><stop offset="0.701" stop-color="#93ff4f"/><stop offset="0.752" stop-color="#b1ff3c"/><stop offset="0.802" stop-color="#cbff16"/><stop offset="0.853" stop-color="#e5ff00"/><stop offset="0.904" stop-color="#fcff00"/><stop offset="0.955" stop-color="#ffef00"/><stop offset="1.000" stop-color="#ffe100"/></linearGradient><linearGradient id="s45" gradientUnits="userSpaceOnUse" x1="529" x2="1327" y1="0" y2="0"><stop offset="0.000" stop-color="#00ffd9"/><stop offset="0.039" stop-color="#00ffd7"/><stop offset="0.089" stop-color="#00ffd4"/><stop offset="0.139" stop-color="#00ffd1"/><stop offset="0.189" stop-color="#00ffcd"/><stop offset="0.239" stop-color="#00ffc9"/><stop offset="0.289" stop-color="#00ffc4"/><stop offset="0.339" stop-color="#00ffbd"/><stop offset="0.390" stop-color="#00ffb5"/><stop offset="0.440" stop-color="#00ffab"/><stop offset="0.490" stop-color="#00ff9c"/><stop offset="0.540" stop-color="#00ff86"/><stop offset="0.590" stop-color="#3aff6c"/><stop offset="0.640" stop-color="#72ff62"/><stop offset="0.690" stop-color="#96ff56"/><stop offset="0.740" stop-color="#b4ff45"/><stop offset="0.790" stop-color="#cfff2b"/><stop offset="0.840" stop-color="#e8ff00"/><stop offset="0.891" stop-color="#ffff00"/><stop offset="0.941" stop-color="#ffeb00"/><stop offset="0.991" stop-color="#ffdc00"/><stop offset="1.000" stop-color="#ffda00"/></linearGradient><linearGradient id="s46" gradientUnits="userSpaceOnUse" x1="530" x2="1339" y1="0" y2="0"><stop offset="0.000" stop-color="#00ffda"/><stop offset="0.037" stop-color="#00ffd8"/><stop offset="0.087" stop-color="#00ffd6"/><stop offset="0.136" stop-color="#00ffd3"/><stop offset="0.186" stop-color="#00ffcf"/><stop offset="0.235" stop-color="#00ffcb"/><stop offset="0.284" stop-color="#00ffc5"/><stop offset="0.334" stop-color="#00ffbf"/><stop offset="0.383" stop-color="#00ffb7"/><stop offset="0.433" stop-color="#00ffac"/><stop offset="0.482" stop-color="#00ff9e"/><stop offset="0.532" stop-color="#00ff89"/><stop offset="0.581" stop-color="#41ff71"/><stop offset="0.630" stop-color="#76ff68"/><stop offset="0.680" stop-color="#9aff5c"/><stop offset="0.729" stop-color="#b8ff4d"/><stop offset="0.779" stop-color="#d3ff37"/><stop offset="0.828" stop-color="#ecff00"/><stop offset="0.878" stop-color="#fffb00"/><stop offset="0.927" stop-color="#ffe800"/><stop offset="0.976" stop-color="#ffd800"/><stop offset="1.000" stop-color="#ffd200"/></linearGradient><linearGradient id="s47" gradientUnits="userSpaceOnUse" x1="531" x2="1351" y1="0" y2="0"><stop offset="0.000" stop-color="#00ffdb"/><stop offset="0.036" stop-color="#00ffda"/><stop offset="0.085" stop-color="#00ffd7"/><stop offset="0.133" stop-color="#00ffd4"/><stop offset="0.182" stop-color="#00ffd0"/><stop offset="0.231" stop-color="#00ffcc"/><stop offset="0.280" stop-color="#00ffc7"/><stop offset="0.328" stop-color="#00ffc1"/><stop offset="0.377" stop-color="#00ffb9"/><stop offset="0.426" stop-color="#00ffae"/><stop offset="0.475" stop-color="#00ffa0"/><stop offset="0.523" stop-color="#00ff8b"/><stop offset="0.572" stop-color="#48ff76"/><stop offset="0.621" stop-color="#7bff6d"/><stop offset="0.670" stop-color="#9eff62"/><stop offset="0.719" stop-color="#bcff55"/><stop offset="0.767" stop-color="#d7ff42"/><stop offset="0.816" stop-color="#f0ff20"/><stop offset="0.865" stop-color="#fff600"/><stop offset="0.914" stop-color="#ffe400"/><stop offset="0.962" stop-color="#ffd500"/><stop offset="1.000" stop-color="#ffcb00"/></linearGradient><linearGradient id="s48" gradientUnits="userSpaceOnUse" x1="531" x2="1363" y1="0" y2="0"><stop offset="0.000" stop-color="#00ffdc"/><stop offset="0.034" stop-color="#00ffdb"/><stop offset="0.083" stop-color="#00ffd8"/><stop offset="0.131" stop-color="#00ffd5"/><stop offset="0.179" stop-color="#00ffd2"/><stop offset="0.227" stop-color="#00ffcd"/><stop offset="0.275" stop-color="#00ffc8"/><stop offset="0.323" stop-color="#00ffc2"/><stop offset="0.371" stop-color="#00ffba"/><stop offset="0.419" stop-color="#00ffb0"/><stop offset="0.468" stop-color="#00ffa2"/><stop offset="0.516" stop-color="#00ff8d"/><stop offset="0.564" stop-color="#4eff7b"/><stop offset="0.612" stop-color="#7fff72"/><stop offset="0.660" stop-color="#a2ff68"/><stop offset="0.708" stop-color="#c0ff5c"/><stop offset="0.756" stop-color="#dbff4b"/><stop offset="0.804" stop-color="#f4ff31"/><stop offset="0.852" stop-color="#fff200"/><stop offset="0.901" stop-color="#ffe000"/><stop offset="0.949" stop-color="#ffd100"/><stop offset="1.000" stop-color="#ffc400"/></linearGradient><linearGradient id="s49" gradientUnits="userSpaceOnUse" x1="532" x2="1374" y1="0" y2="0"><stop offset="0.000" stop-color="#00ffdd"/><stop offset="0.033" stop-color="#00ffdc"/><stop offset="0.080" stop-color="#00ffd9"/><stop offset="0.128" stop-color="#00ffd6"/><stop offset="0.175" stop-color="#00ffd3"/><stop offset="0.223" stop-color="#00ffcf"/><stop offset="0.270" stop-color="#00ffca"/><stop offset="0.318" stop-color="#00ffc4"/><stop offset="0.365" stop-color="#00ffbc"/><stop offset="0.413" stop-color="#00ffb2"/><stop offset="0.460" stop-color="#00ffa4"/><stop offset="0.508" stop-color="#00ff8f"/><stop offset="0.556" stop-color="#54ff80"/><stop offset="0.603" stop-color="#83ff78"/><stop offset="0.651" stop-color="#a6ff6e"/><stop offset="0.698" stop-color="#c4ff62"/><stop offset="0.746" stop-color="#dfff53"/><stop offset="0.793" stop-color="#f8ff3e"/><stop offset="0.841" stop-color="#ffee00"/><stop offset="0.888" stop-color="#ffdc00"/><stop offset="0.936" stop-color="#ffcd00"/><stop offset="0.983" stop-color="#ffc200"/><stop offset="1.000" stop-color="#ffbe00"/></linearGradient><linearGradient id="s50" gradientUnits="userSpaceOnUse" x1="534" x2="1386" y1="0" y2="0"><stop offset="0.000" stop-color="#00ffdf"/><stop offset="0.031" stop-color="#00ffdd"/><stop offset="0.078" stop-color="#00ffdb"/><stop offset="0.125" stop-color="#00ffd8"/><stop offset="0.172" stop-color="#00ffd5"/><stop offset="0.219" stop-color="#00ffd1"/><stop offset="0.266" stop-color="#00ffcc"/><stop offset="0.313" stop-color="#00ffc6"/><stop offset="0.360" stop-color="#00ffbe"/><stop offset="0.406" stop-color="#00ffb4"/><stop offset="0.453" stop-color="#00ffa7"/><stop offset="0.500" stop-color="#00ff92"/><stop offset="0.547" stop-color="#59ff85"/><stop offset="0.594" stop-color="#87ff7d"/><stop offset="0.641" stop-color="#aaff74"/><stop offset="0.688" stop-color="#c8ff69"/><stop offset="0.735" stop-color="#e3ff5b"/><stop offset="0.782" stop-color="#fdff48"/><stop offset="0.829" stop-color="#ffea25"/><stop offset="0.876" stop-color="#ffd800"/><stop offset="0.923" stop-color="#ffca00"/><stop offset="0.970" stop-color="#ffbe00"/><stop offset="1.000" stop-color="#ffb700"/></linearGradient><linearGradient id="s51" gradientUnits="userSpaceOnUse" x1="535" x2="1397" y1="0" y2="0"><stop offset="0.000" stop-color="#00ffe0"/><stop offset="0.029" stop-color="#00ffde"/><stop offset="0.075" stop-color="#00ffdc"/><stop offset="0.122" stop-color="#00ffd9"/><stop offset="0.168" stop-color="#00ffd6"/><stop offset="0.215" stop-color="#00ffd2"/><stop offset="0.261" stop-color="#00ffcd"/><stop offset="0.307" stop-color="#00ffc8"/><stop offset="0.354" stop-color="#00ffc0"/><stop offset="0.400" stop-color="#00ffb6"/><stop offset="0.446" stop-color="#00ffa9"/><stop offset="0.493" stop-color="#00ff94"/><stop offset="0.539" stop-color="#5fff89"/><stop offset="0.586" stop-color="#8cff82"/><stop offset="0.632" stop-color="#aeff79"/><stop offset="0.678" stop-color="#ccff6f"/><stop offset="0.725" stop-color="#e7ff62"/><stop offset="0.771" stop-color="#fffd51"/><stop offset="0.818" stop-color="#ffe633"/><stop offset="0.864" stop-color="#ffd300"/><stop offset="0.910" stop-color="#ffc600"/><stop offset="0.957" stop-color="#ffba00"/><stop offset="1.000" stop-color="#ffb100"/></linearGradient><linearGradient id="s52" gradientUnits="userSpaceOnUse" x1="536" x2="1409" y1="0" y2="0"><stop offset="0.000" stop-color="#00ffe1"/><stop offset="0.027" stop-color="#00ffe0"/><stop offset="0.073" stop-color="#00ffdd"/><stop offset="0.119" stop-color="#00ffdb"/><stop offset="0.165" stop-color="#00ffd8"/><stop offset="0.211" stop-color="#00ffd4"/><stop offset="0.256" stop-color="#00ffcf"/><stop offset="0.302" stop-color="#00ffca"/><stop offset="0.348" stop-color="#00ffc2"/><stop offset="0.394" stop-color="#00ffb9"/><stop offset="0.440" stop-color="#00ffab"/><stop offset="0.486" stop-color="#00ff97"/><stop offset="0.531" stop-color="#64ff8e"/><stop offset="0.577" stop-color="#90ff87"/><stop offset="0.623" stop-color="#b2ff7f"/><stop offset="0.669" stop-color="#d0ff75"/><stop offset="0.715" stop-color="#ecff69"/><stop offset="0.761" stop-color="#fff858"/><stop offset="0.806" stop-color="#ffe23d"/><stop offset="0.852" stop-color="#ffcf13"/><stop offset="0.898" stop-color="#ffc100"/><stop offset="0.944" stop-color="#ffb600"/><stop offset="0.990" stop-color="#ffad00"/><stop offset="1.000" stop-color="#ffaa00"/></linearGradient><linearGradient id="s53" gradientUnits="userSpaceOnUse" x1="538" x2="1421" y1="0" y2="0"><stop offset="0.000" stop-color="#00ffe2"/><stop offset="0.025" stop-color="#00ffe1"/><stop offset="0.071" stop-color="#00ffdf"/><stop offset="0.116" stop-color="#00ffdc"/><stop offset="0.161" stop-color="#00ffd9"/><stop offset="0.207" stop-color="#00ffd5"/><stop offset="0.252" stop-color="#00ffd1"/><stop offset="0.297" stop-color="#00ffcb"/><stop offset="0.343" stop-color="#00ffc4"/><stop offset="0.388" stop-color="#00ffbb"/><stop offset="0.433" stop-color="#00ffae"/><stop offset="0.478" stop-color="#00ff9a"/><stop offset="0.524" stop-color="#69ff93"/><stop offset="0.569" stop-color="#94ff8c"/><stop offset="0.614" stop-color="#b6ff84"/><stop offset="0.660" stop-color="#d4ff7b"/><stop offset="0.705" stop-color="#f0ff70"/><stop offset="0.750" stop-color="#fff45e"/><stop offset="0.796" stop-color="#ffde45"/><stop offset="0.841" stop-color="#ffcc26"/><stop offset="0.886" stop-color="#ffbd00"/><stop offset="0.931" stop-color="#ffb200"/><stop offset="0.977" stop-color="#ffa900"/><stop offset="1.000" stop-color="#ffa400"/></linearGradient><linearGradient id="s54" gradientUnits="userSpaceOnUse" x1="539" x2="1432" y1="0" y2="0"><stop offset="0.000" stop-color="#00ffe3"/><stop offset="0.024" stop-color="#00ffe2"/><stop offset="0.068" stop-color="#00ffe0"/><stop offset="0.113" stop-color="#00ffde"/><stop offset="0.158" stop-color="#00ffdb"/><stop offset="0.203" stop-color="#00ffd7"/><stop offset="0.248" stop-color="#00ffd3"/><stop offset="0.292" stop-color="#00ffcd"/><stop offset="0.337" stop-color="#00ffc7"/><stop offset="0.382" stop-color="#00ffbd"/><stop offset="0.427" stop-color="#00ffb0"/><stop offset="0.471" stop-color="#18ff9d"/><stop offset="0.516" stop-color="#6eff98"/><stop offset="0.561" stop-color="#98ff91"/><stop offset="0.606" stop-color="#baff8a"/><stop offset="0.651" stop-color="#d9ff81"/><stop offset="0.695" stop-color="#f5ff77"/><stop offset="0.740" stop-color="#ffef63"/><stop offset="0.785" stop-color="#ffda4c"/><stop offset="0.830" stop-color="#ffc832"/><stop offset="0.874" stop-color="#ffb900"/><stop offset="0.919" stop-color="#ffae00"/><stop offset="0.964" stop-color="#ffa500"/><stop offset="1.000" stop-color="#ff9e00"/></linearGradient><linearGradient id="s55" gradientUnits="userSpaceOnUse" x1="540" x2="1444" y1="0" y2="0"><stop offset="0.000" stop-color="#00ffe4"/><stop offset="0.022" stop-color="#00ffe4"/><stop offset="0.066" stop-color="#00ffe1"/><stop offset="0.110" stop-color="#00ffdf"/><stop offset="0.155" stop-color="#00ffdc"/><stop offset="0.199" stop-color="#00ffd9"/><stop offset="0.243" stop-color="#00ffd5"/><stop offset="0.288" stop-color="#00ffcf"/><stop offset="0.332" stop-color="#00ffc9"/><stop offset="0.376" stop-color="#00ffc0"/><stop offset="0.420" stop-color="#00ffb3"/><stop offset="0.465" stop-color="#29ffa2"/><stop offset="0.509" stop-color="#73ff9c"/><stop offset="0.553" stop-color="#9dff96"/><stop offset="0.597" stop-color="#bfff8f"/><stop offset="0.642" stop-color="#ddff87"/><stop offset="0.686" stop-color="#faff7d"/><stop offset="0.730" stop-color="#ffeb68"/><stop offset="0.775" stop-color="#ffd652"/><stop offset="0.819" stop-color="#ffc43b"/><stop offset="0.863" stop-color="#ffb519"/><stop offset="0.907" stop-color="#ffaa00"/><stop offset="0.952" stop-color="#ffa100"/><stop offset="1.000" stop-color="#ff9800"/></linearGradient><linearGradient id="s56" gradientUnits="userSpaceOnUse" x1="542" x2="1455" y1="0" y2="0"><stop offset="0.000" stop-color="#00ffe6"/><stop offset="0.020" stop-color="#00ffe5"/><stop offset="0.064" stop-color="#00ffe3"/><stop offset="0.108" stop-color="#00ffe1"/><stop offset="0.152" stop-color="#00ffde"/><stop offset="0.195" stop-color="#00ffdb"/><stop offset="0.239" stop-color="#00ffd7"/><stop offset="0.283" stop-color="#00ffd2"/><stop offset="0.327" stop-color="#00ffcb"/><stop offset="0.370" stop-color="#00ffc2"/><stop offset="0.414" stop-color="#00ffb6"/><stop offset="0.458" stop-color="#34ffa6"/><stop offset="0.502" stop-color="#78ffa1"/><stop offset="0.546" stop-color="#a1ff9b"/><stop offset="0.589" stop-color="#c3ff95"/><stop offset="0.633" stop-color="#e2ff8d"/><stop offset="0.677" stop-color="#ffff84"/><stop offset="0.721" stop-color="#ffe66d"/><stop offset="0.764" stop-color="#ffd258"/><stop offset="0.808" stop-color="#ffc042"/><stop offset="0.852" stop-color="#ffb128"/><stop offset="0.896" stop-color="#ffa600"/><stop offset="0.940" stop-color="#ff9d00"/><stop offset="0.983" stop-color="#ff9600"/><stop offset="1.000" stop-color="#ff9200"/></linearGradient><linearGradient id="s57" gradientUnits="userSpaceOnUse" x1="544" x2="1467" y1="0" y2="0"><stop offset="0.000" stop-color="#00ffe7"/><stop offset="0.018" stop-color="#00ffe6"/><stop offset="0.061" stop-color="#00ffe4"/><stop offset="0.105" stop-color="#00ffe2"/><stop offset="0.148" stop-color="#00ffe0"/><stop offset="0.191" stop-color="#00ffdc"/><stop offset="0.234" stop-color="#00ffd9"/><stop offset="0.278" stop-color="#00ffd4"/><stop offset="0.321" stop-color="#00ffcd"/><stop offset="0.364" stop-color="#00ffc5"/><stop offset="0.408" stop-color="#00ffb9"/><stop offset="0.451" stop-color="#3effab"/><stop offset="0.494" stop-color="#7dffa6"/><stop offset="0.538" stop-color="#a6ffa1"/><stop offset="0.581" stop-color="#c8ff9a"/><stop offset="0.624" stop-color="#e7ff93"/><stop offset="0.668" stop-color="#fffa88"/><stop offset="0.711" stop-color="#ffe271"/><stop offset="0.754" stop-color="#ffce5d"/><stop offset="0.798" stop-color="#ffbd49"/><stop offset="0.841" stop-color="#ffae32"/><stop offset="0.884" stop-color="#ffa100"/><stop offset="0.928" stop-color="#ff9900"/><stop offset="0.971" stop-color="#ff9200"/><stop offset="1.000" stop-color="#ff8c00"/></linearGradient><linearGradient id="s58" gradientUnits="userSpaceOnUse" x1="546" x2="1478" y1="0" y2="0"><stop offset="0.000" stop-color="#00ffe8"/><stop offset="0.016" stop-color="#00ffe8"/><stop offset="0.058" stop-color="#00ffe6"/><stop offset="0.101" stop-color="#00ffe4"/><stop offset="0.144" stop-color="#00ffe1"/><stop offset="0.187" stop-color="#00ffde"/><stop offset="0.230" stop-color="#00ffdb"/><stop offset="0.273" stop-color="#00ffd6"/><stop offset="0.316" stop-color="#00ffd0"/><stop offset="0.359" stop-color="#00ffc8"/><stop offset="0.401" stop-color="#00ffbc"/><stop offset="0.444" stop-color="#46ffb0"/><stop offset="0.487" stop-color="#82ffab"/><stop offset="0.530" stop-color="#aaffa6"/><stop offset="0.573" stop-color="#ccffa0"/><stop offset="0.616" stop-color="#ebff99"/><stop offset="0.659" stop-color="#fff58c"/><stop offset="0.702" stop-color="#ffdd75"/><stop offset="0.744" stop-color="#ffca62"/><stop offset="0.787" stop-color="#ffb94e"/><stop offset="0.830" stop-color="#ffaa39"/><stop offset="0.873" stop-color="#ff9d1d"/><stop offset="0.916" stop-color="#ff9400"/><stop offset="0.959" stop-color="#ff8d00"/><stop offset="1.000" stop-color="#ff8600"/></linearGradient><linearGradient id="s59" gradientUnits="userSpaceOnUse" x1="548" x2="1490" y1="0" y2="0"><stop offset="0.000" stop-color="#00ffea"/><stop offset="0.013" stop-color="#00ffe9"/><stop offset="0.056" stop-color="#00ffe7"/><stop offset="0.098" stop-color="#00ffe5"/><stop offset="0.141" stop-color="#00ffe3"/><stop offset="0.183" stop-color="#00ffe0"/><stop offset="0.225" stop-color="#00ffdd"/><stop offset="0.268" stop-color="#00ffd8"/><stop offset="0.310" stop-color="#00ffd2"/><stop offset="0.353" stop-color="#00ffca"/><stop offset="0.395" stop-color="#00ffbf"/><stop offset="0.438" stop-color="#4effb4"/><stop offset="0.480" stop-color="#87ffb0"/><stop offset="0.523" stop-color="#afffab"/><stop offset="0.565" stop-color="#d1ffa6"/><stop offset="0.607" stop-color="#f0ff9f"/><stop offset="0.650" stop-color="#fff18f"/><stop offset="0.692" stop-color="#ffd979"/><stop offset="0.735" stop-color="#ffc666"/><stop offset="0.777" stop-color="#ffb553"/><stop offset="0.820" stop-color="#ffa740"/><stop offset="0.862" stop-color="#ff9a29"/><stop offset="0.904" stop-color="#ff8f00"/><stop offset="0.947" stop-color="#ff8900"/><stop offset="0.989" stop-color="#ff8300"/><stop offset="1.000" stop-color="#ff8000"/></linearGradient><linearGradient id="s60" gradientUnits="userSpaceOnUse" x1="550" x2="1502" y1="0" y2="0"><stop offset="0.000" stop-color="#00ffeb"/><stop offset="0.011" stop-color="#00ffeb"/><stop offset="0.053" stop-color="#00ffe9"/><stop offset="0.095" stop-color="#00ffe7"/><stop offset="0.137" stop-color="#00ffe5"/><stop offset="0.179" stop-color="#00ffe2"/><stop offset="0.221" stop-color="#00ffdf"/><stop offset="0.263" stop-color="#00ffda"/><stop offset="0.305" stop-color="#00ffd5"/><stop offset="0.347" stop-color="#00ffcd"/><stop offset="0.389" stop-color="#00ffc2"/><stop offset="0.431" stop-color="#55ffb9"/><stop offset="0.473" stop-color="#8cffb5"/><stop offset="0.515" stop-color="#b4ffb0"/><stop offset="0.557" stop-color="#d6ffab"/><stop offset="0.599" stop-color="#f6ffa5"/><stop offset="0.641" stop-color="#ffec92"/><stop offset="0.683" stop-color="#ffd57d"/><stop offset="0.725" stop-color="#ffc26a"/><stop offset="0.767" stop-color="#ffb158"/><stop offset="0.809" stop-color="#ffa346"/><stop offset="0.851" stop-color="#ff9631"/><stop offset="0.893" stop-color="#ff8b0d"/><stop offset="0.935" stop-color="#ff8400"/><stop offset="0.977" stop-color="#ff7e00"/><stop offset="1.000" stop-color="#ff7b00"/></linearGradient><linearGradient id="s61" gradientUnits="userSpaceOnUse" x1="552" x2="1513" y1="0" y2="0"><stop offset="0.000" stop-color="#00ffec"/><stop offset="0.009" stop-color="#00ffec"/><stop offset="0.050" stop-color="#00ffea"/><stop offset="0.092" stop-color="#00ffe9"/><stop offset="0.134" stop-color="#00ffe7"/><stop offset="0.175" stop-color="#00ffe4"/><stop offset="0.217" stop-color="#00ffe1"/><stop offset="0.258" stop-color="#00ffdd"/><stop offset="0.300" stop-color="#00ffd8"/><stop offset="0.342" stop-color="#00ffd0"/><stop offset="0.383" stop-color="#00ffc6"/><stop offset="0.425" stop-color="#5bffbe"/><stop offset="0.466" stop-color="#91ffba"/><stop offset="0.508" stop-color="#b9ffb6"/><stop offset="0.550" stop-color="#dbffb1"/><stop offset="0.591" stop-color="#fbffab"/><stop offset="0.633" stop-color="#ffe795"/><stop offset="0.674" stop-color="#ffd080"/><stop offset="0.716" stop-color="#ffbd6e"/><stop offset="0.758" stop-color="#ffad5c"/><stop offset="0.799" stop-color="#ff9f4b"/><stop offset="0.841" stop-color="#ff9338"/><stop offset="0.882" stop-color="#ff871f"/><stop offset="0.924" stop-color="#ff7f00"/><stop offset="0.965" stop-color="#ff7a00"/><stop offset="1.000" stop-color="#ff7400"/></linearGradient><linearGradient id="s62" gradientUnits="userSpaceOnUse" x1="554" x2="1525" y1="0" y2="0"><stop offset="0.000" stop-color="#00ffee"/><stop offset="0.007" stop-color="#00ffed"/><stop offset="0.048" stop-color="#00ffec"/><stop offset="0.089" stop-color="#00ffea"/><stop offset="0.130" stop-color="#00ffe8"/><stop offset="0.171" stop-color="#00ffe6"/><stop offset="0.213" stop-color="#00ffe3"/><stop offset="0.254" stop-color="#00ffdf"/><stop offset="0.295" stop-color="#00ffda"/><stop offset="0.336" stop-color="#00ffd3"/><stop offset="0.377" stop-color="#00ffc9"/><stop offset="0.419" stop-color="#62ffc3"/><stop offset="0.460" stop-color="#96ffbf"/><stop offset="0.501" stop-color="#beffbb"/><stop offset="0.542" stop-color="#e0ffb7"/><stop offset="0.583" stop-color="#fffdb1"/><stop offset="0.624" stop-color="#ffe298"/><stop offset="0.666" stop-color="#ffcc83"/><stop offset="0.707" stop-color="#ffb971"/><stop offset="0.748" stop-color="#ffaa60"/><stop offset="0.789" stop-color="#ff9c50"/><stop offset="0.830" stop-color="#ff8f3e"/><stop offset="0.872" stop-color="#ff842a"/><stop offset="0.913" stop-color="#ff7a00"/><stop offset="0.954" stop-color="#ff7500"/><stop offset="1.000" stop-color="#ff6e00"/></linearGradient><linearGradient id="s63" gradientUnits="userSpaceOnUse" x1="556" x2="1537" y1="0" y2="0"><stop offset="0.000" stop-color="#00ffef"/><stop offset="0.045" stop-color="#00ffee"/><stop offset="0.086" stop-color="#00ffec"/><stop offset="0.127" stop-color="#00ffea"/><stop offset="0.168" stop-color="#00ffe8"/><stop offset="0.208" stop-color="#00ffe5"/><stop offset="0.249" stop-color="#00ffe2"/><stop offset="0.290" stop-color="#00ffdd"/><stop offset="0.331" stop-color="#00ffd7"/><stop offset="0.372" stop-color="#00ffcd"/><stop offset="0.412" stop-color="#68ffc8"/><stop offset="0.453" stop-color="#9bffc5"/><stop offset="0.494" stop-color="#c3ffc1"/><stop offset="0.535" stop-color="#e6ffbd"/><stop offset="0.575" stop-color="#fff8b3"/><stop offset="0.616" stop-color="#ffdd9b"/><stop offset="0.657" stop-color="#ffc786"/><stop offset="0.698" stop-color="#ffb574"/><stop offset="0.738" stop-color="#ffa664"/><stop offset="0.779" stop-color="#ff9854"/><stop offset="0.820" stop-color="#ff8c44"/><stop offset="0.861" stop-color="#ff8031"/><stop offset="0.902" stop-color="#ff7514"/><stop offset="0.942" stop-color="#ff7000"/><stop offset="0.983" stop-color="#ff6b00"/><stop offset="1.000" stop-color="#ff6800"/></linearGradient><linearGradient id="s64" gradientUnits="userSpaceOnUse" x1="558" x2="1549" y1="0" y2="0"><stop offset="0.000" stop-color="#00fff1"/><stop offset="0.043" stop-color="#00ffef"/><stop offset="0.083" stop-color="#00ffee"/><stop offset="0.123" stop-color="#00ffec"/><stop offset="0.164" stop-color="#00ffea"/><stop offset="0.204" stop-color="#00ffe8"/><stop offset="0.244" stop-color="#00ffe4"/><stop offset="0.285" stop-color="#00ffe0"/><stop offset="0.325" stop-color="#00ffda"/><stop offset="0.366" stop-color="#00ffd1"/><stop offset="0.406" stop-color="#6effcd"/><stop offset="0.446" stop-color="#a0ffca"/><stop offset="0.487" stop-color="#c8ffc7"/><stop offset="0.527" stop-color="#ebffc3"/><stop offset="0.567" stop-color="#fff2b5"/><stop offset="0.608" stop-color="#ffd89d"/><stop offset="0.648" stop-color="#ffc389"/><stop offset="0.689" stop-color="#ffb178"/><stop offset="0.729" stop-color="#ffa267"/><stop offset="0.769" stop-color="#ff9458"/><stop offset="0.810" stop-color="#ff8848"/><stop offset="0.850" stop-color="#ff7c38"/><stop offset="0.890" stop-color="#ff7221"/><stop offset="0.931" stop-color="#ff6a00"/><stop offset="0.971" stop-color="#ff6600"/><stop offset="1.000" stop-color="#ff6100"/></linearGradient><linearGradient id="s65" gradientUnits="userSpaceOnUse" x1="560" x2="1561" y1="0" y2="0"><stop offset="0.000" stop-color="#00fff2"/><stop offset="0.040" stop-color="#00fff1"/><stop offset="0.080" stop-color="#00fff0"/><stop offset="0.120" stop-color="#00ffee"/><stop offset="0.160" stop-color="#00ffec"/><stop offset="0.200" stop-color="#00ffea"/><stop offset="0.240" stop-color="#00ffe7"/><stop offset="0.280" stop-color="#00ffe3"/><stop offset="0.320" stop-color="#00ffde"/><stop offset="0.360" stop-color="#00ffd5"/><stop offset="0.400" stop-color="#74ffd3"/><stop offset="0.440" stop-color="#a6ffd0"/><stop offset="0.480" stop-color="#cdffcd"/><stop offset="0.520" stop-color="#f1ffc9"/><stop offset="0.560" stop-color="#ffedb7"/><stop offset="0.600" stop-color="#ffd3a0"/><stop offset="0.640" stop-color="#ffbe8c"/><stop offset="0.680" stop-color="#ffad7b"/><stop offset="0.720" stop-color="#ff9e6b"/><stop offset="0.760" stop-color="#ff905c"/><stop offset="0.800" stop-color="#ff844d"/><stop offset="0.840" stop-color="#ff793d"/><stop offset="0.880" stop-color="#ff6e2a"/><stop offset="0.920" stop-color="#ff6400"/><stop offset="0.960" stop-color="#ff6000"/><stop offset="1.000" stop-color="#ff5b00"/></linearGradient><linearGradient id="s66" gradientUnits="userSpaceOnUse" x1="562" x2="1572" y1="0" y2="0"><stop offset="0.000" stop-color="#00fff4"/><stop offset="0.037" stop-color="#00fff3"/><stop offset="0.077" stop-color="#00fff2"/><stop offset="0.116" stop-color="#00fff0"/><stop offset="0.156" stop-color="#00ffef"/><stop offset="0.196" stop-color="#00ffed"/><stop offset="0.235" stop-color="#00ffea"/><stop offset="0.275" stop-color="#00ffe7"/><stop offset="0.314" stop-color="#00ffe2"/><stop offset="0.354" stop-color="#15ffda"/><stop offset="0.394" stop-color="#7affd8"/><stop offset="0.433" stop-color="#abffd6"/><stop offset="0.473" stop-color="#d3ffd3"/><stop offset="0.512" stop-color="#f7ffd0"/><stop offset="0.552" stop-color="#ffe7b9"/><stop offset="0.592" stop-color="#ffcea2"/><stop offset="0.631" stop-color="#ffba8f"/><stop offset="0.671" stop-color="#ffa97d"/><stop offset="0.710" stop-color="#ff9a6e"/><stop offset="0.750" stop-color="#ff8c5f"/><stop offset="0.790" stop-color="#ff8051"/><stop offset="0.829" stop-color="#ff7542"/><stop offset="0.869" stop-color="#ff6a31"/><stop offset="0.908" stop-color="#ff6018"/><stop offset="0.948" stop-color="#ff5a00"/><stop offset="0.988" stop-color="#ff5600"/><stop offset="1.000" stop-color="#ff5400"/></linearGradient><linearGradient id="s67" gradientUnits="userSpaceOnUse" x1="565" x2="1584" y1="0" y2="0"><stop offset="0.000" stop-color="#00fff5"/><stop offset="0.035" stop-color="#00fff5"/><stop offset="0.074" stop-color="#00fff4"/><stop offset="0.113" stop-color="#00fff2"/><stop offset="0.152" stop-color="#00fff1"/><stop offset="0.192" stop-color="#00ffef"/><stop offset="0.231" stop-color="#00ffed"/><stop offset="0.270" stop-color="#00ffea"/><stop offset="0.309" stop-color="#00ffe5"/><stop offset="0.348" stop-color="#2bffdf"/><stop offset="0.388" stop-color="#80ffde"/><stop offset="0.427" stop-color="#b1ffdc"/><stop offset="0.466" stop-color="#d9ffd9"/><stop offset="0.505" stop-color="#fdffd7"/><stop offset="0.545" stop-color="#ffe2bb"/><stop offset="0.584" stop-color="#ffc9a4"/><stop offset="0.623" stop-color="#ffb691"/><stop offset="0.662" stop-color="#ffa580"/><stop offset="0.702" stop-color="#ff9671"/><stop offset="0.741" stop-color="#ff8863"/><stop offset="0.780" stop-color="#ff7c55"/><stop offset="0.819" stop-color="#ff7146"/><stop offset="0.858" stop-color="#ff6637"/><stop offset="0.898" stop-color="#ff5b23"/><stop offset="0.937" stop-color="#ff5300"/><stop offset="0.976" stop-color="#ff5000"/><stop offset="1.000" stop-color="#ff4c00"/></linearGradient><linearGradient id="s68" gradientUnits="userSpaceOnUse" x1="567" x2="1596" y1="0" y2="0"><stop offset="0.000" stop-color="#00fff7"/><stop offset="0.032" stop-color="#00fff6"/><stop offset="0.071" stop-color="#00fff6"/><stop offset="0.110" stop-color="#00fff5"/><stop offset="0.149" stop-color="#00fff3"/><stop offset="0.188" stop-color="#00fff2"/><stop offset="0.226" stop-color="#00fff0"/><stop offset="0.265" stop-color="#00ffed"/><stop offset="0.304" stop-color="#00ffea"/><stop offset="0.343" stop-color="#38ffe5"/><stop offset="0.382" stop-color="#87ffe3"/><stop offset="0.421" stop-color="#b6ffe2"/><stop offset="0.460" stop-color="#deffe0"/><stop offset="0.498" stop-color="#fffbda"/><stop offset="0.537" stop-color="#ffdcbd"/><stop offset="0.576" stop-color="#ffc5a6"/><stop offset="0.615" stop-color="#ffb193"/><stop offset="0.654" stop-color="#ffa083"/><stop offset="0.693" stop-color="#ff9274"/><stop offset="0.732" stop-color="#ff8466"/><stop offset="0.770" stop-color="#ff7858"/><stop offset="0.809" stop-color="#ff6d4a"/><stop offset="0.848" stop-color="#ff623c"/><stop offset="0.887" stop-color="#ff572b"/><stop offset="0.926" stop-color="#ff4c09"/><stop offset="0.965" stop-color="#ff4900"/><stop offset="1.000" stop-color="#ff4400"/></linearGradient><linearGradient id="s69" gradientUnits="userSpaceOnUse" x1="569" x2="1608" y1="0" y2="0"><stop offset="0.000" stop-color="#00fff9"/><stop offset="0.030" stop-color="#00fff8"/><stop offset="0.068" stop-color="#00fff8"/><stop offset="0.107" stop-color="#00fff7"/><stop offset="0.145" stop-color="#00fff6"/><stop offset="0.184" stop-color="#00fff5"/><stop offset="0.222" stop-color="#00fff3"/><stop offset="0.261" stop-color="#00fff1"/><stop offset="0.299" stop-color="#00ffee"/><stop offset="0.338" stop-color="#44ffea"/><stop offset="0.376" stop-color="#8dffe9"/><stop offset="0.415" stop-color="#bcffe8"/><stop offset="0.453" stop-color="#e5ffe6"/><stop offset="0.492" stop-color="#fff4db"/><stop offset="0.530" stop-color="#ffd7bf"/><stop offset="0.569" stop-color="#ffc0a8"/><stop offset="0.607" stop-color="#ffac96"/><stop offset="0.646" stop-color="#ff9c85"/><stop offset="0.684" stop-color="#ff8d76"/><stop offset="0.723" stop-color="#ff8069"/><stop offset="0.761" stop-color="#ff745b"/><stop offset="0.800" stop-color="#ff684e"/><stop offset="0.838" stop-color="#ff5d40"/><stop offset="0.877" stop-color="#ff5231"/><stop offset="0.915" stop-color="#ff471b"/><stop offset="0.954" stop-color="#ff4100"/><stop offset="0.992" stop-color="#ff3d00"/><stop offset="1.000" stop-color="#ff3b00"/></linearGradient><linearGradient id="s70" gradientUnits="userSpaceOnUse" x1="572" x2="1620" y1="0" y2="0"><stop offset="0.000" stop-color="#00fffa"/><stop offset="0.027" stop-color="#00fffa"/><stop offset="0.065" stop-color="#00fffa"/><stop offset="0.103" stop-color="#00fff9"/><stop offset="0.142" stop-color="#00fff8"/><stop offset="0.180" stop-color="#00fff8"/><stop offset="0.218" stop-color="#00fff6"/><stop offset="0.256" stop-color="#00fff5"/><stop offset="0.294" stop-color="#00fff3"/><stop offset="0.332" stop-color="#4dfff0"/><stop offset="0.370" stop-color="#93ffef"/><stop offset="0.409" stop-color="#c2ffee"/><stop offset="0.447" stop-color="#ebffed"/><stop offset="0.485" stop-color="#ffeedc"/><stop offset="0.523" stop-color="#ffd1c1"/><stop offset="0.561" stop-color="#ffbbaa"/><stop offset="0.599" stop-color="#ffa898"/><stop offset="0.637" stop-color="#ff9888"/><stop offset="0.676" stop-color="#ff8979"/><stop offset="0.714" stop-color="#ff7c6b"/><stop offset="0.752" stop-color="#ff705f"/><stop offset="0.790" stop-color="#ff6452"/><stop offset="0.828" stop-color="#ff5945"/><stop offset="0.866" stop-color="#ff4d36"/><stop offset="0.904" stop-color="#ff4124"/><stop offset="0.943" stop-color="#ff3700"/><stop offset="0.981" stop-color="#ff3500"/><stop offset="1.000" stop-color="#ff3000"/></linearGradient><linearGradient id="s71" gradientUnits="userSpaceOnUse" x1="574" x2="1632" y1="0" y2="0"><stop offset="0.000" stop-color="#00fffc"/><stop offset="0.025" stop-color="#00fffc"/><stop offset="0.062" stop-color="#00fffc"/><stop offset="0.100" stop-color="#00fffb"/><stop offset="0.138" stop-color="#00fffb"/><stop offset="0.176" stop-color="#00fffa"/><stop offset="0.214" stop-color="#00fffa"/><stop offset="0.251" stop-color="#00fff9"/><stop offset="0.289" stop-color="#00fff7"/><stop offset="0.327" stop-color="#56fff6"/><stop offset="0.365" stop-color="#99fff6"/><stop offset="0.403" stop-color="#c8fff5"/><stop offset="0.440" stop-color="#f2fff4"/><stop offset="0.478" stop-color="#ffe8de"/><stop offset="0.516" stop-color="#ffccc2"/><stop offset="0.554" stop-color="#ffb6ac"/><stop offset="0.592" stop-color="#ffa39a"/><stop offset="0.629" stop-color="#ff938a"/><stop offset="0.667" stop-color="#ff857c"/><stop offset="0.705" stop-color="#ff786e"/><stop offset="0.743" stop-color="#ff6b61"/><stop offset="0.781" stop-color="#ff6055"/><stop offset="0.818" stop-color="#ff5448"/><stop offset="0.856" stop-color="#ff483b"/><stop offset="0.894" stop-color="#ff3b2b"/><stop offset="0.932" stop-color="#ff2d10"/><stop offset="0.970" stop-color="#ff2900"/><stop offset="1.000" stop-color="#ff2100"/></linearGradient><linearGradient id="s72" gradientUnits="userSpaceOnUse" x1="577" x2="1644" y1="0" y2="0"><stop offset="0.000" stop-color="#00fffe"/><stop offset="0.022" stop-color="#00fffe"/><stop offset="0.059" stop-color="#00fffe"/><stop offset="0.097" stop-color="#00fffe"/><stop offset="0.134" stop-color="#00fffe"/><stop offset="0.172" stop-color="#00fffd"/><stop offset="0.209" stop-color="#00fffd"/><stop offset="0.247" stop-color="#00fffd"/><stop offset="0.284" stop-color="#00fffd"/><stop offset="0.322" stop-color="#5ffffc"/><stop offset="0.359" stop-color="#9ffffc"/><stop offset="0.397" stop-color="#cffffc"/><stop offset="0.434" stop-color="#f8fffc"/><stop offset="0.472" stop-color="#ffe2df"/><stop offset="0.509" stop-color="#ffc7c4"/><stop offset="0.547" stop-color="#ffb1ae"/><stop offset="0.584" stop-color="#ff9f9c"/><stop offset="0.621" stop-color="#ff8f8c"/><stop offset="0.659" stop-color="#ff807e"/><stop offset="0.696" stop-color="#ff7371"/><stop offset="0.734" stop-color="#ff6764"/><stop offset="0.771" stop-color="#ff5b58"/><stop offset="0.809" stop-color="#ff4f4c"/><stop offset="0.846" stop-color="#ff423f"/><stop offset="0.884" stop-color="#ff3431"/><stop offset="0.921" stop-color="#ff231d"/><stop offset="0.959" stop-color="#ff1400"/><stop offset="1.000" stop-color="#ff000e"/></linearGradient><linearGradient id="s73" gradientUnits="userSpaceOnUse" x1="579" x2="1656" y1="0" y2="0"><stop offset="0.000" stop-color="#00feff"/><stop offset="0.019" stop-color="#00feff"/><stop offset="0.056" stop-color="#00feff"/><stop offset="0.093" stop-color="#00feff"/><stop offset="0.131" stop-color="#00feff"/><stop offset="0.168" stop-color="#00fdff"/><stop offset="0.205" stop-color="#00fdff"/><stop offset="0.242" stop-color="#00fdff"/><stop offset="0.279" stop-color="#00fcff"/><stop offset="0.316" stop-color="#65fcff"/><stop offset="0.354" stop-color="#a3fbff"/><stop offset="0.391" stop-color="#d2fbff"/><stop offset="0.428" stop-color="#fbfbff"/><stop offset="0.465" stop-color="#ffdce0"/><stop offset="0.502" stop-color="#ffc1c5"/><stop offset="0.539" stop-color="#ffacb0"/><stop offset="0.576" stop-color="#ff9a9e"/><stop offset="0.614" stop-color="#ff8a8e"/><stop offset="0.651" stop-color="#ff7c80"/><stop offset="0.688" stop-color="#ff6f73"/><stop offset="0.725" stop-color="#ff6267"/><stop offset="0.762" stop-color="#ff565b"/><stop offset="0.799" stop-color="#ff494f"/><stop offset="0.837" stop-color="#ff3c43"/><stop offset="0.874" stop-color="#ff2c36"/><stop offset="0.911" stop-color="#ff1425"/><stop offset="0.948" stop-color="#ff001f"/><stop offset="0.985" stop-color="#ff001f"/><stop offset="1.000" stop-color="#ff0025"/></linearGradient><linearGradient id="s74" gradientUnits="userSpaceOnUse" x1="582" x2="1668" y1="0" y2="0"><stop offset="0.000" stop-color="#00fcff"/><stop offset="0.016" stop-color="#00fcff"/><stop offset="0.053" stop-color="#00fcff"/><stop offset="0.090" stop-color="#00fbff"/><stop offset="0.127" stop-color="#00fbff"/><stop offset="0.164" stop-color="#00faff"/><stop offset="0.201" stop-color="#00f9ff"/><stop offset="0.237" stop-color="#00f8ff"/><stop offset="0.274" stop-color="#00f6ff"/><stop offset="0.311" stop-color="#6af5ff"/><stop offset="0.348" stop-color="#a5f5ff"/><stop offset="0.385" stop-color="#d2f4ff"/><stop offset="0.422" stop-color="#fbf3ff"/><stop offset="0.459" stop-color="#ffd5e1"/><stop offset="0.495" stop-color="#ffbcc7"/><stop offset="0.532" stop-color="#ffa7b2"/><stop offset="0.569" stop-color="#ff95a0"/><stop offset="0.606" stop-color="#ff8590"/><stop offset="0.643" stop-color="#ff7782"/><stop offset="0.680" stop-color="#ff6a76"/><stop offset="0.716" stop-color="#ff5d6a"/><stop offset="0.753" stop-color="#ff505e"/><stop offset="0.790" stop-color="#ff4352"/><stop offset="0.827" stop-color="#ff3547"/><stop offset="0.864" stop-color="#ff223a"/><stop offset="0.901" stop-color="#ff0030"/><stop offset="0.937" stop-color="#ff002e"/><stop offset="0.974" stop-color="#ff002d"/><stop offset="1.000" stop-color="#ff0031"/></linearGradient><linearGradient id="s75" gradientUnits="userSpaceOnUse" x1="585" x2="1680" y1="0" y2="0"><stop offset="0.000" stop-color="#00faff"/><stop offset="0.014" stop-color="#00faff"/><stop offset="0.050" stop-color="#00f9ff"/><stop offset="0.087" stop-color="#00f9ff"/><stop offset="0.123" stop-color="#00f8ff"/><stop offset="0.160" stop-color="#00f7ff"/><stop offset="0.196" stop-color="#00f6ff"/><stop offset="0.233" stop-color="#00f4ff"/><stop offset="0.269" stop-color="#00f1ff"/><stop offset="0.306" stop-color="#6fefff"/><stop offset="0.343" stop-color="#a7eeff"/><stop offset="0.379" stop-color="#d3edff"/><stop offset="0.416" stop-color="#faebff"/><stop offset="0.452" stop-color="#ffcfe2"/><stop offset="0.489" stop-color="#ffb6c8"/><stop offset="0.525" stop-color="#ffa2b3"/><stop offset="0.562" stop-color="#ff90a2"/><stop offset="0.598" stop-color="#ff8092"/><stop offset="0.635" stop-color="#ff7284"/><stop offset="0.671" stop-color="#ff6578"/><stop offset="0.708" stop-color="#ff586c"/><stop offset="0.744" stop-color="#ff4b61"/><stop offset="0.781" stop-color="#ff3d55"/><stop offset="0.817" stop-color="#ff2c4a"/><stop offset="0.854" stop-color="#ff123e"/><stop offset="0.891" stop-color="#ff003a"/><stop offset="0.927" stop-color="#ff0039"/><stop offset="0.964" stop-color="#ff0037"/><stop offset="1.000" stop-color="#ff0039"/></linearGradient><linearGradient id="s76" gradientUnits="userSpaceOnUse" x1="588" x2="1692" y1="0" y2="0"><stop offset="0.000" stop-color="#00f8ff"/><stop offset="0.011" stop-color="#00f8ff"/><stop offset="0.047" stop-color="#00f7ff"/><stop offset="0.084" stop-color="#00f6ff"/><stop offset="0.120" stop-color="#00f5ff"/><stop offset="0.156" stop-color="#00f4ff"/><stop offset="0.192" stop-color="#00f2ff"/><stop offset="0.228" stop-color="#00efff"/><stop offset="0.265" stop-color="#00ebff"/><stop offset="0.301" stop-color="#73e9ff"/><stop offset="0.337" stop-color="#a9e8ff"/><stop offset="0.373" stop-color="#d4e6ff"/><stop offset="0.410" stop-color="#fae4ff"/><stop offset="0.446" stop-color="#ffc9e3"/><stop offset="0.482" stop-color="#ffb1ca"/><stop offset="0.518" stop-color="#ff9cb5"/><stop offset="0.555" stop-color="#ff8ba3"/><stop offset="0.591" stop-color="#ff7b94"/><stop offset="0.627" stop-color="#ff6d87"/><stop offset="0.663" stop-color="#ff607a"/><stop offset="0.699" stop-color="#ff526e"/><stop offset="0.736" stop-color="#ff4463"/><stop offset="0.772" stop-color="#ff3558"/><stop offset="0.808" stop-color="#ff224d"/><stop offset="0.844" stop-color="#ff0045"/><stop offset="0.881" stop-color="#ff0043"/><stop offset="0.917" stop-color="#ff0041"/><stop offset="0.953" stop-color="#ff003f"/><stop offset="0.989" stop-color="#ff003e"/><stop offset="1.000" stop-color="#ff0040"/></linearGradient><linearGradient id="s77" gradientUnits="userSpaceOnUse" x1="591" x2="1703" y1="0" y2="0"><stop offset="0.000" stop-color="#00f6ff"/><stop offset="0.008" stop-color="#00f6ff"/><stop offset="0.044" stop-color="#00f5ff"/><stop offset="0.080" stop-color="#00f4ff"/><stop offset="0.116" stop-color="#00f2ff"/><stop offset="0.152" stop-color="#00f0ff"/><stop offset="0.188" stop-color="#00eeff"/><stop offset="0.224" stop-color="#00eaff"/><stop offset="0.260" stop-color="#00e5ff"/><stop offset="0.296" stop-color="#77e3ff"/><stop offset="0.332" stop-color="#abe1ff"/><stop offset="0.368" stop-color="#d4dfff"/><stop offset="0.404" stop-color="#f9ddff"/><stop offset="0.440" stop-color="#ffc3e4"/><stop offset="0.476" stop-color="#ffabcb"/><stop offset="0.512" stop-color="#ff97b6"/><stop offset="0.548" stop-color="#ff86a5"/><stop offset="0.584" stop-color="#ff7696"/><stop offset="0.620" stop-color="#ff6889"/><stop offset="0.656" stop-color="#ff5a7c"/><stop offset="0.692" stop-color="#ff4c71"/><stop offset="0.727" stop-color="#ff3e66"/><stop offset="0.763" stop-color="#ff2c5b"/><stop offset="0.799" stop-color="#ff0e50"/><stop offset="0.835" stop-color="#ff004d"/><stop offset="0.871" stop-color="#ff004a"/><stop offset="0.907" stop-color="#ff0048"/><stop offset="0.943" stop-color="#ff0046"/><stop offset="0.979" stop-color="#ff0044"/><stop offset="1.000" stop-color="#ff0046"/></linearGradient><linearGradient id="s78" gradientUnits="userSpaceOnUse" x1="594" x2="1715" y1="0" y2="0"><stop offset="0.000" stop-color="#00f4ff"/><stop offset="0.006" stop-color="#00f4ff"/><stop offset="0.041" stop-color="#00f3ff"/><stop offset="0.077" stop-color="#00f1ff"/><stop offset="0.113" stop-color="#00efff"/><stop offset="0.148" stop-color="#00edff"/><stop offset="0.184" stop-color="#00eaff"/><stop offset="0.220" stop-color="#00e6ff"/><stop offset="0.255" stop-color="#09dfff"/><stop offset="0.291" stop-color="#7bddff"/><stop offset="0.327" stop-color="#acdbff"/><stop offset="0.362" stop-color="#d5d8ff"/><stop offset="0.398" stop-color="#f9d6ff"/><stop offset="0.434" stop-color="#ffbde5"/><stop offset="0.469" stop-color="#ffa5cc"/><stop offset="0.505" stop-color="#ff92b8"/><stop offset="0.541" stop-color="#ff81a7"/><stop offset="0.577" stop-color="#ff7198"/><stop offset="0.612" stop-color="#ff628a"/><stop offset="0.648" stop-color="#ff547e"/><stop offset="0.684" stop-color="#ff4673"/><stop offset="0.719" stop-color="#ff3668"/><stop offset="0.755" stop-color="#ff215d"/><stop offset="0.791" stop-color="#ff0056"/><stop offset="0.826" stop-color="#ff0053"/><stop offset="0.862" stop-color="#ff0050"/><stop offset="0.898" stop-color="#ff004e"/><stop offset="0.933" stop-color="#ff004c"/><stop offset="0.969" stop-color="#ff004a"/><stop offset="1.000" stop-color="#ff004a"/></linearGradient><linearGradient id="s79" gradientUnits="userSpaceOnUse" x1="597" x2="1726" y1="0" y2="0"><stop offset="0.000" stop-color="#00f2ff"/><stop offset="0.038" stop-color="#00f0ff"/><stop offset="0.074" stop-color="#00efff"/><stop offset="0.109" stop-color="#00ecff"/><stop offset="0.144" stop-color="#00eaff"/><stop offset="0.180" stop-color="#00e6ff"/><stop offset="0.215" stop-color="#00e1ff"/><stop offset="0.251" stop-color="#27d9ff"/><stop offset="0.286" stop-color="#7ed7ff"/><stop offset="0.322" stop-color="#aed5ff"/><stop offset="0.357" stop-color="#d5d2ff"/><stop offset="0.392" stop-color="#f9ceff"/><stop offset="0.428" stop-color="#ffb7e6"/><stop offset="0.463" stop-color="#ffa0cd"/><stop offset="0.499" stop-color="#ff8cb9"/><stop offset="0.534" stop-color="#ff7ba8"/><stop offset="0.569" stop-color="#ff6b9a"/><stop offset="0.605" stop-color="#ff5d8c"/><stop offset="0.640" stop-color="#ff4e80"/><stop offset="0.676" stop-color="#ff3e75"/><stop offset="0.711" stop-color="#ff2c6a"/><stop offset="0.747" stop-color="#ff0860"/><stop offset="0.782" stop-color="#ff005c"/><stop offset="0.817" stop-color="#ff0059"/><stop offset="0.853" stop-color="#ff0056"/><stop offset="0.888" stop-color="#ff0053"/><stop offset="0.924" stop-color="#ff0051"/><stop offset="0.959" stop-color="#ff004f"/><stop offset="0.995" stop-color="#ff004e"/><stop offset="1.000" stop-color="#ff004f"/></linearGradient><linearGradient id="s80" gradientUnits="userSpaceOnUse" x1="600" x2="1726" y1="0" y2="0"><stop offset="0.000" stop-color="#00f0ff"/><stop offset="0.035" stop-color="#00eeff"/><stop offset="0.071" stop-color="#00ecff"/><stop offset="0.106" stop-color="#00e9ff"/><stop offset="0.142" stop-color="#00e6ff"/><stop offset="0.178" stop-color="#00e2ff"/><stop offset="0.213" stop-color="#00dcff"/><stop offset="0.249" stop-color="#34d4ff"/><stop offset="0.284" stop-color="#81d1ff"/><stop offset="0.320" stop-color="#afceff"/><stop offset="0.355" stop-color="#d5cbff"/><stop offset="0.391" stop-color="#f8c7ff"/><stop offset="0.426" stop-color="#ffb0e7"/><stop offset="0.462" stop-color="#ff9acf"/><stop offset="0.497" stop-color="#ff86bb"/><stop offset="0.533" stop-color="#ff75aa"/><stop offset="0.568" stop-color="#ff669b"/><stop offset="0.604" stop-color="#ff578e"/><stop offset="0.639" stop-color="#ff4782"/><stop offset="0.675" stop-color="#ff3677"/><stop offset="0.710" stop-color="#ff206c"/><stop offset="0.746" stop-color="#ff0065"/><stop offset="0.781" stop-color="#ff0061"/><stop offset="0.817" stop-color="#ff005e"/><stop offset="0.852" stop-color="#ff005b"/><stop offset="0.888" stop-color="#ff0058"/><stop offset="0.924" stop-color="#ff0056"/><stop offset="0.959" stop-color="#ff0054"/><stop offset="0.995" stop-color="#ff0052"/><stop offset="1.000" stop-color="#ff0052"/></linearGradient><linearGradient id="s81" gradientUnits="userSpaceOnUse" x1="603" x2="1710" y1="0" y2="0"><stop offset="0.000" stop-color="#00edff"/><stop offset="0.033" stop-color="#00ecff"/><stop offset="0.069" stop-color="#00e9ff"/><stop offset="0.105" stop-color="#00e6ff"/><stop offset="0.142" stop-color="#00e3ff"/><stop offset="0.178" stop-color="#00deff"/><stop offset="0.214" stop-color="#00d7ff"/><stop offset="0.250" stop-color="#3eceff"/><stop offset="0.286" stop-color="#84cbff"/><stop offset="0.322" stop-color="#b1c8ff"/><stop offset="0.358" stop-color="#d6c4ff"/><stop offset="0.395" stop-color="#f8c0ff"/><stop offset="0.431" stop-color="#ffaae8"/><stop offset="0.467" stop-color="#ff94d0"/><stop offset="0.503" stop-color="#ff81bc"/><stop offset="0.539" stop-color="#ff70ab"/><stop offset="0.575" stop-color="#ff609d"/><stop offset="0.611" stop-color="#ff5090"/><stop offset="0.648" stop-color="#ff4084"/><stop offset="0.684" stop-color="#ff2c79"/><stop offset="0.720" stop-color="#ff006f"/><stop offset="0.756" stop-color="#ff006a"/><stop offset="0.792" stop-color="#ff0066"/><stop offset="0.828" stop-color="#ff0063"/><stop offset="0.864" stop-color="#ff0060"/><stop offset="0.901" stop-color="#ff005d"/><stop offset="0.937" stop-color="#ff005a"/><stop offset="0.973" stop-color="#ff0058"/><stop offset="1.000" stop-color="#ff0056"/></linearGradient><linearGradient id="s82" gradientUnits="userSpaceOnUse" x1="606" x2="1685" y1="0" y2="0"><stop offset="0.000" stop-color="#00ebff"/><stop offset="0.031" stop-color="#00e9ff"/><stop offset="0.068" stop-color="#00e7ff"/><stop offset="0.105" stop-color="#00e3ff"/><stop offset="0.142" stop-color="#00dfff"/><stop offset="0.180" stop-color="#00daff"/><stop offset="0.217" stop-color="#00d1ff"/><stop offset="0.254" stop-color="#46c9ff"/><stop offset="0.291" stop-color="#87c5ff"/><stop offset="0.328" stop-color="#b2c2ff"/><stop offset="0.365" stop-color="#d6beff"/><stop offset="0.402" stop-color="#f8b9ff"/><stop offset="0.439" stop-color="#ffa4e8"/><stop offset="0.476" stop-color="#ff8ed1"/><stop offset="0.513" stop-color="#ff7bbd"/><stop offset="0.551" stop-color="#ff69ad"/><stop offset="0.588" stop-color="#ff599e"/><stop offset="0.625" stop-color="#ff4992"/><stop offset="0.662" stop-color="#ff3786"/><stop offset="0.699" stop-color="#ff1e7b"/><stop offset="0.736" stop-color="#ff0073"/><stop offset="0.773" stop-color="#ff006f"/><stop offset="0.810" stop-color="#ff006b"/><stop offset="0.847" stop-color="#ff0067"/><stop offset="0.884" stop-color="#ff0064"/><stop offset="0.922" stop-color="#ff0061"/><stop offset="0.959" stop-color="#ff005e"/><stop offset="1.000" stop-color="#ff005c"/></linearGradient><linearGradient id="s83" gradientUnits="userSpaceOnUse" x1="610" x2="1659" y1="0" y2="0"><stop offset="0.000" stop-color="#00e9ff"/><stop offset="0.029" stop-color="#00e7ff"/><stop offset="0.067" stop-color="#00e4ff"/><stop offset="0.105" stop-color="#00e0ff"/><stop offset="0.143" stop-color="#00dcff"/><stop offset="0.181" stop-color="#00d5ff"/><stop offset="0.219" stop-color="#00ccff"/><stop offset="0.258" stop-color="#4dc3ff"/><stop offset="0.296" stop-color="#89c0ff"/><stop offset="0.334" stop-color="#b3bcff"/><stop offset="0.372" stop-color="#d7b7ff"/><stop offset="0.410" stop-color="#f7b2ff"/><stop offset="0.448" stop-color="#ff9de9"/><stop offset="0.486" stop-color="#ff87d2"/><stop offset="0.524" stop-color="#ff74bf"/><stop offset="0.562" stop-color="#ff63ae"/><stop offset="0.601" stop-color="#ff52a0"/><stop offset="0.639" stop-color="#ff4193"/><stop offset="0.677" stop-color="#ff2c87"/><stop offset="0.715" stop-color="#ff007d"/><stop offset="0.753" stop-color="#ff0078"/><stop offset="0.791" stop-color="#ff0073"/><stop offset="0.829" stop-color="#ff006f"/><stop offset="0.867" stop-color="#ff006b"/><stop offset="0.905" stop-color="#ff0068"/><stop offset="0.944" stop-color="#ff0065"/><stop offset="0.982" stop-color="#ff0062"/><stop offset="1.000" stop-color="#ff0061"/></linearGradient><linearGradient id="s84" gradientUnits="userSpaceOnUse" x1="613" x2="1634" y1="0" y2="0"><stop offset="0.000" stop-color="#00e6ff"/><stop offset="0.027" stop-color="#00e4ff"/><stop offset="0.066" stop-color="#00e1ff"/><stop offset="0.105" stop-color="#00ddff"/><stop offset="0.144" stop-color="#00d8ff"/><stop offset="0.183" stop-color="#00d1ff"/><stop offset="0.222" stop-color="#00c7ff"/><stop offset="0.262" stop-color="#53beff"/><stop offset="0.301" stop-color="#8cbaff"/><stop offset="0.340" stop-color="#b4b5ff"/><stop offset="0.379" stop-color="#d7b0ff"/><stop offset="0.418" stop-color="#f7abff"/><stop offset="0.457" stop-color="#ff96ea"/><stop offset="0.497" stop-color="#ff81d3"/><stop offset="0.536" stop-color="#ff6ec0"/><stop offset="0.575" stop-color="#ff5cb0"/><stop offset="0.614" stop-color="#ff4ba1"/><stop offset="0.653" stop-color="#ff3795"/><stop offset="0.693" stop-color="#ff1d89"/><stop offset="0.732" stop-color="#ff0081"/><stop offset="0.771" stop-color="#ff007c"/><stop offset="0.810" stop-color="#ff0077"/><stop offset="0.849" stop-color="#ff0073"/><stop offset="0.888" stop-color="#ff006f"/><stop offset="0.928" stop-color="#ff006c"/><stop offset="0.967" stop-color="#ff0069"/><stop offset="1.000" stop-color="#ff0066"/></linearGradient><linearGradient id="s85" gradientUnits="userSpaceOnUse" x1="616" x2="1609" y1="0" y2="0"><stop offset="0.000" stop-color="#00e4ff"/><stop offset="0.024" stop-color="#00e2ff"/><stop offset="0.064" stop-color="#00deff"/><stop offset="0.104" stop-color="#00daff"/><stop offset="0.145" stop-color="#00d4ff"/><stop offset="0.185" stop-color="#00ccff"/><stop offset="0.225" stop-color="#00c1ff"/><stop offset="0.266" stop-color="#58b8ff"/><stop offset="0.306" stop-color="#8eb4ff"/><stop offset="0.346" stop-color="#b5afff"/><stop offset="0.387" stop-color="#d7aaff"/><stop offset="0.427" stop-color="#f7a3ff"/><stop offset="0.467" stop-color="#ff8feb"/><stop offset="0.508" stop-color="#ff7ad4"/><stop offset="0.548" stop-color="#ff67c1"/><stop offset="0.588" stop-color="#ff55b1"/><stop offset="0.629" stop-color="#ff42a3"/><stop offset="0.669" stop-color="#ff2c96"/><stop offset="0.709" stop-color="#ff008c"/><stop offset="0.749" stop-color="#ff0085"/><stop offset="0.790" stop-color="#ff0080"/><stop offset="0.830" stop-color="#ff007b"/><stop offset="0.870" stop-color="#ff0077"/><stop offset="0.911" stop-color="#ff0073"/><stop offset="0.951" stop-color="#ff006f"/><stop offset="0.991" stop-color="#ff006c"/><stop offset="1.000" stop-color="#ff006b"/></linearGradient><linearGradient id="s86" gradientUnits="userSpaceOnUse" x1="620" x2="1583" y1="0" y2="0"><stop offset="0.000" stop-color="#00e1ff"/><stop offset="0.021" stop-color="#00dfff"/><stop offset="0.062" stop-color="#00dcff"/><stop offset="0.104" stop-color="#00d7ff"/><stop offset="0.145" stop-color="#00d1ff"/><stop offset="0.187" stop-color="#00c8ff"/><stop offset="0.229" stop-color="#00bbff"/><stop offset="0.270" stop-color="#5db3ff"/><stop offset="0.312" stop-color="#90aeff"/><stop offset="0.353" stop-color="#b7a9ff"/><stop offset="0.395" stop-color="#d8a3ff"/><stop offset="0.436" stop-color="#f79cff"/><stop offset="0.478" stop-color="#ff88eb"/><stop offset="0.519" stop-color="#ff73d5"/><stop offset="0.561" stop-color="#ff60c2"/><stop offset="0.602" stop-color="#ff4db2"/><stop offset="0.644" stop-color="#ff38a4"/><stop offset="0.685" stop-color="#ff1b98"/><stop offset="0.727" stop-color="#ff008f"/><stop offset="0.768" stop-color="#ff0089"/><stop offset="0.810" stop-color="#ff0083"/><stop offset="0.851" stop-color="#ff007e"/><stop offset="0.893" stop-color="#ff007a"/><stop offset="0.934" stop-color="#ff0076"/><stop offset="0.976" stop-color="#ff0073"/><stop offset="1.000" stop-color="#ff0071"/></linearGradient><linearGradient id="s87" gradientUnits="userSpaceOnUse" x1="623" x2="1558" y1="0" y2="0"><stop offset="0.000" stop-color="#00deff"/><stop offset="0.018" stop-color="#00ddff"/><stop offset="0.061" stop-color="#00d9ff"/><stop offset="0.103" stop-color="#00d4ff"/><stop offset="0.146" stop-color="#00cdff"/><stop offset="0.189" stop-color="#00c3ff"/><stop offset="0.232" stop-color="#00b5ff"/><stop offset="0.275" stop-color="#61adff"/><stop offset="0.317" stop-color="#92a8ff"/><stop offset="0.360" stop-color="#b8a2ff"/><stop offset="0.403" stop-color="#d89cff"/><stop offset="0.446" stop-color="#f694ff"/><stop offset="0.489" stop-color="#ff81ec"/><stop offset="0.531" stop-color="#ff6cd6"/><stop offset="0.574" stop-color="#ff58c3"/><stop offset="0.617" stop-color="#ff44b4"/><stop offset="0.660" stop-color="#ff2ca6"/><stop offset="0.703" stop-color="#ff009a"/><stop offset="0.745" stop-color="#ff0093"/><stop offset="0.788" stop-color="#ff008c"/><stop offset="0.831" stop-color="#ff0087"/><stop offset="0.874" stop-color="#ff0082"/><stop offset="0.917" stop-color="#ff007d"/><stop offset="0.959" stop-color="#ff0079"/><stop offset="1.000" stop-color="#ff0076"/></linearGradient><linearGradient id="s88" gradientUnits="userSpaceOnUse" x1="627" x2="1533" y1="0" y2="0"><stop offset="0.000" stop-color="#00dcff"/><stop offset="0.015" stop-color="#00daff"/><stop offset="0.059" stop-color="#00d6ff"/><stop offset="0.103" stop-color="#00d0ff"/><stop offset="0.147" stop-color="#00c9ff"/><stop offset="0.191" stop-color="#00beff"/><stop offset="0.235" stop-color="#00afff"/><stop offset="0.280" stop-color="#65a7ff"/><stop offset="0.324" stop-color="#94a2ff"/><stop offset="0.368" stop-color="#b99cff"/><stop offset="0.412" stop-color="#d995ff"/><stop offset="0.456" stop-color="#f68dff"/><stop offset="0.500" stop-color="#ff79ed"/><stop offset="0.545" stop-color="#ff64d7"/><stop offset="0.589" stop-color="#ff4fc4"/><stop offset="0.633" stop-color="#ff39b5"/><stop offset="0.677" stop-color="#ff19a7"/><stop offset="0.721" stop-color="#ff009d"/><stop offset="0.765" stop-color="#ff0096"/><stop offset="0.810" stop-color="#ff008f"/><stop offset="0.854" stop-color="#ff008a"/><stop offset="0.898" stop-color="#ff0085"/><stop offset="0.942" stop-color="#ff0080"/><stop offset="0.986" stop-color="#ff007c"/><stop offset="1.000" stop-color="#ff007b"/></linearGradient><linearGradient id="s89" gradientUnits="userSpaceOnUse" x1="630" x2="1507" y1="0" y2="0"><stop offset="0.000" stop-color="#00d9ff"/><stop offset="0.011" stop-color="#00d8ff"/><stop offset="0.057" stop-color="#00d3ff"/><stop offset="0.102" stop-color="#00cdff"/><stop offset="0.148" stop-color="#00c5ff"/><stop offset="0.194" stop-color="#00baff"/><stop offset="0.239" stop-color="#00a8ff"/><stop offset="0.285" stop-color="#69a2ff"/><stop offset="0.330" stop-color="#969cff"/><stop offset="0.376" stop-color="#ba95ff"/><stop offset="0.422" stop-color="#d98eff"/><stop offset="0.467" stop-color="#f685ff"/><stop offset="0.513" stop-color="#ff71ed"/><stop offset="0.558" stop-color="#ff5bd8"/><stop offset="0.604" stop-color="#ff45c6"/><stop offset="0.650" stop-color="#ff2cb6"/><stop offset="0.695" stop-color="#ff00a9"/><stop offset="0.741" stop-color="#ff00a0"/><stop offset="0.787" stop-color="#ff0099"/><stop offset="0.832" stop-color="#ff0092"/><stop offset="0.878" stop-color="#ff008d"/><stop offset="0.923" stop-color="#ff0088"/><stop offset="0.969" stop-color="#ff0083"/><stop offset="1.000" stop-color="#ff0080"/></linearGradient><linearGradient id="s90" gradientUnits="userSpaceOnUse" x1="634" x2="1482" y1="0" y2="0"><stop offset="0.000" stop-color="#00d6ff"/><stop offset="0.007" stop-color="#00d5ff"/><stop offset="0.055" stop-color="#00d0ff"/><stop offset="0.102" stop-color="#00caff"/><stop offset="0.149" stop-color="#00c1ff"/><stop offset="0.196" stop-color="#00b4ff"/><stop offset="0.243" stop-color="#00a2ff"/><stop offset="0.290" stop-color="#6c9cff"/><stop offset="0.338" stop-color="#9896ff"/><stop offset="0.385" stop-color="#ba8fff"/><stop offset="0.432" stop-color="#d986ff"/><stop offset="0.479" stop-color="#f67dff"/><stop offset="0.526" stop-color="#ff69ee"/><stop offset="0.573" stop-color="#ff52d8"/><stop offset="0.621" stop-color="#ff3ac7"/><stop offset="0.668" stop-color="#ff15b7"/><stop offset="0.715" stop-color="#ff00ac"/><stop offset="0.762" stop-color="#ff00a3"/><stop offset="0.809" stop-color="#ff009c"/><stop offset="0.856" stop-color="#ff0095"/><stop offset="0.904" stop-color="#ff008f"/><stop offset="0.951" stop-color="#ff008a"/><stop offset="1.000" stop-color="#ff0086"/></linearGradient><linearGradient id="s91" gradientUnits="userSpaceOnUse" x1="637" x2="1456" y1="0" y2="0"><stop offset="0.000" stop-color="#00d3ff"/><stop offset="0.052" stop-color="#00cdff"/><stop offset="0.101" stop-color="#00c6ff"/><stop offset="0.150" stop-color="#00bdff"/><stop offset="0.199" stop-color="#00afff"/><stop offset="0.248" stop-color="#1f9cff"/><stop offset="0.296" stop-color="#7096ff"/><stop offset="0.345" stop-color="#9a90ff"/><stop offset="0.394" stop-color="#bb88ff"/><stop offset="0.443" stop-color="#d97fff"/><stop offset="0.492" stop-color="#f674ff"/><stop offset="0.540" stop-color="#ff60ef"/><stop offset="0.589" stop-color="#ff48d9"/><stop offset="0.638" stop-color="#ff2bc8"/><stop offset="0.687" stop-color="#ff00b9"/><stop offset="0.736" stop-color="#ff00af"/><stop offset="0.785" stop-color="#ff00a6"/><stop offset="0.833" stop-color="#ff009e"/><stop offset="0.882" stop-color="#ff0098"/><stop offset="0.931" stop-color="#ff0092"/><stop offset="0.980" stop-color="#ff008d"/><stop offset="1.000" stop-color="#ff008b"/></linearGradient><linearGradient id="s92" gradientUnits="userSpaceOnUse" x1="641" x2="1431" y1="0" y2="0"><stop offset="0.000" stop-color="#00d0ff"/><stop offset="0.050" stop-color="#00caff"/><stop offset="0.100" stop-color="#00c2ff"/><stop offset="0.151" stop-color="#00b8ff"/><stop offset="0.201" stop-color="#00aaff"/><stop offset="0.252" stop-color="#2d97ff"/><stop offset="0.303" stop-color="#7390ff"/><stop offset="0.353" stop-color="#9b89ff"/><stop offset="0.404" stop-color="#bc81ff"/><stop offset="0.454" stop-color="#da77ff"/><stop offset="0.505" stop-color="#f56bff"/><stop offset="0.556" stop-color="#ff56ef"/><stop offset="0.606" stop-color="#ff3bda"/><stop offset="0.657" stop-color="#ff10c9"/><stop offset="0.708" stop-color="#ff00bc"/><stop offset="0.758" stop-color="#ff00b1"/><stop offset="0.809" stop-color="#ff00a8"/><stop offset="0.859" stop-color="#ff00a1"/><stop offset="0.910" stop-color="#ff009a"/><stop offset="0.961" stop-color="#ff0095"/><stop offset="1.000" stop-color="#ff0091"/></linearGradient><linearGradient id="s93" gradientUnits="userSpaceOnUse" x1="644" x2="1406" y1="0" y2="0"><stop offset="0.000" stop-color="#00cdff"/><stop offset="0.047" stop-color="#00c7ff"/><stop offset="0.099" stop-color="#00bfff"/><stop offset="0.152" stop-color="#00b4ff"/><stop offset="0.204" stop-color="#00a4ff"/><stop offset="0.257" stop-color="#3691ff"/><stop offset="0.309" stop-color="#758aff"/><stop offset="0.362" stop-color="#9d83ff"/><stop offset="0.414" stop-color="#bd7aff"/><stop offset="0.467" stop-color="#da6fff"/><stop offset="0.520" stop-color="#f561ff"/><stop offset="0.572" stop-color="#ff4af0"/><stop offset="0.625" stop-color="#ff2bdb"/><stop offset="0.677" stop-color="#ff00ca"/><stop offset="0.730" stop-color="#ff00be"/><stop offset="0.782" stop-color="#ff00b4"/><stop offset="0.835" stop-color="#ff00ab"/><stop offset="0.887" stop-color="#ff00a3"/><stop offset="0.940" stop-color="#ff009d"/><stop offset="1.000" stop-color="#ff0096"/></linearGradient><linearGradient id="s94" gradientUnits="userSpaceOnUse" x1="648" x2="1380" y1="0" y2="0"><stop offset="0.000" stop-color="#00c9ff"/><stop offset="0.044" stop-color="#00c4ff"/><stop offset="0.098" stop-color="#00bbff"/><stop offset="0.153" stop-color="#00b0ff"/><stop offset="0.207" stop-color="#009fff"/><stop offset="0.262" stop-color="#3e8bff"/><stop offset="0.317" stop-color="#7884ff"/><stop offset="0.371" stop-color="#9e7cff"/><stop offset="0.426" stop-color="#be72ff"/><stop offset="0.481" stop-color="#da66ff"/><stop offset="0.535" stop-color="#f557ff"/><stop offset="0.590" stop-color="#ff3df0"/><stop offset="0.644" stop-color="#ff00dc"/><stop offset="0.699" stop-color="#ff00cc"/><stop offset="0.754" stop-color="#ff00c0"/><stop offset="0.808" stop-color="#ff00b6"/><stop offset="0.863" stop-color="#ff00ad"/><stop offset="0.917" stop-color="#ff00a6"/><stop offset="0.972" stop-color="#ff009f"/><stop offset="1.000" stop-color="#ff009c"/></linearGradient><linearGradient id="s95" gradientUnits="userSpaceOnUse" x1="652" x2="1355" y1="0" y2="0"><stop offset="0.000" stop-color="#00c6ff"/><stop offset="0.040" stop-color="#00c1ff"/><stop offset="0.097" stop-color="#00b7ff"/><stop offset="0.154" stop-color="#00abff"/><stop offset="0.211" stop-color="#0099ff"/><stop offset="0.267" stop-color="#4486ff"/><stop offset="0.324" stop-color="#7b7eff"/><stop offset="0.381" stop-color="#a075ff"/><stop offset="0.438" stop-color="#bf6aff"/><stop offset="0.495" stop-color="#db5dff"/><stop offset="0.552" stop-color="#f54bff"/><stop offset="0.609" stop-color="#ff2bf1"/><stop offset="0.666" stop-color="#ff00dd"/><stop offset="0.723" stop-color="#ff00ce"/><stop offset="0.779" stop-color="#ff00c2"/><stop offset="0.836" stop-color="#ff00b8"/><stop offset="0.893" stop-color="#ff00af"/><stop offset="0.950" stop-color="#ff00a8"/><stop offset="1.000" stop-color="#ff00a2"/></linearGradient><linearGradient id="s96" gradientUnits="userSpaceOnUse" x1="656" x2="1330" y1="0" y2="0"><stop offset="0.000" stop-color="#00c2ff"/><stop offset="0.036" stop-color="#00bdff"/><stop offset="0.095" stop-color="#00b4ff"/><stop offset="0.154" stop-color="#00a6ff"/><stop offset="0.214" stop-color="#0092ff"/><stop offset="0.273" stop-color="#4a80ff"/><stop offset="0.332" stop-color="#7d77ff"/><stop offset="0.392" stop-color="#a16eff"/><stop offset="0.451" stop-color="#bf62ff"/><stop offset="0.511" stop-color="#db52ff"/><stop offset="0.570" stop-color="#f53cff"/><stop offset="0.629" stop-color="#ff00f1"/><stop offset="0.689" stop-color="#ff00df"/><stop offset="0.748" stop-color="#ff00d0"/><stop offset="0.807" stop-color="#ff00c4"/><stop offset="0.867" stop-color="#ff00ba"/><stop offset="0.926" stop-color="#ff00b1"/><stop offset="0.986" stop-color="#ff00aa"/><stop offset="1.000" stop-color="#ff00a8"/></linearGradient><linearGradient id="s97" gradientUnits="userSpaceOnUse" x1="660" x2="1304" y1="0" y2="0"><stop offset="0.000" stop-color="#00beff"/><stop offset="0.031" stop-color="#00baff"/><stop offset="0.093" stop-color="#00b0ff"/><stop offset="0.155" stop-color="#00a1ff"/><stop offset="0.217" stop-color="#008cff"/><stop offset="0.279" stop-color="#4f7aff"/><stop offset="0.341" stop-color="#7f71ff"/><stop offset="0.404" stop-color="#a266ff"/><stop offset="0.466" stop-color="#c058ff"/><stop offset="0.528" stop-color="#db47ff"/><stop offset="0.590" stop-color="#f428ff"/><stop offset="0.652" stop-color="#ff00f2"/><stop offset="0.714" stop-color="#ff00e0"/><stop offset="0.776" stop-color="#ff00d1"/><stop offset="0.838" stop-color="#ff00c6"/><stop offset="0.900" stop-color="#ff00bc"/><stop offset="0.962" stop-color="#ff00b3"/><stop offset="1.000" stop-color="#ff00af"/></linearGradient><linearGradient id="s98" gradientUnits="userSpaceOnUse" x1="664" x2="1279" y1="0" y2="0"><stop offset="0.000" stop-color="#00baff"/><stop offset="0.026" stop-color="#00b7ff"/><stop offset="0.091" stop-color="#00acff"/><stop offset="0.156" stop-color="#009cff"/><stop offset="0.221" stop-color="#0085ff"/><stop offset="0.286" stop-color="#5373ff"/><stop offset="0.351" stop-color="#8269ff"/><stop offset="0.416" stop-color="#a45eff"/><stop offset="0.481" stop-color="#c14eff"/><stop offset="0.546" stop-color="#db38ff"/><stop offset="0.611" stop-color="#f400ff"/><stop offset="0.676" stop-color="#ff00f3"/><stop offset="0.741" stop-color="#ff00e1"/><stop offset="0.806" stop-color="#ff00d3"/><stop offset="0.872" stop-color="#ff00c7"/><stop offset="0.937" stop-color="#ff00bd"/><stop offset="1.000" stop-color="#ff00b5"/></linearGradient><linearGradient id="s99" gradientUnits="userSpaceOnUse" x1="668" x2="1254" y1="0" y2="0"><stop offset="0.000" stop-color="#00b6ff"/><stop offset="0.020" stop-color="#00b3ff"/><stop offset="0.089" stop-color="#00a8ff"/><stop offset="0.157" stop-color="#0097ff"/><stop offset="0.225" stop-color="#007dff"/><stop offset="0.294" stop-color="#576dff"/><stop offset="0.362" stop-color="#8462ff"/><stop offset="0.430" stop-color="#a555ff"/><stop offset="0.498" stop-color="#c143ff"/><stop offset="0.567" stop-color="#db24ff"/><stop offset="0.635" stop-color="#f400ff"/><stop offset="0.703" stop-color="#ff00f4"/><stop offset="0.772" stop-color="#ff00e2"/><stop offset="0.840" stop-color="#ff00d4"/><stop offset="0.908" stop-color="#ff00c9"/><stop offset="0.977" stop-color="#ff00bf"/><stop offset="1.000" stop-color="#ff00bc"/></linearGradient><linearGradient id="s100" gradientUnits="userSpaceOnUse" x1="673" x2="1228" y1="0" y2="0"><stop offset="0.000" stop-color="#00b2ff"/><stop offset="0.013" stop-color="#00b0ff"/><stop offset="0.085" stop-color="#00a3ff"/><stop offset="0.157" stop-color="#0092ff"/><stop offset="0.229" stop-color="#0075ff"/><stop offset="0.301" stop-color="#5b66ff"/><stop offset="0.373" stop-color="#865aff"/><stop offset="0.445" stop-color="#a64bff"/><stop offset="0.517" stop-color="#c234ff"/><stop offset="0.589" stop-color="#dc00ff"/><stop offset="0.661" stop-color="#f400ff"/><stop offset="0.733" stop-color="#ff00f4"/><stop offset="0.805" stop-color="#ff00e3"/><stop offset="0.877" stop-color="#ff00d6"/><stop offset="0.949" stop-color="#ff00ca"/><stop offset="1.000" stop-color="#ff00c3"/></linearGradient><linearGradient id="s101" gradientUnits="userSpaceOnUse" x1="677" x2="1203" y1="0" y2="0"><stop offset="0.000" stop-color="#00adff"/><stop offset="0.081" stop-color="#009fff"/><stop offset="0.158" stop-color="#008cff"/><stop offset="0.234" stop-color="#006dff"/><stop offset="0.310" stop-color="#5f5eff"/><stop offset="0.386" stop-color="#8851ff"/><stop offset="0.462" stop-color="#a73fff"/><stop offset="0.538" stop-color="#c31fff"/><stop offset="0.614" stop-color="#dd00ff"/><stop offset="0.690" stop-color="#f500ff"/><stop offset="0.766" stop-color="#ff00f5"/><stop offset="0.842" stop-color="#ff00e4"/><stop offset="0.918" stop-color="#ff00d7"/><stop offset="1.000" stop-color="#ff00cb"/></linearGradient><linearGradient id="s102" gradientUnits="userSpaceOnUse" x1="682" x2="1178" y1="0" y2="0"><stop offset="0.000" stop-color="#00a8ff"/><stop offset="0.077" stop-color="#009aff"/><stop offset="0.158" stop-color="#0086ff"/><stop offset="0.239" stop-color="#0063ff"/><stop offset="0.319" stop-color="#6256ff"/><stop offset="0.400" stop-color="#8947ff"/><stop offset="0.481" stop-color="#a831ff"/><stop offset="0.561" stop-color="#c400ff"/><stop offset="0.642" stop-color="#de00ff"/><stop offset="0.723" stop-color="#f500ff"/><stop offset="0.803" stop-color="#ff00f5"/><stop offset="0.884" stop-color="#ff00e5"/><stop offset="0.965" stop-color="#ff00d8"/><stop offset="1.000" stop-color="#ff00d3"/></linearGradient><linearGradient id="s103" gradientUnits="userSpaceOnUse" x1="686" x2="1152" y1="0" y2="0"><stop offset="0.000" stop-color="#00a3ff"/><stop offset="0.072" stop-color="#0096ff"/><stop offset="0.158" stop-color="#0080ff"/><stop offset="0.244" stop-color="#195bff"/><stop offset="0.330" stop-color="#654eff"/><stop offset="0.416" stop-color="#8b3cff"/><stop offset="0.501" stop-color="#a91aff"/><stop offset="0.587" stop-color="#c600ff"/><stop offset="0.673" stop-color="#df00ff"/><stop offset="0.759" stop-color="#f500ff"/><stop offset="0.845" stop-color="#ff00f6"/><stop offset="0.931" stop-color="#ff00e6"/><stop offset="1.000" stop-color="#ff00dc"/></linearGradient><linearGradient id="s104" gradientUnits="userSpaceOnUse" x1="691" x2="1127" y1="0" y2="0"><stop offset="0.000" stop-color="#009dff"/><stop offset="0.066" stop-color="#0091ff"/><stop offset="0.158" stop-color="#0079ff"/><stop offset="0.249" stop-color="#2753ff"/><stop offset="0.341" stop-color="#6844ff"/><stop offset="0.433" stop-color="#8d2dff"/><stop offset="0.525" stop-color="#ac00ff"/><stop offset="0.617" stop-color="#c800ff"/><stop offset="0.709" stop-color="#e000ff"/><stop offset="0.800" stop-color="#f500ff"/><stop offset="0.892" stop-color="#ff00f6"/><stop offset="0.984" stop-color="#ff00e7"/><stop offset="1.000" stop-color="#ff00e5"/></linearGradient><linearGradient id="s105" gradientUnits="userSpaceOnUse" x1="696" x2="1102" y1="0" y2="0"><stop offset="0.000" stop-color="#0097ff"/><stop offset="0.058" stop-color="#008cff"/><stop offset="0.157" stop-color="#0072ff"/><stop offset="0.256" stop-color="#304bff"/><stop offset="0.354" stop-color="#6b39ff"/><stop offset="0.453" stop-color="#8e14ff"/><stop offset="0.552" stop-color="#af00ff"/><stop offset="0.651" stop-color="#c900ff"/><stop offset="0.749" stop-color="#e000ff"/><stop offset="0.848" stop-color="#f500ff"/><stop offset="0.947" stop-color="#ff00f7"/><stop offset="1.000" stop-color="#ff00ee"/></linearGradient><linearGradient id="s106" gradientUnits="userSpaceOnUse" x1="701" x2="1076" y1="0" y2="0"><stop offset="0.000" stop-color="#0090ff"/><stop offset="0.050" stop-color="#0087ff"/><stop offset="0.156" stop-color="#006aff"/><stop offset="0.263" stop-color="#3741ff"/><stop offset="0.370" stop-color="#6d2aff"/><stop offset="0.477" stop-color="#9200ff"/><stop offset="0.583" stop-color="#b100ff"/><stop offset="0.690" stop-color="#cb00ff"/><stop offset="0.797" stop-color="#e100ff"/><stop offset="0.903" stop-color="#f500ff"/><stop offset="1.000" stop-color="#ff00f9"/></linearGradient><linearGradient id="s107" gradientUnits="userSpaceOnUse" x1="706" x2="1051" y1="0" y2="0"><stop offset="0.000" stop-color="#0089ff"/><stop offset="0.040" stop-color="#0081ff"/><stop offset="0.156" stop-color="#0062ff"/><stop offset="0.272" stop-color="#3d36ff"/><stop offset="0.388" stop-color="#700dff"/><stop offset="0.504" stop-color="#9600ff"/><stop offset="0.620" stop-color="#b400ff"/><stop offset="0.736" stop-color="#cc00ff"/><stop offset="0.852" stop-color="#e200ff"/><stop offset="0.969" stop-color="#f500ff"/><stop offset="1.000" stop-color="#fa00ff"/></linearGradient><linearGradient id="s108" gradientUnits="userSpaceOnUse" x1="711" x2="1025" y1="0" y2="0"><stop offset="0.000" stop-color="#0081ff"/><stop offset="0.027" stop-color="#007cff"/><stop offset="0.155" stop-color="#0059ff"/><stop offset="0.282" stop-color="#4326ff"/><stop offset="0.409" stop-color="#7600ff"/><stop offset="0.537" stop-color="#9a00ff"/><stop offset="0.664" stop-color="#b600ff"/><stop offset="0.791" stop-color="#ce00ff"/><stop offset="0.919" stop-color="#e200ff"/><stop offset="1.000" stop-color="#ee00ff"/></linearGradient><linearGradient id="s109" gradientUnits="userSpaceOnUse" x1="716" x2="1000" y1="0" y2="0"><stop offset="0.000" stop-color="#0078ff"/><stop offset="0.154" stop-color="#004fff"/><stop offset="0.295" stop-color="#4800ff"/><stop offset="0.436" stop-color="#7c00ff"/><stop offset="0.577" stop-color="#9e00ff"/><stop offset="0.718" stop-color="#b800ff"/><stop offset="0.859" stop-color="#cf00ff"/><stop offset="1.000" stop-color="#e300ff"/></linearGradient><linearGradient id="s110" gradientUnits="userSpaceOnUse" x1="721" x2="975" y1="0" y2="0"><stop offset="0.000" stop-color="#006eff"/><stop offset="0.152" stop-color="#0042ff"/><stop offset="0.310" stop-color="#5300ff"/><stop offset="0.468" stop-color="#8100ff"/><stop offset="0.626" stop-color="#a100ff"/><stop offset="0.784" stop-color="#ba00ff"/><stop offset="0.942" stop-color="#d000ff"/><stop offset="1.000" stop-color="#d700ff"/></linearGradient><linearGradient id="s111" gradientUnits="userSpaceOnUse" x1="727" x2="949" y1="0" y2="0"><stop offset="0.000" stop-color="#0062ff"/><stop offset="0.147" stop-color="#0032ff"/><stop offset="0.327" stop-color="#5c00ff"/><stop offset="0.507" stop-color="#8600ff"/><stop offset="0.687" stop-color="#a400ff"/><stop offset="0.867" stop-color="#bc00ff"/><stop offset="1.000" stop-color="#cc00ff"/></linearGradient><linearGradient id="s112" gradientUnits="userSpaceOnUse" x1="733" x2="924" y1="0" y2="0"><stop offset="0.000" stop-color="#0053ff"/><stop offset="0.140" stop-color="#0015ff"/><stop offset="0.350" stop-color="#6400ff"/><stop offset="0.559" stop-color="#8a00ff"/><stop offset="0.769" stop-color="#a600ff"/><stop offset="1.000" stop-color="#c000ff"/></linearGradient><linearGradient id="s113" gradientUnits="userSpaceOnUse" x1="739" x2="899" y1="0" y2="0"><stop offset="0.000" stop-color="#003fff"/><stop offset="0.130" stop-color="#2a00ff"/><stop offset="0.380" stop-color="#6b00ff"/><stop offset="0.631" stop-color="#8e00ff"/><stop offset="0.882" stop-color="#a900ff"/><stop offset="1.000" stop-color="#b400ff"/></linearGradient><linearGradient id="s114" gradientUnits="userSpaceOnUse" x1="747" x2="873" y1="0" y2="0"><stop offset="0.000" stop-color="#0009ff"/><stop offset="0.104" stop-color="#3b00ff"/><stop offset="0.420" stop-color="#7100ff"/><stop offset="0.736" stop-color="#9200ff"/><stop offset="1.000" stop-color="#a700ff"/></linearGradient><linearGradient id="s115" gradientUnits="userSpaceOnUse" x1="756" x2="848" y1="0" y2="0"><stop offset="0.000" stop-color="#4000ff"/><stop offset="0.481" stop-color="#7600ff"/><stop offset="0.913" stop-color="#9500ff"/><stop offset="1.000" stop-color="#9a00ff"/></linearGradient><linearGradient id="s116" gradientUnits="userSpaceOnUse" x1="765" x2="823" y1="0" y2="0"><stop offset="0.000" stop-color="#5900ff"/><stop offset="0.603" stop-color="#7b00ff"/><stop offset="1.000" stop-color="#8c00ff"/></linearGradient><linearGradient id="s117" gradientUnits="userSpaceOnUse" x1="781" x2="801" y1="0" y2="0"><stop offset="0.000" stop-color="#6f00ff"/><stop offset="1.000" stop-color="#8000ff"/></linearGradient><radialGradient id="mG" cx=".38" cy=".32" r=".7"><stop offset="0" stop-color="#3cff3c"/><stop offset=".45" stop-color="#00e000"/><stop offset="1" stop-color="#009000"/></radialGradient><radialGradient id="mC" cx=".38" cy=".32" r=".7"><stop offset="0" stop-color="#e0ffff"/><stop offset=".45" stop-color="#80f0f0"/><stop offset="1" stop-color="#209090"/></radialGradient><radialGradient id="mB" cx=".38" cy=".32" r=".7"><stop offset="0" stop-color="#6070ff"/><stop offset=".45" stop-color="#2030f0"/><stop offset="1" stop-color="#0a0a90"/></radialGradient><radialGradient id="mM" cx=".38" cy=".32" r=".7"><stop offset="0" stop-color="#ff80ff"/><stop offset=".45" stop-color="#f000f0"/><stop offset="1" stop-color="#800080"/></radialGradient><radialGradient id="mR" cx=".38" cy=".32" r=".7"><stop offset="0" stop-color="#ff7060"/><stop offset=".45" stop-color="#e81010"/><stop offset="1" stop-color="#800000"/></radialGradient><radialGradient id="mY" cx=".38" cy=".32" r=".7"><stop offset="0" stop-color="#ffffb8"/><stop offset=".45" stop-color="#f2f284"/><stop offset="1" stop-color="#9a9a3c"/></radialGradient><radialGradient id="mW" cx=".38" cy=".32" r=".7"><stop offset="0" stop-color="#ffffff"/><stop offset=".45" stop-color="#f4f4f4"/><stop offset="1" stop-color="#a0a0a0"/></radialGradient><radialGradient id="mYY" cx=".38" cy=".32" r=".7"><stop offset="0" stop-color="#ffff80"/><stop offset=".45" stop-color="#f0e800"/><stop offset="1" stop-color="#807000"/></radialGradient></defs><g clip-path="url(#locus)"><g filter="url(#bl)"><rect x="664" y="500" width="26" height="4.5" fill="url(#s0)"/><rect x="621" y="504" width="115" height="4.5" fill="url(#s1)"/><rect x="600" y="508" width="159" height="4.5" fill="url(#s2)"/><rect x="586" y="512" width="192" height="4.5" fill="url(#s3)"/><rect x="574" y="516" width="224" height="4.5" fill="url(#s4)"/><rect x="566" y="520" width="252" height="4.5" fill="url(#s5)"/><rect x="558" y="524" width="278" height="4.5" fill="url(#s6)"/><rect x="554" y="528" width="298" height="4.5" fill="url(#s7)"/><rect x="550" y="532" width="317" height="4.5" fill="url(#s8)"/><rect x="546" y="536" width="335" height="4.5" fill="url(#s9)"/><rect x="542" y="540" width="354" height="4.5" fill="url(#s10)"/><rect x="539" y="544" width="372" height="4.5" fill="url(#s11)"/><rect x="537" y="548" width="388" height="4.5" fill="url(#s12)"/><rect x="535" y="552" width="403" height="4.5" fill="url(#s13)"/><rect x="533" y="556" width="418" height="4.5" fill="url(#s14)"/><rect x="531" y="560" width="432" height="4.5" fill="url(#s15)"/><rect x="530" y="564" width="446" height="4.5" fill="url(#s16)"/><rect x="529" y="568" width="459" height="4.5" fill="url(#s17)"/><rect x="528" y="572" width="473" height="4.5" fill="url(#s18)"/><rect x="527" y="576" width="486" height="4.5" fill="url(#s19)"/><rect x="526" y="580" width="499" height="4.5" fill="url(#s20)"/><rect x="525" y="584" width="513" height="4.5" fill="url(#s21)"/><rect x="525" y="588" width="526" height="4.5" fill="url(#s22)"/><rect x="524" y="592" width="539" height="4.5" fill="url(#s23)"/><rect x="524" y="596" width="552" height="4.5" fill="url(#s24)"/><rect x="524" y="600" width="564" height="4.5" fill="url(#s25)"/><rect x="524" y="604" width="577" height="4.5" fill="url(#s26)"/><rect x="524" y="608" width="590" height="4.5" fill="url(#s27)"/><rect x="524" y="612" width="602" height="4.5" fill="url(#s28)"/><rect x="524" y="616" width="615" height="4.5" fill="url(#s29)"/><rect x="524" y="620" width="627" height="4.5" fill="url(#s30)"/><rect x="524" y="624" width="639" height="4.5" fill="url(#s31)"/><rect x="524" y="628" width="650" height="4.5" fill="url(#s32)"/><rect x="524" y="632" width="662" height="4.5" fill="url(#s33)"/><rect x="524" y="636" width="674" height="4.5" fill="url(#s34)"/><rect x="524" y="640" width="685" height="4.5" fill="url(#s35)"/><rect x="524" y="644" width="697" height="4.5" fill="url(#s36)"/><rect x="525" y="648" width="708" height="4.5" fill="url(#s37)"/><rect x="525" y="652" width="720" height="4.5" fill="url(#s38)"/><rect x="526" y="656" width="731" height="4.5" fill="url(#s39)"/><rect x="526" y="660" width="743" height="4.5" fill="url(#s40)"/><rect x="526" y="664" width="754" height="4.5" fill="url(#s41)"/><rect x="527" y="668" width="765" height="4.5" fill="url(#s42)"/><rect x="527" y="672" width="776" height="4.5" fill="url(#s43)"/><rect x="528" y="676" width="787" height="4.5" fill="url(#s44)"/><rect x="529" y="680" width="798" height="4.5" fill="url(#s45)"/><rect x="530" y="684" width="809" height="4.5" fill="url(#s46)"/><rect x="531" y="688" width="820" height="4.5" fill="url(#s47)"/><rect x="531" y="692" width="831" height="4.5" fill="url(#s48)"/><rect x="532" y="696" width="842" height="4.5" fill="url(#s49)"/><rect x="534" y="700" width="852" height="4.5" fill="url(#s50)"/><rect x="535" y="704" width="862" height="4.5" fill="url(#s51)"/><rect x="536" y="708" width="873" height="4.5" fill="url(#s52)"/><rect x="538" y="712" width="883" height="4.5" fill="url(#s53)"/><rect x="539" y="716" width="893" height="4.5" fill="url(#s54)"/><rect x="540" y="720" width="904" height="4.5" fill="url(#s55)"/><rect x="542" y="724" width="914" height="4.5" fill="url(#s56)"/><rect x="544" y="728" width="923" height="4.5" fill="url(#s57)"/><rect x="546" y="732" width="933" height="4.5" fill="url(#s58)"/><rect x="548" y="736" width="943" height="4.5" fill="url(#s59)"/><rect x="550" y="740" width="952" height="4.5" fill="url(#s60)"/><rect x="552" y="744" width="962" height="4.5" fill="url(#s61)"/><rect x="554" y="748" width="971" height="4.5" fill="url(#s62)"/><rect x="556" y="752" width="981" height="4.5" fill="url(#s63)"/><rect x="558" y="756" width="991" height="4.5" fill="url(#s64)"/><rect x="560" y="760" width="1000" height="4.5" fill="url(#s65)"/><rect x="562" y="764" width="1010" height="4.5" fill="url(#s66)"/><rect x="565" y="768" width="1020" height="4.5" fill="url(#s67)"/><rect x="567" y="772" width="1029" height="4.5" fill="url(#s68)"/><rect x="569" y="776" width="1039" height="4.5" fill="url(#s69)"/><rect x="572" y="780" width="1049" height="4.5" fill="url(#s70)"/><rect x="574" y="784" width="1058" height="4.5" fill="url(#s71)"/><rect x="577" y="788" width="1067" height="4.5" fill="url(#s72)"/><rect x="579" y="792" width="1077" height="4.5" fill="url(#s73)"/><rect x="582" y="796" width="1086" height="4.5" fill="url(#s74)"/><rect x="585" y="800" width="1095" height="4.5" fill="url(#s75)"/><rect x="588" y="804" width="1104" height="4.5" fill="url(#s76)"/><rect x="591" y="808" width="1113" height="4.5" fill="url(#s77)"/><rect x="594" y="812" width="1121" height="4.5" fill="url(#s78)"/><rect x="597" y="816" width="1129" height="4.5" fill="url(#s79)"/><rect x="600" y="820" width="1126" height="4.5" fill="url(#s80)"/><rect x="603" y="824" width="1107" height="4.5" fill="url(#s81)"/><rect x="606" y="828" width="1078" height="4.5" fill="url(#s82)"/><rect x="610" y="832" width="1050" height="4.5" fill="url(#s83)"/><rect x="613" y="836" width="1021" height="4.5" fill="url(#s84)"/><rect x="616" y="840" width="992" height="4.5" fill="url(#s85)"/><rect x="620" y="844" width="963" height="4.5" fill="url(#s86)"/><rect x="623" y="848" width="935" height="4.5" fill="url(#s87)"/><rect x="627" y="852" width="906" height="4.5" fill="url(#s88)"/><rect x="630" y="856" width="877" height="4.5" fill="url(#s89)"/><rect x="634" y="860" width="848" height="4.5" fill="url(#s90)"/><rect x="637" y="864" width="819" height="4.5" fill="url(#s91)"/><rect x="641" y="868" width="790" height="4.5" fill="url(#s92)"/><rect x="644" y="872" width="761" height="4.5" fill="url(#s93)"/><rect x="648" y="876" width="732" height="4.5" fill="url(#s94)"/><rect x="652" y="880" width="703" height="4.5" fill="url(#s95)"/><rect x="656" y="884" width="674" height="4.5" fill="url(#s96)"/><rect x="660" y="888" width="644" height="4.5" fill="url(#s97)"/><rect x="664" y="892" width="615" height="4.5" fill="url(#s98)"/><rect x="668" y="896" width="586" height="4.5" fill="url(#s99)"/><rect x="673" y="900" width="556" height="4.5" fill="url(#s100)"/><rect x="677" y="904" width="526" height="4.5" fill="url(#s101)"/><rect x="682" y="908" width="496" height="4.5" fill="url(#s102)"/><rect x="686" y="912" width="466" height="4.5" fill="url(#s103)"/><rect x="691" y="916" width="436" height="4.5" fill="url(#s104)"/><rect x="696" y="920" width="405" height="4.5" fill="url(#s105)"/><rect x="701" y="924" width="375" height="4.5" fill="url(#s106)"/><rect x="706" y="928" width="344" height="4.5" fill="url(#s107)"/><rect x="711" y="932" width="314" height="4.5" fill="url(#s108)"/><rect x="716" y="936" width="284" height="4.5" fill="url(#s109)"/><rect x="721" y="940" width="253" height="4.5" fill="url(#s110)"/><rect x="727" y="944" width="222" height="4.5" fill="url(#s111)"/><rect x="733" y="948" width="191" height="4.5" fill="url(#s112)"/><rect x="739" y="952" width="159" height="4.5" fill="url(#s113)"/><rect x="747" y="956" width="127" height="4.5" fill="url(#s114)"/><rect x="756" y="960" width="93" height="4.5" fill="url(#s115)"/><rect x="765" y="964" width="57" height="4.5" fill="url(#s116)"/><rect x="781" y="968" width="20" height="4.5" fill="url(#s117)"/></g></g><path d="M792.5 967.5 L785.0 967.3 L770.0 963.0 L750.0 953.8 L730.0 940.5 L707.5 922.5 L692.5 910.5 L675.0 895.0 L657.5 877.5 L645.0 863.8 L620.0 835.0 L598.8 808.2 L582.5 785.0 L563.8 752.5 L549.5 724.0 L540.0 695.0 L535.0 670.0 L532.5 645.0 L531.8 617.5 L532.5 592.5 L535.0 580.0 L538.8 565.0 L547.5 546.2 L565.0 528.8 L585.0 518.8 L612.5 510.8 L640.0 506.2 L660.0 504.2 L680.0 504.0 L700.0 505.0 L725.0 507.5 L750.0 511.8 L825.0 527.0 L856.8 535.5 L925.0 554.2 L980.0 572.0 L1140.0 623.0 L1352.6 695.3 L1518.5 752.6 L1683.8 808.0 L1721.0 821.0Z M1586.6 795.0 L1006.7 639.2 L780.0 944.2Z" fill="#000" fill-opacity=".22" fill-rule="evenodd"/><radialGradient id="haze" gradientUnits="userSpaceOnUse" cx="1044" cy="792" r="270" gradientTransform="translate(0 522.5) scale(1 .34)"><stop offset="0" stop-color="#fff" stop-opacity=".7"/><stop offset=".45" stop-color="#fff" stop-opacity=".42"/><stop offset="1" stop-color="#fff" stop-opacity="0"/></radialGradient><path d="M792.5 967.5 L785.0 967.3 L770.0 963.0 L750.0 953.8 L730.0 940.5 L707.5 922.5 L692.5 910.5 L675.0 895.0 L657.5 877.5 L645.0 863.8 L620.0 835.0 L598.8 808.2 L582.5 785.0 L563.8 752.5 L549.5 724.0 L540.0 695.0 L535.0 670.0 L532.5 645.0 L531.8 617.5 L532.5 592.5 L535.0 580.0 L538.8 565.0 L547.5 546.2 L565.0 528.8 L585.0 518.8 L612.5 510.8 L640.0 506.2 L660.0 504.2 L680.0 504.0 L700.0 505.0 L725.0 507.5 L750.0 511.8 L825.0 527.0 L856.8 535.5 L925.0 554.2 L980.0 572.0 L1140.0 623.0 L1352.6 695.3 L1518.5 752.6 L1683.8 808.0 L1721.0 821.0Z M1586.6 795.0 L1006.7 639.2 L780.0 944.2Z" fill="url(#haze)" fill-rule="evenodd"/><clipPath id="outtri"><path clip-rule="evenodd" d="M402 443H1890V1005H402Z M1586.6 795.0 L1006.7 639.2 L780.0 944.2Z"/></clipPath><path clip-path="url(#outtri)" d="M526.5 443V1005 M691.5 443V1005 M856.5 443V1005 M1022.5 443V1005 M1187.5 443V1005 M1352.5 443V1005 M1518.5 443V1005 M1683.5 443V1005 M402 471.5H1890 M402 527.5H1890 M402 583.5H1890 M402 639.5H1890 M402 695.5H1890 M402 752.5H1890 M402 808.5H1890 M402 864.5H1890 M402 920.5H1890" stroke="#474747" stroke-width="1" shape-rendering="crispEdges" fill="none"/><linearGradient id="mgl" gradientUnits="userSpaceOnUse" x1="792" x2="1100" y1="0" y2="0"><stop offset="0" stop-color="#8a10d8"/><stop offset=".45" stop-color="#c010c0"/><stop offset="1" stop-color="#f4108c"/></linearGradient><rect x="792" y="966.700" width="1098" height="1.600" fill="url(#mgl)"/><polygon points="792.5,967.5 785.0,967.3 770.0,963.0 750.0,953.8 730.0,940.5 707.5,922.5 692.5,910.5 675.0,895.0 657.5,877.5 645.0,863.8 620.0,835.0 598.8,808.2 582.5,785.0 563.8,752.5 549.5,724.0 540.0,695.0 535.0,670.0 532.5,645.0 531.8,617.5 532.5,592.5 535.0,580.0 538.8,565.0 547.5,546.2 565.0,528.8 585.0,518.8 612.5,510.8 640.0,506.2 660.0,504.2 680.0,504.0 700.0,505.0 725.0,507.5 750.0,511.8 825.0,527.0 856.8,535.5 925.0,554.2 980.0,572.0 1140.0,623.0 1352.6,695.3 1518.5,752.6 1683.8,808.0 1721.0,821.0" fill="none" stroke="#ffb400" stroke-width="1.4" stroke-linejoin="round"/><path d="M412 791.5H1885 M1043.5 448V989" stroke="#dcdcdc" stroke-width="1" stroke-dasharray="4 3" fill="none" opacity=".8"/><path d="M1022.6 639.7L933.3 748.7" stroke="#007000" stroke-width="2.7"/><path d="M933.3 748.7L868.8 827.4" stroke="#006878" stroke-width="2.7"/><path d="M868.8 827.4L829.2 875.9" stroke="#808080" stroke-width="2.7"/><path d="M829.2 875.9L774.6 942.5" stroke="#000080" stroke-width="2.7"/><path d="M1022.6 639.7L1225.0 694.2" stroke="#007000" stroke-width="2.7"/><path d="M1225.0 694.2L1348.6 727.5" stroke="#787000" stroke-width="2.7"/><path d="M1348.6 727.5L1584.7 791.1" stroke="#800000" stroke-width="2.7"/><path d="M774.6 942.5L1017.6 897.1" stroke="#000080" stroke-width="2.7"/><path d="M1017.6 897.1L1276.9 848.7" stroke="#800080" stroke-width="2.7"/><path d="M1276.9 848.7L1584.7 791.1" stroke="#800000" stroke-width="2.7"/><path d="M1586.6 795L1006.7 639.2L780.0 944.2Z" fill="none" stroke="#fff" stroke-width="3.3" stroke-linejoin="miter"/><path d="M680 504L711 482.5" stroke="#d8d8d8" stroke-width=".9"/><text x="712" y="487" font-family="Liberation Serif,serif" font-size="12.5" fill="#f4f4f4" textLength="66" lengthAdjust="spacingAndGlyphs">520 nm</text><path d="M928 555L958 534" stroke="#d8d8d8" stroke-width=".9"/><text x="960" y="538" font-family="Liberation Serif,serif" font-size="12.5" fill="#f4f4f4" textLength="66" lengthAdjust="spacingAndGlyphs">540 nm</text><path d="M1156 629L1186 607" stroke="#d8d8d8" stroke-width=".9"/><text x="1187" y="611.5" font-family="Liberation Serif,serif" font-size="12.5" fill="#f4f4f4" textLength="66" lengthAdjust="spacingAndGlyphs">560 nm</text><path d="M1315 683L1347 661" stroke="#d8d8d8" stroke-width=".9"/><text x="1348" y="665.5" font-family="Liberation Serif,serif" font-size="12.5" fill="#f4f4f4" textLength="66" lengthAdjust="spacingAndGlyphs">580 nm</text><path d="M1425 721L1456 699" stroke="#d8d8d8" stroke-width=".9"/><text x="1457" y="703" font-family="Liberation Serif,serif" font-size="12.5" fill="#f4f4f4" textLength="66" lengthAdjust="spacingAndGlyphs">600 nm</text><path d="M1530 757L1562 735" stroke="#d8d8d8" stroke-width=".9"/><text x="1563" y="739" font-family="Liberation Serif,serif" font-size="12.5" fill="#f4f4f4" textLength="66" lengthAdjust="spacingAndGlyphs">620 nm</text><path d="M1643 795L1675 773" stroke="#d8d8d8" stroke-width=".9"/><text x="1675" y="777" font-family="Liberation Serif,serif" font-size="12.5" fill="#f4f4f4" textLength="66" lengthAdjust="spacingAndGlyphs">640 nm</text><path d="M1692 811L1725 789" stroke="#d8d8d8" stroke-width=".9"/><text x="1725" y="794.5" font-family="Liberation Serif,serif" font-size="12.5" fill="#f4f4f4" textLength="66" lengthAdjust="spacingAndGlyphs">660 nm</text><path d="M1712 818L1744 796" stroke="#d8d8d8" stroke-width=".9"/><text x="1744" y="801" font-family="Liberation Serif,serif" font-size="12.5" fill="#f4f4f4" textLength="66" lengthAdjust="spacingAndGlyphs">680 nm</text><path d="M532.5 645L503 650" stroke="#d8d8d8" stroke-width=".9"/><text x="447" y="660.5" font-family="Liberation Serif,serif" font-size="12.5" fill="#f4f4f4" textLength="66" lengthAdjust="spacingAndGlyphs">500 nm</text><path d="M657.5 877.5L627 883" stroke="#d8d8d8" stroke-width=".9"/><text x="572" y="893.5" font-family="Liberation Serif,serif" font-size="12.5" fill="#f4f4f4" textLength="66" lengthAdjust="spacingAndGlyphs">480 nm</text><path d="M730 940.5L700 946" stroke="#d8d8d8" stroke-width=".9"/><text x="646" y="956.5" font-family="Liberation Serif,serif" font-size="12.5" fill="#f4f4f4" textLength="66" lengthAdjust="spacingAndGlyphs">460 nm</text><path d="M753 956L724 962" stroke="#d8d8d8" stroke-width=".9"/><text x="670" y="972" font-family="Liberation Serif,serif" font-size="12.5" fill="#f4f4f4" textLength="66" lengthAdjust="spacingAndGlyphs">440 nm</text><path d="M770 963L740 968.5" stroke="#d8d8d8" stroke-width=".9"/><text x="685" y="980" font-family="Liberation Serif,serif" font-size="12.5" fill="#f4f4f4" textLength="66" lengthAdjust="spacingAndGlyphs">420 nm</text><text x="404" y="915.6" font-family="Liberation Serif,serif" font-size="14" fill="#f4f4f4">0.1</text><text x="404" y="859.5" font-family="Liberation Serif,serif" font-size="14" fill="#f4f4f4">0.2</text><text x="404" y="803.4" font-family="Liberation Serif,serif" font-size="14" fill="#f4f4f4">0.3</text><text x="404" y="747.3" font-family="Liberation Serif,serif" font-size="14" fill="#f4f4f4">0.4</text><text x="404" y="691.2" font-family="Liberation Serif,serif" font-size="14" fill="#f4f4f4">0.5</text><text x="404" y="635.2" font-family="Liberation Serif,serif" font-size="14" fill="#f4f4f4">0.6</text><text x="404" y="579.1" font-family="Liberation Serif,serif" font-size="14" fill="#f4f4f4">0.7</text><text x="404" y="523.0" font-family="Liberation Serif,serif" font-size="14" fill="#f4f4f4">0.8</text><text x="692.9" y="1001" font-family="Liberation Serif,serif" font-size="14" fill="#f4f4f4">0.1</text><text x="858.3" y="1001" font-family="Liberation Serif,serif" font-size="14" fill="#f4f4f4">0.2</text><text x="1023.6" y="1001" font-family="Liberation Serif,serif" font-size="14" fill="#f4f4f4">0.3</text><text x="1188.9" y="1001" font-family="Liberation Serif,serif" font-size="14" fill="#f4f4f4">0.4</text><text x="1354.2" y="1001" font-family="Liberation Serif,serif" font-size="14" fill="#f4f4f4">0.5</text><text x="1519.6" y="1001" font-family="Liberation Serif,serif" font-size="14" fill="#f4f4f4">0.6</text><text x="1684.9" y="1001" font-family="Liberation Serif,serif" font-size="14" fill="#f4f4f4">0.7</text><text x="1726" y="944" font-family="Liberation Sans,sans-serif" font-weight="700" font-size="15.5" fill="#4e4e4e" textLength="154" lengthAdjust="spacingAndGlyphs">hcfr.sourceforge.net</text><path d="M937.5 839C960 829 980 820 999 811C1015 803.500 1030 797 1044 791.400C1056 787 1067 784.500 1078.800 782C1110 773 1150 763 1183 757C1210 752 1232 748.500 1251 746.200C1266 745 1278 744 1288 743C1294 742.500 1298 742.200 1302.500 742" stroke="#000" stroke-width="1.25" fill="none"/><circle cx="999.2" cy="810.8" r="2.6" fill="#fff" stroke="#000" stroke-width="1"/><circle cx="1078.8" cy="782" r="2.6" fill="#fff" stroke="#000" stroke-width="1"/><circle cx="1250.8" cy="746.2" r="2.6" fill="#fff" stroke="#000" stroke-width="1"/><circle cx="1288" cy="743" r="2.6" fill="#fff" stroke="#000" stroke-width="1"/><circle cx="1265.8" cy="747" r="2.6" fill="#10d020" stroke="#000" stroke-width="1"/><circle cx="1062" cy="779" r="2.6" fill="#10d020" stroke="#000" stroke-width="1"/><text x="1128" y="756.5" font-family="Liberation Serif,serif" font-size="14.2" fill="#111">4000</text><text x="1225.5" y="740" font-family="Liberation Serif,serif" font-size="14.2" fill="#111">3000</text><text x="1286.5" y="737.5" font-family="Liberation Serif,serif" font-size="14.2" fill="#111">2700</text><text x="1046" y="776" font-family="Liberation Serif,serif" font-size="14.2" fill="#111">5500</text><text x="968" y="806.5" font-family="Liberation Serif,serif" font-size="14.2" fill="#111">9300</text><text x="1264" y="765.5" font-family="Liberation Serif,serif" font-size="14.2" fill="#111">A</text><text x="1106" y="796.5" font-family="Liberation Serif,serif" font-size="14.2" fill="#111">B</text><text x="1007" y="789.5" font-family="Liberation Serif,serif" font-size="14.2" fill="#111">D65</text><path d="M1043.6 791.7L775 942.300 M1043.6 791.7L1585 791" stroke="#222" stroke-width=".8" stroke-dasharray="3 3" fill="none"/><rect x="1015.5" y="632.2" width="14" height="14" fill="#48ff00"/><rect x="1018.1" y="634.8" width="8.8" height="8.8" fill="#7dff58"/><path d="M1015.5 646.2V632.2H1029.5" fill="none" stroke="#000080" stroke-width="1.2"/><path d="M1029.5 632.2V646.2H1015.5" fill="none" stroke="#ff0020" stroke-width="1.2"/><rect x="1016.7" y="644.7" width="14" height="14" fill="#48ff00"/><rect x="1019.3" y="647.3" width="8.8" height="8.8" fill="#7dff58"/><path d="M1016.7 658.7V644.7H1030.7" fill="none" stroke="#000080" stroke-width="1.2"/><path d="M1030.7 644.7V658.7H1016.7" fill="none" stroke="#ff0020" stroke-width="1.2"/><rect x="1018.8" y="658.0" width="14" height="14" fill="#48ff00"/><rect x="1021.4" y="660.6" width="8.8" height="8.8" fill="#7dff58"/><path d="M1018.8 672.0V658.0H1032.8" fill="none" stroke="#000080" stroke-width="1.2"/><path d="M1032.8 658.0V672.0H1018.8" fill="none" stroke="#ff0020" stroke-width="1.2"/><rect x="1020.5" y="672.2" width="14" height="14" fill="#48ff00"/><rect x="1023.1" y="674.8" width="8.8" height="8.8" fill="#7dff58"/><path d="M1020.5 686.2V672.2H1034.5" fill="none" stroke="#000080" stroke-width="1.2"/><path d="M1034.5 672.2V686.2H1020.5" fill="none" stroke="#ff0020" stroke-width="1.2"/><rect x="1022.5" y="688.0" width="14" height="14" fill="#48ff00"/><rect x="1025.1" y="690.6" width="8.8" height="8.8" fill="#7dff58"/><path d="M1022.5 702.0V688.0H1036.5" fill="none" stroke="#000080" stroke-width="1.2"/><path d="M1036.5 688.0V702.0H1022.5" fill="none" stroke="#ff0020" stroke-width="1.2"/><rect x="1024.7" y="703.0" width="14" height="14" fill="#48ff00"/><rect x="1027.3" y="705.6" width="8.8" height="8.8" fill="#7dff58"/><path d="M1024.7 717.0V703.0H1038.7" fill="none" stroke="#000080" stroke-width="1.2"/><path d="M1038.7 703.0V717.0H1024.7" fill="none" stroke="#ff0020" stroke-width="1.2"/><rect x="1027.2" y="719.7" width="14" height="14" fill="#48ff00"/><rect x="1029.8" y="722.3" width="8.8" height="8.8" fill="#7dff58"/><path d="M1027.2 733.7V719.7H1041.2" fill="none" stroke="#000080" stroke-width="1.2"/><path d="M1041.2 719.7V733.7H1027.2" fill="none" stroke="#ff0020" stroke-width="1.2"/><rect x="1029.7" y="735.5" width="14" height="14" fill="#48ff00"/><rect x="1032.3" y="738.1" width="8.8" height="8.8" fill="#7dff58"/><path d="M1029.7 749.5V735.5H1043.7" fill="none" stroke="#000080" stroke-width="1.2"/><path d="M1043.7 735.5V749.5H1029.7" fill="none" stroke="#ff0020" stroke-width="1.2"/><rect x="1031.3" y="751.3" width="14" height="14" fill="#48ff00"/><rect x="1033.9" y="753.9" width="8.8" height="8.8" fill="#7dff58"/><path d="M1031.3 765.3V751.3H1045.3" fill="none" stroke="#000080" stroke-width="1.2"/><path d="M1045.3 751.3V765.3H1031.3" fill="none" stroke="#ff0020" stroke-width="1.2"/><rect x="1033.0" y="768.0" width="14" height="14" fill="#48ff00"/><rect x="1035.6" y="770.6" width="8.8" height="8.8" fill="#7dff58"/><path d="M1033.0 782.0V768.0H1047.0" fill="none" stroke="#000080" stroke-width="1.2"/><path d="M1047.0 768.0V782.0H1033.0" fill="none" stroke="#ff0020" stroke-width="1.2"/><rect x="1022.4" y="786.5" width="14" height="14" fill="#40f4f4"/><rect x="1025.0" y="789.1" width="8.8" height="8.8" fill="#90ffff"/><path d="M1022.4 800.5V786.5H1036.4" fill="none" stroke="#000080" stroke-width="1.2"/><path d="M1036.4 786.5V800.5H1022.4" fill="none" stroke="#ff0020" stroke-width="1.2"/><rect x="1007.9" y="786.5" width="14" height="14" fill="#40f4f4"/><rect x="1010.5" y="789.1" width="8.8" height="8.8" fill="#90ffff"/><path d="M1007.9 800.5V786.5H1021.9" fill="none" stroke="#000080" stroke-width="1.2"/><path d="M1021.9 786.5V800.5H1007.9" fill="none" stroke="#ff0020" stroke-width="1.2"/><rect x="993.3" y="786.5" width="14" height="14" fill="#40f4f4"/><rect x="995.9" y="789.1" width="8.8" height="8.8" fill="#90ffff"/><path d="M993.3 800.5V786.5H1007.3" fill="none" stroke="#000080" stroke-width="1.2"/><path d="M1007.3 786.5V800.5H993.3" fill="none" stroke="#ff0020" stroke-width="1.2"/><rect x="978.7" y="786.5" width="14" height="14" fill="#40f4f4"/><rect x="981.3" y="789.1" width="8.8" height="8.8" fill="#90ffff"/><path d="M978.7 800.5V786.5H992.7" fill="none" stroke="#000080" stroke-width="1.2"/><path d="M992.7 786.5V800.5H978.7" fill="none" stroke="#ff0020" stroke-width="1.2"/><rect x="964.1" y="786.5" width="14" height="14" fill="#40f4f4"/><rect x="966.8" y="789.1" width="8.8" height="8.8" fill="#90ffff"/><path d="M964.1 800.5V786.5H978.1" fill="none" stroke="#000080" stroke-width="1.2"/><path d="M978.1 786.5V800.5H964.1" fill="none" stroke="#ff0020" stroke-width="1.2"/><rect x="949.6" y="786.5" width="14" height="14" fill="#40f4f4"/><rect x="952.2" y="789.1" width="8.8" height="8.8" fill="#90ffff"/><path d="M949.6 800.5V786.5H963.6" fill="none" stroke="#000080" stroke-width="1.2"/><path d="M963.6 786.5V800.5H949.6" fill="none" stroke="#ff0020" stroke-width="1.2"/><rect x="935.0" y="786.5" width="14" height="14" fill="#40f4f4"/><rect x="937.6" y="789.1" width="8.8" height="8.8" fill="#90ffff"/><path d="M935.0 800.5V786.5H949.0" fill="none" stroke="#000080" stroke-width="1.2"/><path d="M949.0 786.5V800.5H935.0" fill="none" stroke="#ff0020" stroke-width="1.2"/><rect x="920.4" y="786.5" width="14" height="14" fill="#40f4f4"/><rect x="923.0" y="789.1" width="8.8" height="8.8" fill="#90ffff"/><path d="M920.4 800.5V786.5H934.4" fill="none" stroke="#000080" stroke-width="1.2"/><path d="M934.4 786.5V800.5H920.4" fill="none" stroke="#ff0020" stroke-width="1.2"/><rect x="905.9" y="786.5" width="14" height="14" fill="#40f4f4"/><rect x="908.5" y="789.1" width="8.8" height="8.8" fill="#90ffff"/><path d="M905.9 800.5V786.5H919.9" fill="none" stroke="#000080" stroke-width="1.2"/><path d="M919.9 786.5V800.5H905.9" fill="none" stroke="#ff0020" stroke-width="1.2"/><rect x="891.3" y="786.5" width="14" height="14" fill="#40f4f4"/><rect x="893.9" y="789.1" width="8.8" height="8.8" fill="#90ffff"/><path d="M891.3 800.5V786.5H905.3" fill="none" stroke="#000080" stroke-width="1.2"/><path d="M905.3 786.5V800.5H891.3" fill="none" stroke="#ff0020" stroke-width="1.2"/><circle cx="877.4" cy="882.6" r="6.300000000000001" fill="#000" fill-opacity=".32"/><circle cx="876.7" cy="881.7" r="5.2" fill="url(#mW)" stroke="#000" stroke-opacity="0.85" stroke-width="0.9"/><rect x="1007.1" y="802.1" width="12.400" height="12.400" fill="#8a80ff" fill-opacity=".6" stroke="#ff0020" stroke-width="1"/><rect x="1007.7" y="802.4" width="11" height="11" fill="none" stroke="#3008e0" stroke-width="2.200"/><rect x="979.1" y="818.5" width="12.400" height="12.400" fill="#8a80ff" fill-opacity=".6" stroke="#ff0020" stroke-width="1"/><rect x="979.7" y="818.8" width="11" height="11" fill="none" stroke="#3008e0" stroke-width="2.200"/><rect x="951.3" y="834.1" width="12.400" height="12.400" fill="#8a80ff" fill-opacity=".6" stroke="#ff0020" stroke-width="1"/><rect x="951.9" y="834.4" width="11" height="11" fill="none" stroke="#3008e0" stroke-width="2.200"/><rect x="923.5" y="849.1" width="12.400" height="12.400" fill="#8a80ff" fill-opacity=".6" stroke="#ff0020" stroke-width="1"/><rect x="924.1" y="849.4" width="11" height="11" fill="none" stroke="#3008e0" stroke-width="2.200"/><rect x="891.3" y="867.1" width="12.400" height="12.400" fill="#8a80ff" fill-opacity=".6" stroke="#ff0020" stroke-width="1"/><rect x="891.9" y="867.4" width="11" height="11" fill="none" stroke="#3008e0" stroke-width="2.200"/><rect x="863.8" y="882.1" width="12.400" height="12.400" fill="#8a80ff" fill-opacity=".6" stroke="#ff0020" stroke-width="1"/><rect x="864.4" y="882.4" width="11" height="11" fill="none" stroke="#3008e0" stroke-width="2.200"/><rect x="838.5" y="897.1" width="12.400" height="12.400" fill="#8a80ff" fill-opacity=".6" stroke="#ff0020" stroke-width="1"/><rect x="839.1" y="897.4" width="11" height="11" fill="none" stroke="#3008e0" stroke-width="2.200"/><rect x="812.1" y="912.1" width="12.400" height="12.400" fill="#8a80ff" fill-opacity=".6" stroke="#ff0020" stroke-width="1"/><rect x="812.7" y="912.4" width="11" height="11" fill="none" stroke="#3008e0" stroke-width="2.200"/><rect x="788.0" y="924.6" width="12.400" height="12.400" fill="#8a80ff" fill-opacity=".6" stroke="#ff0020" stroke-width="1"/><rect x="788.6" y="924.9" width="11" height="11" fill="none" stroke="#3008e0" stroke-width="2.200"/><rect x="767.1" y="937.1" width="12.400" height="12.400" fill="#8a80ff" fill-opacity=".6" stroke="#ff0020" stroke-width="1"/><rect x="767.7" y="937.4" width="11" height="11" fill="none" stroke="#3008e0" stroke-width="2.200"/><rect x="1036.2" y="793.8" width="13.5" height="13.5" fill="#ff30e8"/><rect x="1038.8" y="796.4" width="8.3" height="8.3" fill="#ff90f0"/><path d="M1036.2 807.2V793.8H1049.8" fill="none" stroke="#000080" stroke-width="1.2"/><path d="M1049.8 793.8V807.2H1036.2" fill="none" stroke="#ff0060" stroke-width="1.2"/><rect x="1037.5" y="805.0" width="13.5" height="13.5" fill="#ff30e8"/><rect x="1040.0" y="807.6" width="8.3" height="8.3" fill="#ff90f0"/><path d="M1037.5 818.5V805.0H1051.0" fill="none" stroke="#000080" stroke-width="1.2"/><path d="M1051.0 805.0V818.5H1037.5" fill="none" stroke="#ff0060" stroke-width="1.2"/><rect x="1039.0" y="815.0" width="13.5" height="13.5" fill="#ff30e8"/><rect x="1041.6" y="817.6" width="8.3" height="8.3" fill="#ff90f0"/><path d="M1039.0 828.5V815.0H1052.5" fill="none" stroke="#000080" stroke-width="1.2"/><path d="M1052.5 815.0V828.5H1039.0" fill="none" stroke="#ff0060" stroke-width="1.2"/><rect x="1040.8" y="825.0" width="13.5" height="13.5" fill="#ff30e8"/><rect x="1043.3" y="827.6" width="8.3" height="8.3" fill="#ff90f0"/><path d="M1040.8 838.5V825.0H1054.2" fill="none" stroke="#000080" stroke-width="1.2"/><path d="M1054.2 825.0V838.5H1040.8" fill="none" stroke="#ff0060" stroke-width="1.2"/><rect x="1042.5" y="834.0" width="13.5" height="13.5" fill="#ff30e8"/><rect x="1045.0" y="836.6" width="8.3" height="8.3" fill="#ff90f0"/><path d="M1042.5 847.5V834.0H1056.0" fill="none" stroke="#000080" stroke-width="1.2"/><path d="M1056.0 834.0V847.5H1042.5" fill="none" stroke="#ff0060" stroke-width="1.2"/><rect x="1044.0" y="845.0" width="13.5" height="13.5" fill="#ff30e8"/><rect x="1046.6" y="847.6" width="8.3" height="8.3" fill="#ff90f0"/><path d="M1044.0 858.5V845.0H1057.5" fill="none" stroke="#000080" stroke-width="1.2"/><path d="M1057.5 845.0V858.5H1044.0" fill="none" stroke="#ff0060" stroke-width="1.2"/><rect x="1045.8" y="855.0" width="13.5" height="13.5" fill="#ff30e8"/><rect x="1048.3" y="857.6" width="8.3" height="8.3" fill="#ff90f0"/><path d="M1045.8 868.5V855.0H1059.2" fill="none" stroke="#000080" stroke-width="1.2"/><path d="M1059.2 855.0V868.5H1045.8" fill="none" stroke="#ff0060" stroke-width="1.2"/><rect x="1047.5" y="864.0" width="13.5" height="13.5" fill="#ff30e8"/><rect x="1050.0" y="866.6" width="8.3" height="8.3" fill="#ff90f0"/><path d="M1047.5 877.5V864.0H1061.0" fill="none" stroke="#000080" stroke-width="1.2"/><path d="M1061.0 864.0V877.5H1047.5" fill="none" stroke="#ff0060" stroke-width="1.2"/><rect x="1048.2" y="873.2" width="13.5" height="13.5" fill="#ff30e8"/><rect x="1050.8" y="875.9" width="8.3" height="8.3" fill="#ff90f0"/><path d="M1048.2 886.8V873.2H1061.8" fill="none" stroke="#000080" stroke-width="1.2"/><path d="M1061.8 873.2V886.8H1048.2" fill="none" stroke="#ff0060" stroke-width="1.2"/><rect x="1050.0" y="884.0" width="13.5" height="13.5" fill="#ff30e8"/><rect x="1052.5" y="886.6" width="8.3" height="8.3" fill="#ff90f0"/><path d="M1050.0 897.5V884.0H1063.5" fill="none" stroke="#000080" stroke-width="1.2"/><path d="M1063.5 884.0V897.5H1050.0" fill="none" stroke="#ff0060" stroke-width="1.2"/><rect x="1055.5" y="774.7" width="14" height="14" fill="#f8dc00"/><rect x="1058.1" y="777.3" width="8.8" height="8.8" fill="#f4e860"/><path d="M1055.5 788.7V774.7H1069.5" fill="none" stroke="#000080" stroke-width="1.2"/><path d="M1069.5 774.7V788.7H1055.5" fill="none" stroke="#ff0020" stroke-width="1.2"/><rect x="1074.7" y="763.0" width="14" height="14" fill="#f8dc00"/><rect x="1077.3" y="765.6" width="8.8" height="8.8" fill="#f4e860"/><path d="M1074.7 777.0V763.0H1088.7" fill="none" stroke="#000080" stroke-width="1.2"/><path d="M1088.7 763.0V777.0H1074.7" fill="none" stroke="#ff0020" stroke-width="1.2"/><rect x="1092.2" y="753.0" width="14" height="14" fill="#f8dc00"/><rect x="1094.8" y="755.6" width="8.8" height="8.8" fill="#f4e860"/><path d="M1092.2 767.0V753.0H1106.2" fill="none" stroke="#000080" stroke-width="1.2"/><path d="M1106.2 753.0V767.0H1092.2" fill="none" stroke="#ff0020" stroke-width="1.2"/><rect x="1111.3" y="742.2" width="14" height="14" fill="#f8dc00"/><rect x="1113.9" y="744.8" width="8.8" height="8.8" fill="#f4e860"/><path d="M1111.3 756.2V742.2H1125.3" fill="none" stroke="#000080" stroke-width="1.2"/><path d="M1125.3 742.2V756.2H1111.3" fill="none" stroke="#ff0020" stroke-width="1.2"/><rect x="1129.7" y="732.2" width="14" height="14" fill="#f8dc00"/><rect x="1132.3" y="734.8" width="8.8" height="8.8" fill="#f4e860"/><path d="M1129.7 746.2V732.2H1143.7" fill="none" stroke="#000080" stroke-width="1.2"/><path d="M1143.7 732.2V746.2H1129.7" fill="none" stroke="#ff0020" stroke-width="1.2"/><rect x="1147.2" y="722.2" width="14" height="14" fill="#f8dc00"/><rect x="1149.8" y="724.8" width="8.8" height="8.8" fill="#f4e860"/><path d="M1147.2 736.2V722.2H1161.2" fill="none" stroke="#000080" stroke-width="1.2"/><path d="M1161.2 722.2V736.2H1147.2" fill="none" stroke="#ff0020" stroke-width="1.2"/><rect x="1164.7" y="712.2" width="14" height="14" fill="#f8dc00"/><rect x="1167.3" y="714.8" width="8.8" height="8.8" fill="#f4e860"/><path d="M1164.7 726.2V712.2H1178.7" fill="none" stroke="#000080" stroke-width="1.2"/><path d="M1178.7 712.2V726.2H1164.7" fill="none" stroke="#ff0020" stroke-width="1.2"/><rect x="1182.2" y="701.3" width="14" height="14" fill="#f8dc00"/><rect x="1184.8" y="703.9" width="8.8" height="8.8" fill="#f4e860"/><path d="M1182.2 715.3V701.3H1196.2" fill="none" stroke="#000080" stroke-width="1.2"/><path d="M1196.2 701.3V715.3H1182.2" fill="none" stroke="#ff0020" stroke-width="1.2"/><rect x="1198.8" y="693.0" width="14" height="14" fill="#f8dc00"/><rect x="1201.4" y="695.6" width="8.8" height="8.8" fill="#f4e860"/><path d="M1198.8 707.0V693.0H1212.8" fill="none" stroke="#000080" stroke-width="1.2"/><path d="M1212.8 693.0V707.0H1198.8" fill="none" stroke="#ff0020" stroke-width="1.2"/><rect x="1212.2" y="685.5" width="14" height="14" fill="#f8dc00"/><rect x="1214.8" y="688.1" width="8.8" height="8.8" fill="#f4e860"/><path d="M1212.2 699.5V685.5H1226.2" fill="none" stroke="#000080" stroke-width="1.2"/><path d="M1226.2 685.5V699.5H1212.2" fill="none" stroke="#ff0020" stroke-width="1.2"/><rect x="1097.5" y="785.5" width="11" height="11" fill="none" stroke="#ff0010" stroke-width="2.400"/><path d="M1096.5 784.3h13" stroke="#000080" stroke-width="1"/><rect x="1154.3" y="785.5" width="11" height="11" fill="none" stroke="#ff0010" stroke-width="2.400"/><path d="M1153.3 784.3h13" stroke="#000080" stroke-width="1"/><rect x="1213.5" y="785.5" width="11" height="11" fill="none" stroke="#ff0010" stroke-width="2.400"/><path d="M1212.5 784.3h13" stroke="#000080" stroke-width="1"/><rect x="1271.1" y="785.5" width="11" height="11" fill="none" stroke="#ff0010" stroke-width="2.400"/><path d="M1270.1 784.3h13" stroke="#000080" stroke-width="1"/><rect x="1330.5" y="785.5" width="11" height="11" fill="none" stroke="#ff0010" stroke-width="2.400"/><path d="M1329.5 784.3h13" stroke="#000080" stroke-width="1"/><rect x="1387.1" y="785.5" width="11" height="11" fill="none" stroke="#ff0010" stroke-width="2.400"/><path d="M1386.1 784.3h13" stroke="#000080" stroke-width="1"/><rect x="1441.3" y="785.5" width="11" height="11" fill="none" stroke="#ff0010" stroke-width="2.400"/><path d="M1440.3 784.3h13" stroke="#000080" stroke-width="1"/><rect x="1489.5" y="785.5" width="11" height="11" fill="none" stroke="#ff0010" stroke-width="2.400"/><path d="M1488.5 784.3h13" stroke="#000080" stroke-width="1"/><rect x="1537.5" y="785.5" width="11" height="11" fill="none" stroke="#ff0010" stroke-width="2.400"/><path d="M1536.5 784.3h13" stroke="#000080" stroke-width="1"/><rect x="1578.7" y="785.0" width="11" height="11" fill="none" stroke="#ff0010" stroke-width="2.400"/><path d="M1577.7 783.8h13" stroke="#000080" stroke-width="1"/><rect x="1091.8" y="786.8" width="13" height="13" fill="none" stroke="#c8961e" stroke-width="1.100"/><rect x="1093.3" y="788.3" width="10" height="10" fill="none" stroke="#56603c" stroke-width="1.300"/><path d="M1091.8 786.8l2.500 2.500M1104.8 786.8l-2.500 2.500M1091.8 799.8l2.500-2.500M1104.8 799.8l-2.500-2.500" stroke="#e8dcc0" stroke-width=".7"/><rect x="1115.2" y="767.7" width="13" height="13" fill="none" stroke="#c8961e" stroke-width="1.100"/><rect x="1116.7" y="769.2" width="10" height="10" fill="none" stroke="#56603c" stroke-width="1.300"/><path d="M1115.2 767.7l2.500 2.500M1128.2 767.7l-2.500 2.500M1115.2 780.7l2.500-2.500M1128.2 780.7l-2.500-2.500" stroke="#e8dcc0" stroke-width=".7"/><rect x="1146.8" y="756.8" width="13" height="13" fill="none" stroke="#c8961e" stroke-width="1.100"/><rect x="1148.3" y="758.3" width="10" height="10" fill="none" stroke="#56603c" stroke-width="1.300"/><path d="M1146.8 756.8l2.500 2.500M1159.8 756.8l-2.500 2.500M1146.8 769.8l2.500-2.500M1159.8 769.8l-2.500-2.500" stroke="#e8dcc0" stroke-width=".7"/><rect x="1155.2" y="759.3" width="13" height="13" fill="none" stroke="#c8961e" stroke-width="1.100"/><rect x="1156.7" y="760.8" width="10" height="10" fill="none" stroke="#56603c" stroke-width="1.300"/><path d="M1155.2 759.3l2.500 2.500M1168.2 759.3l-2.500 2.500M1155.2 772.3l2.500-2.500M1168.2 772.3l-2.500-2.500" stroke="#e8dcc0" stroke-width=".7"/><rect x="1169.3" y="757.7" width="13" height="13" fill="none" stroke="#c8961e" stroke-width="1.100"/><rect x="1170.8" y="759.2" width="10" height="10" fill="none" stroke="#56603c" stroke-width="1.300"/><path d="M1169.3 757.7l2.500 2.500M1182.3 757.7l-2.500 2.500M1169.3 770.7l2.500-2.500M1182.3 770.7l-2.500-2.500" stroke="#e8dcc0" stroke-width=".7"/><rect x="1141.0" y="777.7" width="13" height="13" fill="none" stroke="#c8961e" stroke-width="1.100"/><rect x="1142.5" y="779.2" width="10" height="10" fill="none" stroke="#56603c" stroke-width="1.300"/><path d="M1141.0 777.7l2.500 2.500M1154.0 777.7l-2.500 2.500M1141.0 790.7l2.500-2.500M1154.0 790.7l-2.500-2.500" stroke="#e8dcc0" stroke-width=".7"/><rect x="1180.2" y="777.7" width="13" height="13" fill="none" stroke="#c8961e" stroke-width="1.100"/><rect x="1181.7" y="779.2" width="10" height="10" fill="none" stroke="#56603c" stroke-width="1.300"/><path d="M1180.2 777.7l2.500 2.500M1193.2 777.7l-2.500 2.500M1180.2 790.7l2.500-2.500M1193.2 790.7l-2.500-2.500" stroke="#e8dcc0" stroke-width=".7"/><rect x="1193.5" y="764.3" width="13" height="13" fill="none" stroke="#c8961e" stroke-width="1.100"/><rect x="1195.0" y="765.8" width="10" height="10" fill="none" stroke="#56603c" stroke-width="1.300"/><path d="M1193.5 764.3l2.500 2.500M1206.5 764.3l-2.500 2.500M1193.5 777.3l2.500-2.500M1206.5 777.3l-2.500-2.500" stroke="#e8dcc0" stroke-width=".7"/><rect x="1209.3" y="771.8" width="13" height="13" fill="none" stroke="#c8961e" stroke-width="1.100"/><rect x="1210.8" y="773.3" width="10" height="10" fill="none" stroke="#56603c" stroke-width="1.300"/><path d="M1209.3 771.8l2.500 2.500M1222.3 771.8l-2.500 2.500M1209.3 784.8l2.500-2.500M1222.3 784.8l-2.500-2.500" stroke="#e8dcc0" stroke-width=".7"/><rect x="1226.0" y="780.2" width="13" height="13" fill="none" stroke="#c8961e" stroke-width="1.100"/><rect x="1227.5" y="781.7" width="10" height="10" fill="none" stroke="#56603c" stroke-width="1.300"/><path d="M1226.0 780.2l2.500 2.500M1239.0 780.2l-2.500 2.500M1226.0 793.2l2.500-2.500M1239.0 793.2l-2.500-2.500" stroke="#e8dcc0" stroke-width=".7"/><rect x="1232.7" y="755.2" width="13" height="13" fill="none" stroke="#c8961e" stroke-width="1.100"/><rect x="1234.2" y="756.7" width="10" height="10" fill="none" stroke="#56603c" stroke-width="1.300"/><path d="M1232.7 755.2l2.500 2.500M1245.7 755.2l-2.500 2.500M1232.7 768.2l2.500-2.500M1245.7 768.2l-2.500-2.500" stroke="#e8dcc0" stroke-width=".7"/><rect x="1240.2" y="755.2" width="13" height="13" fill="none" stroke="#c8961e" stroke-width="1.100"/><rect x="1241.7" y="756.7" width="10" height="10" fill="none" stroke="#56603c" stroke-width="1.300"/><path d="M1240.2 755.2l2.500 2.500M1253.2 755.2l-2.500 2.500M1240.2 768.2l2.500-2.500M1253.2 768.2l-2.500-2.500" stroke="#e8dcc0" stroke-width=".7"/><rect x="1250.2" y="752.7" width="13" height="13" fill="none" stroke="#c8961e" stroke-width="1.100"/><rect x="1251.7" y="754.2" width="10" height="10" fill="none" stroke="#56603c" stroke-width="1.300"/><path d="M1250.2 752.7l2.500 2.500M1263.2 752.7l-2.500 2.500M1250.2 765.7l2.500-2.500M1263.2 765.7l-2.500-2.500" stroke="#e8dcc0" stroke-width=".7"/><rect x="1263.5" y="754.8" width="13" height="13" fill="none" stroke="#c8961e" stroke-width="1.100"/><rect x="1265.0" y="756.3" width="10" height="10" fill="none" stroke="#56603c" stroke-width="1.300"/><path d="M1263.5 754.8l2.500 2.500M1276.5 754.8l-2.500 2.500M1263.5 767.8l2.500-2.500M1276.5 767.8l-2.500-2.500" stroke="#e8dcc0" stroke-width=".7"/><rect x="1266.0" y="773.5" width="13" height="13" fill="none" stroke="#c8961e" stroke-width="1.100"/><rect x="1267.5" y="775.0" width="10" height="10" fill="none" stroke="#56603c" stroke-width="1.300"/><path d="M1266.0 773.5l2.500 2.500M1279.0 773.5l-2.500 2.500M1266.0 786.5l2.500-2.500M1279.0 786.5l-2.500-2.500" stroke="#e8dcc0" stroke-width=".7"/><rect x="1288.5" y="767.7" width="13" height="13" fill="none" stroke="#c8961e" stroke-width="1.100"/><rect x="1290.0" y="769.2" width="10" height="10" fill="none" stroke="#56603c" stroke-width="1.300"/><path d="M1288.5 767.7l2.500 2.500M1301.5 767.7l-2.500 2.500M1288.5 780.7l2.500-2.500M1301.5 780.7l-2.500-2.500" stroke="#e8dcc0" stroke-width=".7"/><rect x="1291.8" y="759.3" width="13" height="13" fill="none" stroke="#c8961e" stroke-width="1.100"/><rect x="1293.3" y="760.8" width="10" height="10" fill="none" stroke="#56603c" stroke-width="1.300"/><path d="M1291.8 759.3l2.500 2.500M1304.8 759.3l-2.500 2.500M1291.8 772.3l2.500-2.500M1304.8 772.3l-2.500-2.500" stroke="#e8dcc0" stroke-width=".7"/><rect x="1313.5" y="739.3" width="13" height="13" fill="none" stroke="#c8961e" stroke-width="1.100"/><rect x="1315.0" y="740.8" width="10" height="10" fill="none" stroke="#56603c" stroke-width="1.300"/><path d="M1313.5 739.3l2.500 2.500M1326.5 739.3l-2.500 2.500M1313.5 752.3l2.500-2.500M1326.5 752.3l-2.500-2.500" stroke="#e8dcc0" stroke-width=".7"/><rect x="1317.7" y="758.5" width="13" height="13" fill="none" stroke="#c8961e" stroke-width="1.100"/><rect x="1319.2" y="760.0" width="10" height="10" fill="none" stroke="#56603c" stroke-width="1.300"/><path d="M1317.7 758.5l2.500 2.500M1330.7 758.5l-2.500 2.500M1317.7 771.5l2.500-2.500M1330.7 771.5l-2.500-2.500" stroke="#e8dcc0" stroke-width=".7"/><rect x="1333.5" y="746.0" width="13" height="13" fill="none" stroke="#c8961e" stroke-width="1.100"/><rect x="1335.0" y="747.5" width="10" height="10" fill="none" stroke="#56603c" stroke-width="1.300"/><path d="M1333.5 746.0l2.500 2.500M1346.5 746.0l-2.500 2.500M1333.5 759.0l2.500-2.500M1346.5 759.0l-2.500-2.500" stroke="#e8dcc0" stroke-width=".7"/><rect x="1103.5" y="769.5" width="13" height="13" fill="none" stroke="#c8961e" stroke-width="1.100"/><rect x="1105.0" y="771.0" width="10" height="10" fill="none" stroke="#56603c" stroke-width="1.300"/><path d="M1103.5 769.5l2.500 2.500M1116.5 769.5l-2.500 2.500M1103.5 782.5l2.500-2.500M1116.5 782.5l-2.500-2.500" stroke="#e8dcc0" stroke-width=".7"/><rect x="1133.5" y="760.5" width="13" height="13" fill="none" stroke="#c8961e" stroke-width="1.100"/><rect x="1135.0" y="762.0" width="10" height="10" fill="none" stroke="#56603c" stroke-width="1.300"/><path d="M1133.5 760.5l2.500 2.500M1146.5 760.5l-2.500 2.500M1133.5 773.5l2.500-2.500M1146.5 773.5l-2.500-2.500" stroke="#e8dcc0" stroke-width=".7"/><rect x="1146.5" y="762.5" width="13" height="13" fill="none" stroke="#c8961e" stroke-width="1.100"/><rect x="1148.0" y="764.0" width="10" height="10" fill="none" stroke="#56603c" stroke-width="1.300"/><path d="M1146.5 762.5l2.500 2.500M1159.5 762.5l-2.500 2.500M1146.5 775.5l2.500-2.500M1159.5 775.5l-2.500-2.500" stroke="#e8dcc0" stroke-width=".7"/><rect x="1289.5" y="760.5" width="13" height="13" fill="none" stroke="#c8961e" stroke-width="1.100"/><rect x="1291.0" y="762.0" width="10" height="10" fill="none" stroke="#56603c" stroke-width="1.300"/><path d="M1289.5 760.5l2.500 2.500M1302.5 760.5l-2.500 2.500M1289.5 773.5l2.500-2.500M1302.5 773.5l-2.500-2.500" stroke="#e8dcc0" stroke-width=".7"/><circle cx="1097.4" cy="793.4" r="7.4" fill="#000" fill-opacity=".32"/><circle cx="1096.7" cy="792.5" r="6.3" fill="url(#mR)" stroke="#000" stroke-opacity="0.5" stroke-width="0.6"/><circle cx="1152.6" cy="795.9" r="7.4" fill="#000" fill-opacity=".32"/><circle cx="1151.9" cy="795.0" r="6.3" fill="url(#mR)" stroke="#000" stroke-opacity="0.5" stroke-width="0.6"/><circle cx="1210.0" cy="795.9" r="7.4" fill="#000" fill-opacity=".32"/><circle cx="1209.3" cy="795.0" r="6.3" fill="url(#mR)" stroke="#000" stroke-opacity="0.5" stroke-width="0.6"/><circle cx="1266.6" cy="794.7" r="7.4" fill="#000" fill-opacity=".32"/><circle cx="1265.9" cy="793.8" r="6.3" fill="url(#mR)" stroke="#000" stroke-opacity="0.5" stroke-width="0.6"/><circle cx="1332.3" cy="794.7" r="7.4" fill="#000" fill-opacity=".32"/><circle cx="1331.6" cy="793.8" r="6.3" fill="url(#mR)" stroke="#000" stroke-opacity="0.5" stroke-width="0.6"/><circle cx="1390.9" cy="794.7" r="7.4" fill="#000" fill-opacity=".32"/><circle cx="1390.2" cy="793.8" r="6.3" fill="url(#mR)" stroke="#000" stroke-opacity="0.5" stroke-width="0.6"/><circle cx="1439.6" cy="794.7" r="7.4" fill="#000" fill-opacity=".32"/><circle cx="1438.9" cy="793.8" r="6.3" fill="url(#mR)" stroke="#000" stroke-opacity="0.5" stroke-width="0.6"/><circle cx="1489.9" cy="794.7" r="7.4" fill="#000" fill-opacity=".32"/><circle cx="1489.2" cy="793.8" r="6.3" fill="url(#mR)" stroke="#000" stroke-opacity="0.5" stroke-width="0.6"/><circle cx="1536.6" cy="794.7" r="7.4" fill="#000" fill-opacity=".32"/><circle cx="1535.9" cy="793.8" r="6.3" fill="url(#mR)" stroke="#000" stroke-opacity="0.5" stroke-width="0.6"/><circle cx="1587.3" cy="795.9" r="7.4" fill="#000" fill-opacity=".32"/><circle cx="1586.6" cy="795.0" r="6.3" fill="url(#mR)" stroke="#000" stroke-opacity="0.5" stroke-width="0.6"/><circle cx="1007.4" cy="640.1" r="7.4" fill="#000" fill-opacity=".32"/><circle cx="1006.7" cy="639.2" r="6.3" fill="url(#mG)" stroke="#000" stroke-opacity="0.5" stroke-width="0.6"/><circle cx="1007.2" cy="640.2" r=".9" fill="#003000"/><circle cx="1012.4" cy="653.4" r="7.4" fill="#000" fill-opacity=".32"/><circle cx="1011.7" cy="652.5" r="6.3" fill="url(#mG)" stroke="#000" stroke-opacity="0.5" stroke-width="0.6"/><circle cx="1012.2" cy="653.5" r=".9" fill="#003000"/><circle cx="1014.9" cy="668.4" r="7.4" fill="#000" fill-opacity=".32"/><circle cx="1014.2" cy="667.5" r="6.3" fill="url(#mG)" stroke="#000" stroke-opacity="0.5" stroke-width="0.6"/><circle cx="1014.7" cy="668.5" r=".9" fill="#003000"/><circle cx="1019.9" cy="683.4" r="7.4" fill="#000" fill-opacity=".32"/><circle cx="1019.2" cy="682.5" r="6.3" fill="url(#mG)" stroke="#000" stroke-opacity="0.5" stroke-width="0.6"/><circle cx="1019.7" cy="683.5" r=".9" fill="#003000"/><circle cx="1024.0" cy="698.4" r="7.4" fill="#000" fill-opacity=".32"/><circle cx="1023.3" cy="697.5" r="6.3" fill="url(#mG)" stroke="#000" stroke-opacity="0.5" stroke-width="0.6"/><circle cx="1023.8" cy="698.5" r=".9" fill="#003000"/><circle cx="1028.7" cy="712.6" r="7.4" fill="#000" fill-opacity=".32"/><circle cx="1028.0" cy="711.7" r="6.3" fill="url(#mG)" stroke="#000" stroke-opacity="0.5" stroke-width="0.6"/><circle cx="1028.5" cy="712.7" r=".9" fill="#003000"/><circle cx="1034.0" cy="729.2" r="7.4" fill="#000" fill-opacity=".32"/><circle cx="1033.3" cy="728.3" r="6.3" fill="url(#mG)" stroke="#000" stroke-opacity="0.5" stroke-width="0.6"/><circle cx="1033.8" cy="729.3" r=".9" fill="#003000"/><circle cx="1034.9" cy="746.7" r="7.4" fill="#000" fill-opacity=".32"/><circle cx="1034.2" cy="745.8" r="6.3" fill="url(#mG)" stroke="#000" stroke-opacity="0.5" stroke-width="0.6"/><circle cx="1034.7" cy="746.8" r=".9" fill="#003000"/><circle cx="1040.7" cy="760.1" r="7.4" fill="#000" fill-opacity=".32"/><circle cx="1040.0" cy="759.2" r="6.3" fill="url(#mG)" stroke="#000" stroke-opacity="0.5" stroke-width="0.6"/><circle cx="1040.5" cy="760.2" r=".9" fill="#003000"/><circle cx="1043.2" cy="777.6" r="7.4" fill="#000" fill-opacity=".32"/><circle cx="1042.5" cy="776.7" r="6.3" fill="url(#mG)" stroke="#000" stroke-opacity="0.5" stroke-width="0.6"/><circle cx="1043.0" cy="777.7" r=".9" fill="#003000"/><circle cx="895.7" cy="790.4" r="7.4" fill="#000" fill-opacity=".32"/><circle cx="895.0" cy="789.5" r="6.3" fill="url(#mC)" stroke="#000" stroke-opacity="0.5" stroke-width="0.6"/><circle cx="895.5" cy="790.5" r=".9" fill="#800000"/><circle cx="910.7" cy="790.9" r="7.4" fill="#000" fill-opacity=".32"/><circle cx="910.0" cy="790.0" r="6.3" fill="url(#mC)" stroke="#000" stroke-opacity="0.5" stroke-width="0.6"/><circle cx="910.5" cy="791.0" r=".9" fill="#800000"/><circle cx="925.7" cy="790.4" r="7.4" fill="#000" fill-opacity=".32"/><circle cx="925.0" cy="789.5" r="6.3" fill="url(#mC)" stroke="#000" stroke-opacity="0.5" stroke-width="0.6"/><circle cx="925.5" cy="790.5" r=".9" fill="#800000"/><circle cx="938.2" cy="791.4" r="7.4" fill="#000" fill-opacity=".32"/><circle cx="937.5" cy="790.5" r="6.3" fill="url(#mC)" stroke="#000" stroke-opacity="0.5" stroke-width="0.6"/><circle cx="938.0" cy="791.5" r=".9" fill="#800000"/><circle cx="955.7" cy="790.9" r="7.4" fill="#000" fill-opacity=".32"/><circle cx="955.0" cy="790.0" r="6.3" fill="url(#mC)" stroke="#000" stroke-opacity="0.5" stroke-width="0.6"/><circle cx="955.5" cy="791.0" r=".9" fill="#800000"/><circle cx="969.7" cy="791.9" r="7.4" fill="#000" fill-opacity=".32"/><circle cx="969.0" cy="791.0" r="6.3" fill="url(#mC)" stroke="#000" stroke-opacity="0.5" stroke-width="0.6"/><circle cx="969.5" cy="792.0" r=".9" fill="#800000"/><circle cx="984.0" cy="791.4" r="7.4" fill="#000" fill-opacity=".32"/><circle cx="983.3" cy="790.5" r="6.3" fill="url(#mC)" stroke="#000" stroke-opacity="0.5" stroke-width="0.6"/><circle cx="983.8" cy="791.5" r=".9" fill="#800000"/><circle cx="1002.4" cy="790.9" r="7.4" fill="#000" fill-opacity=".32"/><circle cx="1001.7" cy="790.0" r="6.3" fill="url(#mC)" stroke="#000" stroke-opacity="0.5" stroke-width="0.6"/><circle cx="1002.2" cy="791.0" r=".9" fill="#800000"/><circle cx="1018.2" cy="791.4" r="7.4" fill="#000" fill-opacity=".32"/><circle cx="1017.5" cy="790.5" r="6.3" fill="url(#mC)" stroke="#000" stroke-opacity="0.5" stroke-width="0.6"/><circle cx="1018.0" cy="791.5" r=".9" fill="#800000"/><circle cx="1031.5" cy="791.4" r="7.4" fill="#000" fill-opacity=".32"/><circle cx="1030.8" cy="790.5" r="6.3" fill="url(#mC)" stroke="#000" stroke-opacity="0.5" stroke-width="0.6"/><circle cx="1031.3" cy="791.5" r=".9" fill="#800000"/><circle cx="780.7" cy="945.1" r="7.4" fill="#000" fill-opacity=".32"/><circle cx="780.0" cy="944.2" r="6.3" fill="url(#mB)" stroke="#000" stroke-opacity="0.5" stroke-width="0.6"/><circle cx="802.4" cy="933.4" r="7.4" fill="#000" fill-opacity=".32"/><circle cx="801.7" cy="932.5" r="6.3" fill="url(#mB)" stroke="#000" stroke-opacity="0.5" stroke-width="0.6"/><circle cx="827.4" cy="919.2" r="7.4" fill="#000" fill-opacity=".32"/><circle cx="826.7" cy="918.3" r="6.3" fill="url(#mB)" stroke="#000" stroke-opacity="0.5" stroke-width="0.6"/><circle cx="856.5" cy="902.6" r="7.4" fill="#000" fill-opacity=".32"/><circle cx="855.8" cy="901.7" r="6.3" fill="url(#mB)" stroke="#000" stroke-opacity="0.5" stroke-width="0.6"/><circle cx="879.4" cy="889.6" r="7.4" fill="#000" fill-opacity=".32"/><circle cx="878.7" cy="888.7" r="6.3" fill="url(#mB)" stroke="#000" stroke-opacity="0.5" stroke-width="0.6"/><circle cx="907.4" cy="875.6" r="7.4" fill="#000" fill-opacity=".32"/><circle cx="906.7" cy="874.7" r="6.3" fill="url(#mB)" stroke="#000" stroke-opacity="0.5" stroke-width="0.6"/><circle cx="936.5" cy="855.6" r="7.4" fill="#000" fill-opacity=".32"/><circle cx="935.8" cy="854.7" r="6.3" fill="url(#mB)" stroke="#000" stroke-opacity="0.5" stroke-width="0.6"/><circle cx="965.4" cy="839.2" r="7.4" fill="#000" fill-opacity=".32"/><circle cx="964.7" cy="838.3" r="6.3" fill="url(#mB)" stroke="#000" stroke-opacity="0.5" stroke-width="0.6"/><circle cx="995.7" cy="819.6" r="7.4" fill="#000" fill-opacity=".32"/><circle cx="995.0" cy="818.7" r="6.3" fill="url(#mB)" stroke="#000" stroke-opacity="0.5" stroke-width="0.6"/><circle cx="1025.7" cy="803.4" r="7.4" fill="#000" fill-opacity=".32"/><circle cx="1025.0" cy="802.5" r="6.3" fill="url(#mB)" stroke="#000" stroke-opacity="0.5" stroke-width="0.6"/><circle cx="1047.4" cy="800.1" r="7.4" fill="#000" fill-opacity=".32"/><circle cx="1046.7" cy="799.2" r="6.3" fill="url(#mM)" stroke="#000" stroke-opacity="0.5" stroke-width="0.6"/><circle cx="1047.2" cy="800.2" r=".9" fill="#600060"/><circle cx="1051.5" cy="810.9" r="7.4" fill="#000" fill-opacity=".32"/><circle cx="1050.8" cy="810.0" r="6.3" fill="url(#mM)" stroke="#000" stroke-opacity="0.5" stroke-width="0.6"/><circle cx="1051.3" cy="811.0" r=".9" fill="#600060"/><circle cx="1055.7" cy="820.9" r="7.4" fill="#000" fill-opacity=".32"/><circle cx="1055.0" cy="820.0" r="6.3" fill="url(#mM)" stroke="#000" stroke-opacity="0.5" stroke-width="0.6"/><circle cx="1055.5" cy="821.0" r=".9" fill="#600060"/><circle cx="1055.7" cy="830.9" r="7.4" fill="#000" fill-opacity=".32"/><circle cx="1055.0" cy="830.0" r="6.3" fill="url(#mM)" stroke="#000" stroke-opacity="0.5" stroke-width="0.6"/><circle cx="1055.5" cy="831.0" r=".9" fill="#600060"/><circle cx="1060.7" cy="842.6" r="7.4" fill="#000" fill-opacity=".32"/><circle cx="1060.0" cy="841.7" r="6.3" fill="url(#mM)" stroke="#000" stroke-opacity="0.5" stroke-width="0.6"/><circle cx="1060.5" cy="842.7" r=".9" fill="#600060"/><circle cx="1064.9" cy="853.4" r="7.4" fill="#000" fill-opacity=".32"/><circle cx="1064.2" cy="852.5" r="6.3" fill="url(#mM)" stroke="#000" stroke-opacity="0.5" stroke-width="0.6"/><circle cx="1064.7" cy="853.5" r=".9" fill="#600060"/><circle cx="1069.9" cy="862.6" r="7.4" fill="#000" fill-opacity=".32"/><circle cx="1069.2" cy="861.7" r="6.3" fill="url(#mM)" stroke="#000" stroke-opacity="0.5" stroke-width="0.6"/><circle cx="1069.7" cy="862.7" r=".9" fill="#600060"/><circle cx="1065.7" cy="872.6" r="7.4" fill="#000" fill-opacity=".32"/><circle cx="1065.0" cy="871.7" r="6.3" fill="url(#mM)" stroke="#000" stroke-opacity="0.5" stroke-width="0.6"/><circle cx="1065.5" cy="872.7" r=".9" fill="#600060"/><circle cx="1069.9" cy="881.7" r="7.4" fill="#000" fill-opacity=".32"/><circle cx="1069.2" cy="880.8" r="6.3" fill="url(#mM)" stroke="#000" stroke-opacity="0.5" stroke-width="0.6"/><circle cx="1069.7" cy="881.8" r=".9" fill="#600060"/><circle cx="1074.0" cy="891.7" r="7.4" fill="#000" fill-opacity=".32"/><circle cx="1073.3" cy="890.8" r="6.3" fill="url(#mM)" stroke="#000" stroke-opacity="0.5" stroke-width="0.6"/><circle cx="1073.8" cy="891.8" r=".9" fill="#600060"/><circle cx="1063.2" cy="782.6" r="7.4" fill="#000" fill-opacity=".32"/><circle cx="1062.5" cy="781.7" r="6.3" fill="url(#mY)" stroke="#000" stroke-opacity="0.5" stroke-width="0.6"/><circle cx="1063.0" cy="782.7" r=".9" fill="#000080"/><circle cx="1078.2" cy="772.2" r="7.4" fill="#000" fill-opacity=".32"/><circle cx="1077.5" cy="771.3" r="6.3" fill="url(#mY)" stroke="#000" stroke-opacity="0.5" stroke-width="0.6"/><circle cx="1078.0" cy="772.3" r=".9" fill="#000080"/><circle cx="1097.4" cy="762.2" r="7.4" fill="#000" fill-opacity=".32"/><circle cx="1096.7" cy="761.3" r="6.3" fill="url(#mY)" stroke="#000" stroke-opacity="0.5" stroke-width="0.6"/><circle cx="1097.2" cy="762.3" r=".9" fill="#000080"/><circle cx="1114.9" cy="752.9" r="7.4" fill="#000" fill-opacity=".32"/><circle cx="1114.2" cy="752.0" r="6.3" fill="url(#mY)" stroke="#000" stroke-opacity="0.5" stroke-width="0.6"/><circle cx="1114.7" cy="753.0" r=".9" fill="#000080"/><circle cx="1132.0" cy="741.2" r="7.4" fill="#000" fill-opacity=".32"/><circle cx="1131.3" cy="740.3" r="6.3" fill="url(#mY)" stroke="#000" stroke-opacity="0.5" stroke-width="0.6"/><circle cx="1131.8" cy="741.3" r=".9" fill="#000080"/><circle cx="1149.9" cy="730.9" r="7.4" fill="#000" fill-opacity=".32"/><circle cx="1149.2" cy="730.0" r="6.3" fill="url(#mY)" stroke="#000" stroke-opacity="0.5" stroke-width="0.6"/><circle cx="1149.7" cy="731.0" r=".9" fill="#000080"/><circle cx="1167.0" cy="722.9" r="7.4" fill="#000" fill-opacity=".32"/><circle cx="1166.3" cy="722.0" r="6.3" fill="url(#mY)" stroke="#000" stroke-opacity="0.5" stroke-width="0.6"/><circle cx="1166.8" cy="723.0" r=".9" fill="#000080"/><circle cx="1182.7" cy="712.6" r="7.4" fill="#000" fill-opacity=".32"/><circle cx="1182.0" cy="711.7" r="6.3" fill="url(#mY)" stroke="#000" stroke-opacity="0.5" stroke-width="0.6"/><circle cx="1182.5" cy="712.7" r=".9" fill="#000080"/><circle cx="1197.4" cy="704.2" r="7.4" fill="#000" fill-opacity=".32"/><circle cx="1196.7" cy="703.3" r="6.3" fill="url(#mY)" stroke="#000" stroke-opacity="0.5" stroke-width="0.6"/><circle cx="1197.2" cy="704.3" r=".9" fill="#000080"/><circle cx="1211.5" cy="695.6" r="7.4" fill="#000" fill-opacity=".32"/><circle cx="1210.8" cy="694.7" r="6.3" fill="url(#mY)" stroke="#000" stroke-opacity="0.5" stroke-width="0.6"/><circle cx="1211.3" cy="695.7" r=".9" fill="#000080"/><circle cx="1094.9" cy="793.4" r="6.300000000000001" fill="#000" fill-opacity=".32"/><circle cx="1094.2" cy="792.5" r="5.2" fill="url(#mW)" stroke="#000" stroke-opacity="0.85" stroke-width="0.9"/><circle cx="1106.5" cy="777.6" r="6.300000000000001" fill="#000" fill-opacity=".32"/><circle cx="1105.8" cy="776.7" r="5.2" fill="url(#mW)" stroke="#000" stroke-opacity="0.85" stroke-width="0.9"/><circle cx="1118.2" cy="775.1" r="6.300000000000001" fill="#000" fill-opacity=".32"/><circle cx="1117.5" cy="774.2" r="5.2" fill="url(#mW)" stroke="#000" stroke-opacity="0.85" stroke-width="0.9"/><circle cx="1136.5" cy="767.2" r="6.300000000000001" fill="#000" fill-opacity=".32"/><circle cx="1135.8" cy="766.3" r="5.2" fill="url(#mW)" stroke="#000" stroke-opacity="0.85" stroke-width="0.9"/><circle cx="1150.4" cy="770.9" r="6.300000000000001" fill="#000" fill-opacity=".32"/><circle cx="1149.7" cy="770.0" r="5.2" fill="url(#mW)" stroke="#000" stroke-opacity="0.85" stroke-width="0.9"/><circle cx="1149.9" cy="764.2" r="6.300000000000001" fill="#000" fill-opacity=".32"/><circle cx="1149.2" cy="763.3" r="5.2" fill="url(#mW)" stroke="#000" stroke-opacity="0.85" stroke-width="0.9"/><circle cx="1158.2" cy="766.2" r="6.300000000000001" fill="#000" fill-opacity=".32"/><circle cx="1157.5" cy="765.3" r="5.2" fill="url(#mW)" stroke="#000" stroke-opacity="0.85" stroke-width="0.9"/><circle cx="1172.4" cy="765.1" r="6.300000000000001" fill="#000" fill-opacity=".32"/><circle cx="1171.7" cy="764.2" r="5.2" fill="url(#mW)" stroke="#000" stroke-opacity="0.85" stroke-width="0.9"/><circle cx="1148.2" cy="785.9" r="6.300000000000001" fill="#000" fill-opacity=".32"/><circle cx="1147.5" cy="785.0" r="5.2" fill="url(#mW)" stroke="#000" stroke-opacity="0.85" stroke-width="0.9"/><circle cx="1180.7" cy="788.4" r="6.300000000000001" fill="#000" fill-opacity=".32"/><circle cx="1180.0" cy="787.5" r="5.2" fill="url(#mW)" stroke="#000" stroke-opacity="0.85" stroke-width="0.9"/><circle cx="1192.4" cy="772.9" r="6.300000000000001" fill="#000" fill-opacity=".32"/><circle cx="1191.7" cy="772.0" r="5.2" fill="url(#mW)" stroke="#000" stroke-opacity="0.85" stroke-width="0.9"/><circle cx="1211.5" cy="782.9" r="6.300000000000001" fill="#000" fill-opacity=".32"/><circle cx="1210.8" cy="782.0" r="5.2" fill="url(#mW)" stroke="#000" stroke-opacity="0.85" stroke-width="0.9"/><circle cx="1216.5" cy="792.2" r="6.300000000000001" fill="#000" fill-opacity=".32"/><circle cx="1215.8" cy="791.3" r="5.2" fill="url(#mW)" stroke="#000" stroke-opacity="0.85" stroke-width="0.9"/><circle cx="1233.2" cy="763.7" r="6.300000000000001" fill="#000" fill-opacity=".32"/><circle cx="1232.5" cy="762.8" r="5.2" fill="url(#mW)" stroke="#000" stroke-opacity="0.85" stroke-width="0.9"/><circle cx="1231.5" cy="767.9" r="6.300000000000001" fill="#000" fill-opacity=".32"/><circle cx="1230.8" cy="767.0" r="5.2" fill="url(#mW)" stroke="#000" stroke-opacity="0.85" stroke-width="0.9"/><circle cx="1251.0" cy="761.2" r="6.300000000000001" fill="#000" fill-opacity=".32"/><circle cx="1250.3" cy="760.3" r="5.2" fill="url(#mW)" stroke="#000" stroke-opacity="0.85" stroke-width="0.9"/><circle cx="1259.4" cy="763.4" r="6.300000000000001" fill="#000" fill-opacity=".32"/><circle cx="1258.7" cy="762.5" r="5.2" fill="url(#mW)" stroke="#000" stroke-opacity="0.85" stroke-width="0.9"/><circle cx="1251.5" cy="787.1" r="6.300000000000001" fill="#000" fill-opacity=".32"/><circle cx="1250.8" cy="786.2" r="5.2" fill="url(#mW)" stroke="#000" stroke-opacity="0.85" stroke-width="0.9"/><circle cx="1289.9" cy="777.2" r="6.300000000000001" fill="#000" fill-opacity=".32"/><circle cx="1289.2" cy="776.3" r="5.2" fill="url(#mW)" stroke="#000" stroke-opacity="0.85" stroke-width="0.9"/><circle cx="1293.2" cy="767.1" r="6.300000000000001" fill="#000" fill-opacity=".32"/><circle cx="1292.5" cy="766.2" r="5.2" fill="url(#mW)" stroke="#000" stroke-opacity="0.85" stroke-width="0.9"/><circle cx="1308.2" cy="748.4" r="6.300000000000001" fill="#000" fill-opacity=".32"/><circle cx="1307.5" cy="747.5" r="5.2" fill="url(#mW)" stroke="#000" stroke-opacity="0.85" stroke-width="0.9"/><circle cx="1315.7" cy="766.2" r="6.300000000000001" fill="#000" fill-opacity=".32"/><circle cx="1315.0" cy="765.3" r="5.2" fill="url(#mW)" stroke="#000" stroke-opacity="0.85" stroke-width="0.9"/><circle cx="1327.4" cy="755.4" r="6.300000000000001" fill="#000" fill-opacity=".32"/><circle cx="1326.7" cy="754.5" r="5.2" fill="url(#mW)" stroke="#000" stroke-opacity="0.85" stroke-width="0.9"/><circle cx="986.5" cy="844.2" r="6.300000000000001" fill="#000" fill-opacity=".32"/><circle cx="985.8" cy="843.3" r="5.2" fill="url(#mW)" stroke="#000" stroke-opacity="0.85" stroke-width="0.9"/><circle cx="1036.7" cy="787.9" r="6.6" fill="#000" fill-opacity=".32"/><circle cx="1036.0" cy="787.0" r="5.5" fill="url(#mW)" stroke="#000" stroke-opacity="0.85" stroke-width="0.9"/><circle cx="1047.7" cy="788.9" r="6.6" fill="#000" fill-opacity=".32"/><circle cx="1047.0" cy="788.0" r="5.5" fill="url(#mW)" stroke="#000" stroke-opacity="0.85" stroke-width="0.9"/><circle cx="1042.500" cy="791.500" r="6" fill="url(#mYY)" stroke="#000" stroke-width="1.600"/><text x="1018" y="642.300" font-family="Liberation Sans,sans-serif" font-size="11" font-weight="700" fill="#000">+</text><text x="1215" y="695.800" font-family="Liberation Sans,sans-serif" font-size="11" font-weight="700" fill="#000">+</text><path d="M1052.500 888.500l3 3.500 5-5" stroke="#400040" stroke-width="1.300" fill="none"/></svg>
<div style="position:absolute;left:0px;top:1019px;width:1920px;height:23px;background:#f0f0f0;"></div>
<div style="position:absolute;left:19px;top:1027px;width:1825px;height:7.5px;background:#8a8a8a;border-radius:4px;"></div>
<svg style="position:absolute;left:6px;top:1025px" width="8" height="11"><path d="M7 0v10L0 5z" fill="#8a8a8a"/></svg>
<svg style="position:absolute;left:1890px;top:1025px" width="8" height="11"><path d="M0 0v10l7-5z" fill="#8a8a8a"/></svg>
<div style="position:absolute;left:0px;top:1041.5px;width:1920px;height:1.5px;background:#111;"></div>
<div style="position:absolute;left:0px;top:1043px;width:1920px;height:18px;background:#f0f0f0;"></div>
<div style="position:absolute;left:0px;top:1043px;width:54px;height:18px;box-sizing:border-box;border:1px solid #000;border-width:0 2px 2px 1px;"></div>
<div style="position:absolute;left:1px;top:1043px;width:17px;height:16px;background:#f4f4f4;box-sizing:border-box;border:1px solid #fff;border-right-color:#8a8a8a;border-bottom-color:#8a8a8a;"></div>
<div style="position:absolute;left:19px;top:1043px;width:17px;height:16px;background:#f4f4f4;box-sizing:border-box;border:1px solid #fff;border-right-color:#8a8a8a;border-bottom-color:#8a8a8a;"></div>
<div style="position:absolute;left:36px;top:1043px;width:17px;height:16px;background:#f4f4f4;box-sizing:border-box;border:1px solid #fff;border-right-color:#8a8a8a;border-bottom-color:#8a8a8a;"></div>
<svg style="position:absolute;left:4px;top:1046px" width="50" height="12" viewBox="0 0 50 12"><path d="M1.500 1.500l8 8M9.500 1.500l-8 8" stroke="#000" stroke-width="1.400" fill="none"/><path d="M25 1.500v8l-4.500-4z" fill="#000"/><path d="M38 1.500v8l4.500-4z" fill="#000"/></svg>
<svg style="position:absolute;left:54px;top:1043px" width="340" height="18" viewBox="0 0 340 18"><path d="M2 0l8 17.500h58l8-17.500z" fill="#fff"/><path d="M2 0l8 17.500h58" stroke="#000" stroke-width="1.200" fill="none"/><path d="M66 17.500l9.500-17" stroke="#000" stroke-width="1.200"/><path d="M68 10l4 7.500h70l6-7.500M142 0l8 17.500h96l6-7.500M246 0l8 17.500h70l8-17.500" stroke="#000" stroke-width="1.100" fill="none"/><path d="M142 17.500l7.500-13M246.500 17.500l7.500-13" stroke="#000" stroke-width="1.100"/></svg>
<span style="position:absolute;left:66.50px;top:1044.36px;font:700 10.5px/14px 'Liberation Sans',sans-serif;color:#000;white-space:pre;letter-spacing:0.079px;">Measures</span>
<span style="position:absolute;left:134.50px;top:1045.04px;font:400 10px/13px 'Liberation Sans',sans-serif;color:#000;white-space:pre;letter-spacing:-0.424px;">CIE Diagram</span>
<span style="position:absolute;left:216.00px;top:1045.04px;font:400 10px/13px 'Liberation Sans',sans-serif;color:#000;white-space:pre;letter-spacing:-0.412px;">Color temperature</span>
<span style="position:absolute;left:318.00px;top:1045.04px;font:400 10px/13px 'Liberation Sans',sans-serif;color:#000;white-space:pre;letter-spacing:-0.373px;">RGB Levels</span>
<svg style="position:absolute;left:1750px;top:1043px" width="17" height="17" viewBox="0 0 17 17"><path d="M1 1.500h14v10l-3 4-2-2h-4l-2 2-3-4z" fill="#8a8a10" stroke="#3a3a00" stroke-width=".8"/><rect x="4" y="3" width="7" height="5" fill="#e02020"/><path d="M5 6l2-2 3 1" stroke="#fff" stroke-width="1" fill="none"/><path d="M3 11h3.500l-.8 3.500h-2zM9.500 11h3.500l-.6 3.500h-2z" fill="#f0e000"/></svg>
<div style="position:absolute;left:1846px;top:1044px;width:13px;height:13px;background:#fff;box-sizing:border-box;border:1px solid #5a5a5a;box-shadow:inset 1px 1px 0 #8a8a8a;"></div>
<span style="position:absolute;left:1864.00px;top:1044.02px;font:400 11.5px/15px 'Liberation Sans',sans-serif;color:#000;white-space:pre;letter-spacing:-0.382px;">Reference</span>
<div style="position:absolute;left:0px;top:1061px;width:1920px;height:19px;background:linear-gradient(90deg,#e4ebf6 0%,#eaf0f9 30%,#eef3fb 100%);"></div>
<span style="position:absolute;left:2.00px;top:1063.84px;font:400 12px/16px 'Liberation Sans',sans-serif;color:#000;white-space:pre;letter-spacing:-0.672px;">Ready</span>
<div style="position:absolute;left:1743px;top:1063px;width:74px;height:17px;box-sizing:border-box;border:1px solid #b4c6e0;border-bottom:none;"></div>
<div style="position:absolute;left:1820px;top:1063px;width:28px;height:17px;box-sizing:border-box;border:1px solid #b4c6e0;border-bottom:none;"></div>
<div style="position:absolute;left:1851px;top:1063px;width:33px;height:17px;box-sizing:border-box;border:1px solid #b4c6e0;border-bottom:none;"></div>
<div style="position:absolute;left:1887px;top:1063px;width:33px;height:17px;box-sizing:border-box;border:1px solid #b4c6e0;border-bottom:none;"></div>
<span style="position:absolute;left:1853.00px;top:1064.34px;font:400 12px/16px 'Liberation Sans',sans-serif;color:#000;white-space:pre;letter-spacing:0.336px;">NUM</span>
</div></body></html>
